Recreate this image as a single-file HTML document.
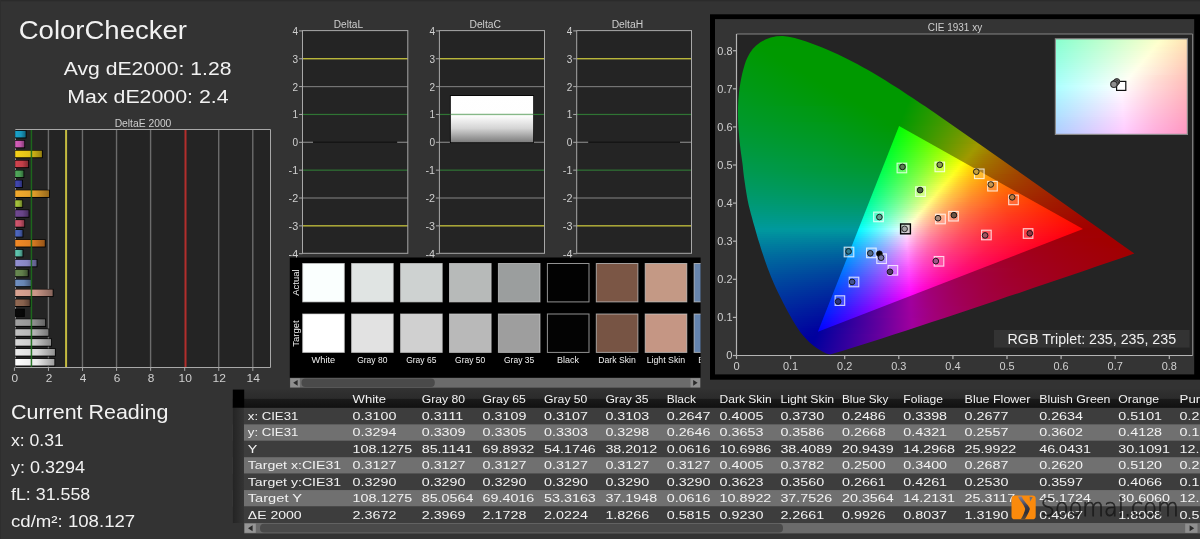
<!DOCTYPE html>
<html><head><meta charset="utf-8"><title>ColorChecker</title>
<style>html,body{margin:0;padding:0;background:#333;overflow:hidden}svg{display:block;will-change:transform}text{font-family:'Liberation Sans', 'DejaVu Sans', sans-serif;}</style>
</head><body>
<svg width="1200" height="539" viewBox="0 0 1200 539">
<rect x="0" y="0" width="1200" height="539" fill="#333333"/>
<rect x="0" y="0" width="1200" height="1.2" fill="#2b2b2b"/><rect x="0" y="0" width="1" height="539" fill="#2e2e2e"/>
<text x="18.7" y="39.3" font-size="26.5" fill="#f2f2f2" textLength="168.3" lengthAdjust="spacingAndGlyphs">ColorChecker</text>
<text x="63.8" y="75.3" font-size="19" fill="#f2f2f2" textLength="167.6" lengthAdjust="spacingAndGlyphs">Avg dE2000: 1.28</text>
<text x="67.3" y="102.8" font-size="19" fill="#f2f2f2" textLength="161.3" lengthAdjust="spacingAndGlyphs">Max dE2000: 2.4</text>
<rect x="15.5" y="129.5" width="255.0" height="238.0" fill="#242424"/>
<rect x="47.71" y="129.5" width="1.4" height="238.0" fill="#6c6c6c"/>
<rect x="81.77" y="129.5" width="1.4" height="238.0" fill="#6c6c6c"/>
<rect x="115.83" y="129.5" width="1.4" height="238.0" fill="#6c6c6c"/>
<rect x="149.89" y="129.5" width="1.4" height="238.0" fill="#6c6c6c"/>
<rect x="218.01" y="129.5" width="1.4" height="238.0" fill="#6c6c6c"/>
<rect x="252.07" y="129.5" width="1.4" height="238.0" fill="#6c6c6c"/>
<rect x="65.09" y="129.5" width="2" height="238.0" fill="#c4bb40"/>
<rect x="184.50" y="129.5" width="2" height="238.0" fill="#b22e2c"/>
<defs>
<linearGradient id="b0" x1="0" x2="1" y1="0" y2="0"><stop offset="0" stop-color="#1ba3cc"/><stop offset="0.55" stop-color="#1895bb"/><stop offset="1" stop-color="#10657e"/></linearGradient>
<linearGradient id="b1" x1="0" x2="1" y1="0" y2="0"><stop offset="0" stop-color="#d65fbc"/><stop offset="0.55" stop-color="#c457ac"/><stop offset="1" stop-color="#843a74"/></linearGradient>
<linearGradient id="b2" x1="0" x2="1" y1="0" y2="0"><stop offset="0" stop-color="#f5d21a"/><stop offset="0.55" stop-color="#e1c117"/><stop offset="1" stop-color="#978210"/></linearGradient>
<linearGradient id="b3" x1="0" x2="1" y1="0" y2="0"><stop offset="0" stop-color="#d3444f"/><stop offset="0.55" stop-color="#c23e48"/><stop offset="1" stop-color="#822a30"/></linearGradient>
<linearGradient id="b4" x1="0" x2="1" y1="0" y2="0"><stop offset="0" stop-color="#52ab5c"/><stop offset="0.55" stop-color="#4b9d54"/><stop offset="1" stop-color="#326a39"/></linearGradient>
<linearGradient id="b5" x1="0" x2="1" y1="0" y2="0"><stop offset="0" stop-color="#4349b4"/><stop offset="0.55" stop-color="#3d43a5"/><stop offset="1" stop-color="#292d6f"/></linearGradient>
<linearGradient id="b6" x1="0" x2="1" y1="0" y2="0"><stop offset="0" stop-color="#f3aa2e"/><stop offset="0.55" stop-color="#df9c2a"/><stop offset="1" stop-color="#96691c"/></linearGradient>
<linearGradient id="b7" x1="0" x2="1" y1="0" y2="0"><stop offset="0" stop-color="#a9c83e"/><stop offset="0.55" stop-color="#9bb839"/><stop offset="1" stop-color="#687c26"/></linearGradient>
<linearGradient id="b8" x1="0" x2="1" y1="0" y2="0"><stop offset="0" stop-color="#714a93"/><stop offset="0.55" stop-color="#674487"/><stop offset="1" stop-color="#462d5b"/></linearGradient>
<linearGradient id="b9" x1="0" x2="1" y1="0" y2="0"><stop offset="0" stop-color="#d5586f"/><stop offset="0.55" stop-color="#c35066"/><stop offset="1" stop-color="#843644"/></linearGradient>
<linearGradient id="b10" x1="0" x2="1" y1="0" y2="0"><stop offset="0" stop-color="#506ac4"/><stop offset="0.55" stop-color="#4961b4"/><stop offset="1" stop-color="#314179"/></linearGradient>
<linearGradient id="b11" x1="0" x2="1" y1="0" y2="0"><stop offset="0" stop-color="#f28a27"/><stop offset="0.55" stop-color="#de7e23"/><stop offset="1" stop-color="#965518"/></linearGradient>
<linearGradient id="b12" x1="0" x2="1" y1="0" y2="0"><stop offset="0" stop-color="#62cbb4"/><stop offset="0.55" stop-color="#5abaa5"/><stop offset="1" stop-color="#3c7d6f"/></linearGradient>
<linearGradient id="b13" x1="0" x2="1" y1="0" y2="0"><stop offset="0" stop-color="#9391d3"/><stop offset="0.55" stop-color="#8785c2"/><stop offset="1" stop-color="#5b5982"/></linearGradient>
<linearGradient id="b14" x1="0" x2="1" y1="0" y2="0"><stop offset="0" stop-color="#6a8a52"/><stop offset="0.55" stop-color="#617e4b"/><stop offset="1" stop-color="#415532"/></linearGradient>
<linearGradient id="b15" x1="0" x2="1" y1="0" y2="0"><stop offset="0" stop-color="#7191c3"/><stop offset="0.55" stop-color="#6785b3"/><stop offset="1" stop-color="#465978"/></linearGradient>
<linearGradient id="b16" x1="0" x2="1" y1="0" y2="0"><stop offset="0" stop-color="#dba493"/><stop offset="0.55" stop-color="#c99687"/><stop offset="1" stop-color="#87655b"/></linearGradient>
<linearGradient id="b17" x1="0" x2="1" y1="0" y2="0"><stop offset="0" stop-color="#936a54"/><stop offset="0.55" stop-color="#87614d"/><stop offset="1" stop-color="#5b4134"/></linearGradient>
<linearGradient id="b18" x1="0" x2="1" y1="0" y2="0"><stop offset="0" stop-color="#0a0a0a"/><stop offset="0.55" stop-color="#090909"/><stop offset="1" stop-color="#060606"/></linearGradient>
<linearGradient id="b19" x1="0" x2="1" y1="0" y2="0"><stop offset="0" stop-color="#a3a3a3"/><stop offset="0.55" stop-color="#959595"/><stop offset="1" stop-color="#656565"/></linearGradient>
<linearGradient id="b20" x1="0" x2="1" y1="0" y2="0"><stop offset="0" stop-color="#c3c3c3"/><stop offset="0.55" stop-color="#b3b3b3"/><stop offset="1" stop-color="#787878"/></linearGradient>
<linearGradient id="b21" x1="0" x2="1" y1="0" y2="0"><stop offset="0" stop-color="#dadada"/><stop offset="0.55" stop-color="#c8c8c8"/><stop offset="1" stop-color="#878787"/></linearGradient>
<linearGradient id="b22" x1="0" x2="1" y1="0" y2="0"><stop offset="0" stop-color="#ececec"/><stop offset="0.55" stop-color="#d9d9d9"/><stop offset="1" stop-color="#929292"/></linearGradient>
<linearGradient id="b23" x1="0" x2="1" y1="0" y2="0"><stop offset="0" stop-color="#ffffff"/><stop offset="0.55" stop-color="#eaeaea"/><stop offset="1" stop-color="#9e9e9e"/></linearGradient>
</defs>
<rect x="15.0" y="129.5" width="1" height="238.0" fill="#8a8a8a"/>
<rect x="15.0" y="130.26" width="11.5" height="8.1" fill="#000"/>
<rect x="15.2" y="130.86" width="10.5" height="6.6" fill="url(#b0)"/>
<rect x="15.0" y="140.17" width="10.1" height="8.1" fill="#000"/>
<rect x="15.2" y="140.77" width="9.1" height="6.6" fill="url(#b1)"/>
<rect x="15.0" y="150.09" width="27.7" height="8.1" fill="#000"/>
<rect x="15.2" y="150.69" width="26.7" height="6.6" fill="url(#b2)"/>
<rect x="15.0" y="160.01" width="14.0" height="8.1" fill="#000"/>
<rect x="15.2" y="160.61" width="13.0" height="6.6" fill="url(#b3)"/>
<rect x="15.0" y="169.92" width="9.3" height="8.1" fill="#000"/>
<rect x="15.2" y="170.52" width="8.3" height="6.6" fill="url(#b4)"/>
<rect x="15.0" y="179.84" width="7.9" height="8.1" fill="#000"/>
<rect x="15.2" y="180.44" width="6.9" height="6.6" fill="url(#b5)"/>
<rect x="15.0" y="189.76" width="34.8" height="8.1" fill="#000"/>
<rect x="15.2" y="190.36" width="33.8" height="6.6" fill="url(#b6)"/>
<rect x="15.0" y="199.67" width="8.1" height="8.1" fill="#000"/>
<rect x="15.2" y="200.27" width="7.1" height="6.6" fill="url(#b7)"/>
<rect x="15.0" y="209.59" width="14.4" height="8.1" fill="#000"/>
<rect x="15.2" y="210.19" width="13.4" height="6.6" fill="url(#b8)"/>
<rect x="15.0" y="219.51" width="10.1" height="8.1" fill="#000"/>
<rect x="15.2" y="220.11" width="9.1" height="6.6" fill="url(#b9)"/>
<rect x="15.0" y="229.42" width="8.4" height="8.1" fill="#000"/>
<rect x="15.2" y="230.02" width="7.4" height="6.6" fill="url(#b10)"/>
<rect x="15.0" y="239.34" width="30.6" height="8.1" fill="#000"/>
<rect x="15.2" y="239.94" width="29.6" height="6.6" fill="url(#b11)"/>
<rect x="15.0" y="249.26" width="8.4" height="8.1" fill="#000"/>
<rect x="15.2" y="249.86" width="7.4" height="6.6" fill="url(#b12)"/>
<rect x="15.0" y="259.18" width="22.4" height="8.1" fill="#000"/>
<rect x="15.2" y="259.77" width="21.4" height="6.6" fill="url(#b13)"/>
<rect x="15.0" y="269.09" width="13.6" height="8.1" fill="#000"/>
<rect x="15.2" y="269.69" width="12.6" height="6.6" fill="url(#b14)"/>
<rect x="15.0" y="279.01" width="16.8" height="8.1" fill="#000"/>
<rect x="15.2" y="279.61" width="15.8" height="6.6" fill="url(#b15)"/>
<rect x="15.0" y="288.93" width="38.5" height="8.1" fill="#000"/>
<rect x="15.2" y="289.52" width="37.5" height="6.6" fill="url(#b16)"/>
<rect x="15.0" y="298.84" width="15.6" height="8.1" fill="#000"/>
<rect x="15.2" y="299.44" width="14.6" height="6.6" fill="url(#b17)"/>
<rect x="15.0" y="308.76" width="9.8" height="8.1" fill="#000"/>
<rect x="15.2" y="309.36" width="8.8" height="6.6" fill="url(#b18)"/>
<rect x="15.0" y="318.68" width="31.0" height="8.1" fill="#000"/>
<rect x="15.2" y="319.27" width="30.0" height="6.6" fill="url(#b19)"/>
<rect x="15.0" y="328.59" width="34.3" height="8.1" fill="#000"/>
<rect x="15.2" y="329.19" width="33.3" height="6.6" fill="url(#b20)"/>
<rect x="15.0" y="338.51" width="36.9" height="8.1" fill="#000"/>
<rect x="15.2" y="339.11" width="35.9" height="6.6" fill="url(#b21)"/>
<rect x="15.0" y="348.43" width="40.7" height="8.1" fill="#000"/>
<rect x="15.2" y="349.02" width="39.7" height="6.6" fill="url(#b22)"/>
<rect x="15.0" y="358.34" width="40.2" height="8.1" fill="#000"/>
<rect x="15.2" y="358.94" width="39.2" height="6.6" fill="url(#b23)"/>
<rect x="30.68" y="129.5" width="1.5" height="238.0" fill="#1c6c1c" opacity="0.92"/>
<path d="M15.5 129.5 H270.5 V367.5 H15.5" fill="none" stroke="#a8a8a8" stroke-width="1"/>
<text x="143.0" y="126.7" font-size="10" fill="#cfcfcf" text-anchor="middle" textLength="56.7" lengthAdjust="spacingAndGlyphs">DeltaE 2000</text>
<rect x="13.90" y="367.5" width="1" height="3.4" fill="#a8a8a8"/>
<text x="14.9" y="381.8" font-size="10.8" fill="#d0d0d0" text-anchor="middle" textLength="6.6" lengthAdjust="spacingAndGlyphs">0</text>
<rect x="47.96" y="367.5" width="1" height="3.4" fill="#a8a8a8"/>
<text x="49.0" y="381.8" font-size="10.8" fill="#d0d0d0" text-anchor="middle" textLength="6.6" lengthAdjust="spacingAndGlyphs">2</text>
<rect x="82.02" y="367.5" width="1" height="3.4" fill="#a8a8a8"/>
<text x="83.0" y="381.8" font-size="10.8" fill="#d0d0d0" text-anchor="middle" textLength="6.6" lengthAdjust="spacingAndGlyphs">4</text>
<rect x="116.08" y="367.5" width="1" height="3.4" fill="#a8a8a8"/>
<text x="117.1" y="381.8" font-size="10.8" fill="#d0d0d0" text-anchor="middle" textLength="6.6" lengthAdjust="spacingAndGlyphs">6</text>
<rect x="150.14" y="367.5" width="1" height="3.4" fill="#a8a8a8"/>
<text x="151.1" y="381.8" font-size="10.8" fill="#d0d0d0" text-anchor="middle" textLength="6.6" lengthAdjust="spacingAndGlyphs">8</text>
<rect x="184.20" y="367.5" width="1" height="3.4" fill="#a8a8a8"/>
<text x="185.2" y="381.8" font-size="10.8" fill="#d0d0d0" text-anchor="middle" textLength="13.4" lengthAdjust="spacingAndGlyphs">10</text>
<rect x="218.26" y="367.5" width="1" height="3.4" fill="#a8a8a8"/>
<text x="219.3" y="381.8" font-size="10.8" fill="#d0d0d0" text-anchor="middle" textLength="13.4" lengthAdjust="spacingAndGlyphs">12</text>
<rect x="252.32" y="367.5" width="1" height="3.4" fill="#a8a8a8"/>
<text x="253.3" y="381.8" font-size="10.8" fill="#d0d0d0" text-anchor="middle" textLength="13.4" lengthAdjust="spacingAndGlyphs">14</text>
<text x="11.0" y="418.8" font-size="21" fill="#f2f2f2" textLength="157.4" lengthAdjust="spacingAndGlyphs">Current Reading</text>
<text x="11.0" y="446.3" font-size="16.3" fill="#f2f2f2" textLength="52.8" lengthAdjust="spacingAndGlyphs">x: 0.31</text>
<text x="11.0" y="473.0" font-size="16.3" fill="#f2f2f2" textLength="74.0" lengthAdjust="spacingAndGlyphs">y: 0.3294</text>
<text x="11.0" y="499.8" font-size="16.3" fill="#f2f2f2" textLength="79.3" lengthAdjust="spacingAndGlyphs">fL: 31.558</text>
<text x="11.0" y="526.7" font-size="16.3" fill="#f2f2f2" textLength="124.2" lengthAdjust="spacingAndGlyphs">cd/m²: 108.127</text>
<defs><linearGradient id="wb" x1="0" x2="0" y1="0" y2="1"><stop offset="0" stop-color="#fff"/><stop offset="0.42" stop-color="#fefefe"/><stop offset="0.7" stop-color="#d4d4d4"/><stop offset="1" stop-color="#7c7c7c"/></linearGradient></defs>
<rect x="302.5" y="30.6" width="105.3" height="222.7" fill="#242424"/>
<rect x="302.5" y="58.15" width="105.3" height="1.2" fill="#d2ce3e"/>
<rect x="302.5" y="86.00" width="105.3" height="1.2" fill="#747474"/>
<rect x="302.5" y="113.85" width="105.3" height="1.2" fill="#2f7434"/>
<rect x="302.5" y="141.70" width="105.3" height="1.2" fill="#808080"/>
<rect x="302.5" y="169.55" width="105.3" height="1.2" fill="#2f7434"/>
<rect x="302.5" y="197.40" width="105.3" height="1.2" fill="#747474"/>
<rect x="302.5" y="225.25" width="105.3" height="1.2" fill="#d2ce3e"/>
<rect x="313.0" y="141.2" width="84.2" height="1.8" fill="#151515"/>
<rect x="302.5" y="30.6" width="105.3" height="222.7" fill="none" stroke="#a8a8a8" stroke-width="1"/>
<rect x="299.0" y="30.40" width="3.5" height="1" fill="#a8a8a8"/>
<text x="298.2" y="34.8" font-size="10.6" fill="#d0d0d0" text-anchor="end" textLength="5.6" lengthAdjust="spacingAndGlyphs">4</text>
<rect x="299.0" y="58.25" width="3.5" height="1" fill="#a8a8a8"/>
<text x="298.2" y="62.6" font-size="10.6" fill="#d0d0d0" text-anchor="end" textLength="5.6" lengthAdjust="spacingAndGlyphs">3</text>
<rect x="299.0" y="86.10" width="3.5" height="1" fill="#a8a8a8"/>
<text x="298.2" y="90.5" font-size="10.6" fill="#d0d0d0" text-anchor="end" textLength="5.6" lengthAdjust="spacingAndGlyphs">2</text>
<rect x="299.0" y="113.95" width="3.5" height="1" fill="#a8a8a8"/>
<text x="298.2" y="118.4" font-size="10.6" fill="#d0d0d0" text-anchor="end" textLength="5.6" lengthAdjust="spacingAndGlyphs">1</text>
<rect x="299.0" y="141.80" width="3.5" height="1" fill="#a8a8a8"/>
<text x="298.2" y="146.2" font-size="10.6" fill="#d0d0d0" text-anchor="end" textLength="5.6" lengthAdjust="spacingAndGlyphs">0</text>
<rect x="299.0" y="169.65" width="3.5" height="1" fill="#a8a8a8"/>
<text x="298.2" y="174.1" font-size="10.6" fill="#d0d0d0" text-anchor="end" textLength="9.6" lengthAdjust="spacingAndGlyphs">-1</text>
<rect x="299.0" y="197.50" width="3.5" height="1" fill="#a8a8a8"/>
<text x="298.2" y="201.9" font-size="10.6" fill="#d0d0d0" text-anchor="end" textLength="9.6" lengthAdjust="spacingAndGlyphs">-2</text>
<rect x="299.0" y="225.35" width="3.5" height="1" fill="#a8a8a8"/>
<text x="298.2" y="229.8" font-size="10.6" fill="#d0d0d0" text-anchor="end" textLength="9.6" lengthAdjust="spacingAndGlyphs">-3</text>
<rect x="299.0" y="253.20" width="3.5" height="1" fill="#a8a8a8"/>
<text x="298.2" y="257.6" font-size="10.6" fill="#d0d0d0" text-anchor="end" textLength="9.6" lengthAdjust="spacingAndGlyphs">-4</text>
<text x="348.4" y="27.5" font-size="10" fill="#cfcfcf" text-anchor="middle" textLength="29.2" lengthAdjust="spacingAndGlyphs">DeltaL</text>
<rect x="439.4" y="30.6" width="105.1" height="222.7" fill="#242424"/>
<rect x="439.4" y="58.15" width="105.1" height="1.2" fill="#d2ce3e"/>
<rect x="439.4" y="86.00" width="105.1" height="1.2" fill="#747474"/>
<rect x="439.4" y="113.85" width="105.1" height="1.2" fill="#2f7434"/>
<rect x="439.4" y="141.70" width="105.1" height="1.2" fill="#808080"/>
<rect x="439.4" y="169.55" width="105.1" height="1.2" fill="#2f7434"/>
<rect x="439.4" y="197.40" width="105.1" height="1.2" fill="#747474"/>
<rect x="439.4" y="225.25" width="105.1" height="1.2" fill="#d2ce3e"/>
<rect x="449.9" y="95.2" width="84.0" height="47.9" fill="#000"/>
<rect x="450.8" y="96.0" width="82.4" height="46.3" fill="url(#wb)"/>
<rect x="450.8" y="113.75" width="82.4" height="1.4" fill="#86b888"/>
<rect x="439.4" y="30.6" width="105.1" height="222.7" fill="none" stroke="#a8a8a8" stroke-width="1"/>
<rect x="435.9" y="30.40" width="3.5" height="1" fill="#a8a8a8"/>
<text x="435.1" y="34.8" font-size="10.6" fill="#d0d0d0" text-anchor="end" textLength="5.6" lengthAdjust="spacingAndGlyphs">4</text>
<rect x="435.9" y="58.25" width="3.5" height="1" fill="#a8a8a8"/>
<text x="435.1" y="62.6" font-size="10.6" fill="#d0d0d0" text-anchor="end" textLength="5.6" lengthAdjust="spacingAndGlyphs">3</text>
<rect x="435.9" y="86.10" width="3.5" height="1" fill="#a8a8a8"/>
<text x="435.1" y="90.5" font-size="10.6" fill="#d0d0d0" text-anchor="end" textLength="5.6" lengthAdjust="spacingAndGlyphs">2</text>
<rect x="435.9" y="113.95" width="3.5" height="1" fill="#a8a8a8"/>
<text x="435.1" y="118.4" font-size="10.6" fill="#d0d0d0" text-anchor="end" textLength="5.6" lengthAdjust="spacingAndGlyphs">1</text>
<rect x="435.9" y="141.80" width="3.5" height="1" fill="#a8a8a8"/>
<text x="435.1" y="146.2" font-size="10.6" fill="#d0d0d0" text-anchor="end" textLength="5.6" lengthAdjust="spacingAndGlyphs">0</text>
<rect x="435.9" y="169.65" width="3.5" height="1" fill="#a8a8a8"/>
<text x="435.1" y="174.1" font-size="10.6" fill="#d0d0d0" text-anchor="end" textLength="9.6" lengthAdjust="spacingAndGlyphs">-1</text>
<rect x="435.9" y="197.50" width="3.5" height="1" fill="#a8a8a8"/>
<text x="435.1" y="201.9" font-size="10.6" fill="#d0d0d0" text-anchor="end" textLength="9.6" lengthAdjust="spacingAndGlyphs">-2</text>
<rect x="435.9" y="225.35" width="3.5" height="1" fill="#a8a8a8"/>
<text x="435.1" y="229.8" font-size="10.6" fill="#d0d0d0" text-anchor="end" textLength="9.6" lengthAdjust="spacingAndGlyphs">-3</text>
<rect x="435.9" y="253.20" width="3.5" height="1" fill="#a8a8a8"/>
<text x="435.1" y="257.6" font-size="10.6" fill="#d0d0d0" text-anchor="end" textLength="9.6" lengthAdjust="spacingAndGlyphs">-4</text>
<text x="485.2" y="27.5" font-size="10" fill="#cfcfcf" text-anchor="middle" textLength="31.5" lengthAdjust="spacingAndGlyphs">DeltaC</text>
<rect x="576.7" y="30.6" width="114.8" height="222.7" fill="#242424"/>
<rect x="576.7" y="58.15" width="114.8" height="1.2" fill="#d2ce3e"/>
<rect x="576.7" y="86.00" width="114.8" height="1.2" fill="#747474"/>
<rect x="576.7" y="113.85" width="114.8" height="1.2" fill="#2f7434"/>
<rect x="576.7" y="141.70" width="114.8" height="1.2" fill="#808080"/>
<rect x="576.7" y="169.55" width="114.8" height="1.2" fill="#2f7434"/>
<rect x="576.7" y="197.40" width="114.8" height="1.2" fill="#747474"/>
<rect x="576.7" y="225.25" width="114.8" height="1.2" fill="#d2ce3e"/>
<rect x="588.2" y="141.2" width="91.8" height="1.8" fill="#151515"/>
<rect x="576.7" y="30.6" width="114.8" height="222.7" fill="none" stroke="#a8a8a8" stroke-width="1"/>
<rect x="573.2" y="30.40" width="3.5" height="1" fill="#a8a8a8"/>
<text x="572.4" y="34.8" font-size="10.6" fill="#d0d0d0" text-anchor="end" textLength="5.6" lengthAdjust="spacingAndGlyphs">4</text>
<rect x="573.2" y="58.25" width="3.5" height="1" fill="#a8a8a8"/>
<text x="572.4" y="62.6" font-size="10.6" fill="#d0d0d0" text-anchor="end" textLength="5.6" lengthAdjust="spacingAndGlyphs">3</text>
<rect x="573.2" y="86.10" width="3.5" height="1" fill="#a8a8a8"/>
<text x="572.4" y="90.5" font-size="10.6" fill="#d0d0d0" text-anchor="end" textLength="5.6" lengthAdjust="spacingAndGlyphs">2</text>
<rect x="573.2" y="113.95" width="3.5" height="1" fill="#a8a8a8"/>
<text x="572.4" y="118.4" font-size="10.6" fill="#d0d0d0" text-anchor="end" textLength="5.6" lengthAdjust="spacingAndGlyphs">1</text>
<rect x="573.2" y="141.80" width="3.5" height="1" fill="#a8a8a8"/>
<text x="572.4" y="146.2" font-size="10.6" fill="#d0d0d0" text-anchor="end" textLength="5.6" lengthAdjust="spacingAndGlyphs">0</text>
<rect x="573.2" y="169.65" width="3.5" height="1" fill="#a8a8a8"/>
<text x="572.4" y="174.1" font-size="10.6" fill="#d0d0d0" text-anchor="end" textLength="9.6" lengthAdjust="spacingAndGlyphs">-1</text>
<rect x="573.2" y="197.50" width="3.5" height="1" fill="#a8a8a8"/>
<text x="572.4" y="201.9" font-size="10.6" fill="#d0d0d0" text-anchor="end" textLength="9.6" lengthAdjust="spacingAndGlyphs">-2</text>
<rect x="573.2" y="225.35" width="3.5" height="1" fill="#a8a8a8"/>
<text x="572.4" y="229.8" font-size="10.6" fill="#d0d0d0" text-anchor="end" textLength="9.6" lengthAdjust="spacingAndGlyphs">-3</text>
<rect x="573.2" y="253.20" width="3.5" height="1" fill="#a8a8a8"/>
<text x="572.4" y="257.6" font-size="10.6" fill="#d0d0d0" text-anchor="end" textLength="9.6" lengthAdjust="spacingAndGlyphs">-4</text>
<text x="627.4" y="27.5" font-size="10" fill="#cfcfcf" text-anchor="middle" textLength="31.5" lengthAdjust="spacingAndGlyphs">DeltaH</text>
<rect x="289.8" y="257.5" width="410.8" height="130.3" fill="#000"/>
<clipPath id="swc"><rect x="289.8" y="257.5" width="410.8" height="120.3"/></clipPath><g clip-path="url(#swc)">
<rect x="302.7" y="263.5" width="41.6" height="38.4" fill="#fafffe" stroke="#d0d0d0" stroke-opacity="0.7" stroke-width="1"/>
<rect x="302.7" y="314.0" width="41.6" height="38.4" fill="#ffffff" stroke="#d0d0d0" stroke-opacity="0.7" stroke-width="1"/>
<text x="323.4" y="363.2" font-size="9.3" fill="#f0f0f0" text-anchor="middle" textLength="23.6" lengthAdjust="spacingAndGlyphs">White</text>
<rect x="351.6" y="263.5" width="41.6" height="38.4" fill="#e0e4e3" stroke="#d0d0d0" stroke-opacity="0.7" stroke-width="1"/>
<rect x="351.6" y="314.0" width="41.6" height="38.4" fill="#e2e2e2" stroke="#d0d0d0" stroke-opacity="0.7" stroke-width="1"/>
<text x="372.3" y="363.2" font-size="9.3" fill="#f0f0f0" text-anchor="middle" textLength="30.2" lengthAdjust="spacingAndGlyphs">Gray 80</text>
<rect x="400.6" y="263.5" width="41.6" height="38.4" fill="#ced2d1" stroke="#d0d0d0" stroke-opacity="0.7" stroke-width="1"/>
<rect x="400.6" y="314.0" width="41.6" height="38.4" fill="#d0d0d0" stroke="#d0d0d0" stroke-opacity="0.7" stroke-width="1"/>
<text x="421.3" y="363.2" font-size="9.3" fill="#f0f0f0" text-anchor="middle" textLength="30.2" lengthAdjust="spacingAndGlyphs">Gray 65</text>
<rect x="449.5" y="263.5" width="41.6" height="38.4" fill="#b7bab9" stroke="#d0d0d0" stroke-opacity="0.7" stroke-width="1"/>
<rect x="449.5" y="314.0" width="41.6" height="38.4" fill="#b9b9b9" stroke="#d0d0d0" stroke-opacity="0.7" stroke-width="1"/>
<text x="470.2" y="363.2" font-size="9.3" fill="#f0f0f0" text-anchor="middle" textLength="30.2" lengthAdjust="spacingAndGlyphs">Gray 50</text>
<rect x="498.4" y="263.5" width="41.6" height="38.4" fill="#9b9e9e" stroke="#d0d0d0" stroke-opacity="0.7" stroke-width="1"/>
<rect x="498.4" y="314.0" width="41.6" height="38.4" fill="#9e9e9e" stroke="#d0d0d0" stroke-opacity="0.7" stroke-width="1"/>
<text x="519.1" y="363.2" font-size="9.3" fill="#f0f0f0" text-anchor="middle" textLength="30.2" lengthAdjust="spacingAndGlyphs">Gray 35</text>
<rect x="547.4" y="263.5" width="41.6" height="38.4" fill="#020202" stroke="#d0d0d0" stroke-opacity="0.7" stroke-width="1"/>
<rect x="547.4" y="314.0" width="41.6" height="38.4" fill="#030303" stroke="#d0d0d0" stroke-opacity="0.7" stroke-width="1"/>
<text x="568.1" y="363.2" font-size="9.3" fill="#f0f0f0" text-anchor="middle" textLength="22.0" lengthAdjust="spacingAndGlyphs">Black</text>
<rect x="596.3" y="263.5" width="41.6" height="38.4" fill="#7b5645" stroke="#d0d0d0" stroke-opacity="0.7" stroke-width="1"/>
<rect x="596.3" y="314.0" width="41.6" height="38.4" fill="#775444" stroke="#d0d0d0" stroke-opacity="0.7" stroke-width="1"/>
<text x="617.0" y="363.2" font-size="9.3" fill="#f0f0f0" text-anchor="middle" textLength="37.5" lengthAdjust="spacingAndGlyphs">Dark Skin</text>
<rect x="645.2" y="263.5" width="41.6" height="38.4" fill="#c49985" stroke="#d0d0d0" stroke-opacity="0.7" stroke-width="1"/>
<rect x="645.2" y="314.0" width="41.6" height="38.4" fill="#c59684" stroke="#d0d0d0" stroke-opacity="0.7" stroke-width="1"/>
<text x="665.9" y="363.2" font-size="9.3" fill="#f0f0f0" text-anchor="middle" textLength="38.5" lengthAdjust="spacingAndGlyphs">Light Skin</text>
<rect x="694.1" y="263.5" width="41.6" height="38.4" fill="#6785ad" stroke="#d0d0d0" stroke-opacity="0.7" stroke-width="1"/>
<rect x="694.1" y="314.0" width="41.6" height="38.4" fill="#6484af" stroke="#d0d0d0" stroke-opacity="0.7" stroke-width="1"/>
<text x="714.8" y="363.2" font-size="9.3" fill="#f0f0f0" text-anchor="middle" textLength="33.0" lengthAdjust="spacingAndGlyphs">Blue Sky</text>
</g>
<text transform="translate(299.3,282.6) rotate(-90)" font-size="9.5" fill="#f0f0f0" text-anchor="middle">Actual</text>
<text transform="translate(299.3,333.6) rotate(-90)" font-size="9.5" fill="#f0f0f0" text-anchor="middle">Target</text>
<rect x="289.8" y="377.8" width="410.8" height="10" fill="#6b6b6b"/>
<rect x="301.5" y="378.6" width="133.3" height="8.4" rx="4" fill="#4a4a4a"/>
<rect x="290.3" y="378.3" width="9.6" height="9" fill="#8f8f8f"/><path d="M297.6 379.9 L293.2 382.8 L297.6 385.7Z" fill="#2a2a2a"/>
<rect x="690.5" y="378.3" width="9.6" height="9" fill="#8f8f8f"/><path d="M693.2 379.9 L697.6 382.8 L693.2 385.7Z" fill="#2a2a2a"/>
<rect x="710" y="14.3" width="490" height="365.4" fill="#000"/>
<rect x="715" y="19.1" width="479.2" height="355.3" fill="#343434"/>
<rect x="736.5" y="34.0" width="456.0999999999999" height="321.5" fill="#242424"/>
<defs><linearGradient id="L0" gradientUnits="userSpaceOnUse" x1="768" x2="796" y1="0" y2="0"><stop offset="0" stop-color="#009900"/><stop offset="1" stop-color="#009900"/></linearGradient><linearGradient id="L1" gradientUnits="userSpaceOnUse" x1="763" x2="803" y1="0" y2="0"><stop offset="0" stop-color="#009900"/><stop offset="1" stop-color="#009900"/></linearGradient><linearGradient id="L2" gradientUnits="userSpaceOnUse" x1="759" x2="809" y1="0" y2="0"><stop offset="0" stop-color="#009900"/><stop offset="1" stop-color="#009900"/></linearGradient><linearGradient id="L3" gradientUnits="userSpaceOnUse" x1="757" x2="815" y1="0" y2="0"><stop offset="0" stop-color="#009900"/><stop offset="1" stop-color="#009900"/></linearGradient><linearGradient id="L4" gradientUnits="userSpaceOnUse" x1="754" x2="820" y1="0" y2="0"><stop offset="0" stop-color="#009900"/><stop offset="1" stop-color="#009900"/></linearGradient><linearGradient id="L5" gradientUnits="userSpaceOnUse" x1="752" x2="825" y1="0" y2="0"><stop offset="0" stop-color="#009902"/><stop offset="1" stop-color="#009900"/></linearGradient><linearGradient id="L6" gradientUnits="userSpaceOnUse" x1="751" x2="830" y1="0" y2="0"><stop offset="0" stop-color="#009903"/><stop offset="1" stop-color="#009900"/></linearGradient><linearGradient id="L7" gradientUnits="userSpaceOnUse" x1="749" x2="834" y1="0" y2="0"><stop offset="0" stop-color="#009904"/><stop offset="0.188" stop-color="#009900"/><stop offset="1" stop-color="#009900"/></linearGradient><linearGradient id="L8" gradientUnits="userSpaceOnUse" x1="748" x2="839" y1="0" y2="0"><stop offset="0" stop-color="#009906"/><stop offset="0.231" stop-color="#009900"/><stop offset="1" stop-color="#009900"/></linearGradient><linearGradient id="L9" gradientUnits="userSpaceOnUse" x1="747" x2="843" y1="0" y2="0"><stop offset="0" stop-color="#009907"/><stop offset="0.26" stop-color="#009900"/><stop offset="1" stop-color="#009900"/></linearGradient><linearGradient id="L10" gradientUnits="userSpaceOnUse" x1="746" x2="847" y1="0" y2="0"><stop offset="0" stop-color="#009908"/><stop offset="0.297" stop-color="#009900"/><stop offset="1" stop-color="#009900"/></linearGradient><linearGradient id="L11" gradientUnits="userSpaceOnUse" x1="745" x2="851" y1="0" y2="0"><stop offset="0" stop-color="#009909"/><stop offset="0.321" stop-color="#009900"/><stop offset="1" stop-color="#009900"/></linearGradient><linearGradient id="L12" gradientUnits="userSpaceOnUse" x1="744" x2="855" y1="0" y2="0"><stop offset="0" stop-color="#00990a"/><stop offset="0.351" stop-color="#009900"/><stop offset="1" stop-color="#009900"/></linearGradient><linearGradient id="L13" gradientUnits="userSpaceOnUse" x1="743" x2="859" y1="0" y2="0"><stop offset="0" stop-color="#00990b"/><stop offset="0.379" stop-color="#009900"/><stop offset="1" stop-color="#009900"/></linearGradient><linearGradient id="L14" gradientUnits="userSpaceOnUse" x1="743" x2="862" y1="0" y2="0"><stop offset="0" stop-color="#00990c"/><stop offset="0.395" stop-color="#009900"/><stop offset="1" stop-color="#009900"/></linearGradient><linearGradient id="L15" gradientUnits="userSpaceOnUse" x1="742" x2="866" y1="0" y2="0"><stop offset="0" stop-color="#00990e"/><stop offset="0.419" stop-color="#009900"/><stop offset="1" stop-color="#009900"/></linearGradient><linearGradient id="L16" gradientUnits="userSpaceOnUse" x1="742" x2="869" y1="0" y2="0"><stop offset="0" stop-color="#00990f"/><stop offset="0.433" stop-color="#009900"/><stop offset="1" stop-color="#009900"/></linearGradient><linearGradient id="L17" gradientUnits="userSpaceOnUse" x1="741" x2="873" y1="0" y2="0"><stop offset="0" stop-color="#009910"/><stop offset="0.455" stop-color="#009900"/><stop offset="1" stop-color="#009900"/></linearGradient><linearGradient id="L18" gradientUnits="userSpaceOnUse" x1="741" x2="876" y1="0" y2="0"><stop offset="0" stop-color="#009911"/><stop offset="0.467" stop-color="#009900"/><stop offset="1" stop-color="#009900"/></linearGradient><linearGradient id="L19" gradientUnits="userSpaceOnUse" x1="740" x2="880" y1="0" y2="0"><stop offset="0" stop-color="#009912"/><stop offset="0.486" stop-color="#009900"/><stop offset="1" stop-color="#009900"/></linearGradient><linearGradient id="L20" gradientUnits="userSpaceOnUse" x1="740" x2="883" y1="0" y2="0"><stop offset="0" stop-color="#009913"/><stop offset="0.503" stop-color="#009900"/><stop offset="1" stop-color="#009900"/></linearGradient><linearGradient id="L21" gradientUnits="userSpaceOnUse" x1="739" x2="886" y1="0" y2="0"><stop offset="0" stop-color="#009914"/><stop offset="0.517" stop-color="#009900"/><stop offset="1" stop-color="#009900"/></linearGradient><linearGradient id="L22" gradientUnits="userSpaceOnUse" x1="739" x2="889" y1="0" y2="0"><stop offset="0" stop-color="#009915"/><stop offset="0.533" stop-color="#009900"/><stop offset="1" stop-color="#009900"/></linearGradient><linearGradient id="L23" gradientUnits="userSpaceOnUse" x1="739" x2="893" y1="0" y2="0"><stop offset="0" stop-color="#009916"/><stop offset="0.539" stop-color="#009900"/><stop offset="1" stop-color="#009900"/></linearGradient><linearGradient id="L24" gradientUnits="userSpaceOnUse" x1="738" x2="896" y1="0" y2="0"><stop offset="0" stop-color="#009917"/><stop offset="0.557" stop-color="#009900"/><stop offset="1" stop-color="#009900"/></linearGradient><linearGradient id="L25" gradientUnits="userSpaceOnUse" x1="738" x2="899" y1="0" y2="0"><stop offset="0" stop-color="#009918"/><stop offset="0.565" stop-color="#009900"/><stop offset="1" stop-color="#009900"/></linearGradient><linearGradient id="L26" gradientUnits="userSpaceOnUse" x1="738" x2="902" y1="0" y2="0"><stop offset="0" stop-color="#009919"/><stop offset="0.579" stop-color="#009900"/><stop offset="1" stop-color="#009900"/></linearGradient><linearGradient id="L27" gradientUnits="userSpaceOnUse" x1="738" x2="905" y1="0" y2="0"><stop offset="0" stop-color="#00991a"/><stop offset="0.593" stop-color="#009900"/><stop offset="1" stop-color="#009900"/></linearGradient><linearGradient id="L28" gradientUnits="userSpaceOnUse" x1="737" x2="908" y1="0" y2="0"><stop offset="0" stop-color="#00991c"/><stop offset="0.602" stop-color="#009900"/><stop offset="1" stop-color="#009900"/></linearGradient><linearGradient id="L29" gradientUnits="userSpaceOnUse" x1="737" x2="911" y1="0" y2="0"><stop offset="0" stop-color="#00991d"/><stop offset="0.615" stop-color="#009900"/><stop offset="1" stop-color="#009900"/></linearGradient><linearGradient id="L30" gradientUnits="userSpaceOnUse" x1="737" x2="914" y1="0" y2="0"><stop offset="0" stop-color="#00991e"/><stop offset="0.621" stop-color="#009900"/><stop offset="0.977" stop-color="#009900"/><stop offset="1" stop-color="#069900"/></linearGradient><linearGradient id="L31" gradientUnits="userSpaceOnUse" x1="737" x2="917" y1="0" y2="0"><stop offset="0" stop-color="#00991f"/><stop offset="0.633" stop-color="#009900"/><stop offset="0.956" stop-color="#009900"/><stop offset="1" stop-color="#0b9900"/></linearGradient><linearGradient id="L32" gradientUnits="userSpaceOnUse" x1="737" x2="920" y1="0" y2="0"><stop offset="0" stop-color="#009920"/><stop offset="0.639" stop-color="#009900"/><stop offset="0.94" stop-color="#009900"/><stop offset="1" stop-color="#119900"/></linearGradient><linearGradient id="L33" gradientUnits="userSpaceOnUse" x1="737" x2="923" y1="0" y2="0"><stop offset="0" stop-color="#009921"/><stop offset="0.651" stop-color="#009900"/><stop offset="0.919" stop-color="#009900"/><stop offset="1" stop-color="#169900"/></linearGradient><linearGradient id="L34" gradientUnits="userSpaceOnUse" x1="737" x2="926" y1="0" y2="0"><stop offset="0" stop-color="#009922"/><stop offset="0.661" stop-color="#009900"/><stop offset="0.899" stop-color="#009900"/><stop offset="1" stop-color="#1c9900"/></linearGradient><linearGradient id="L35" gradientUnits="userSpaceOnUse" x1="737" x2="929" y1="0" y2="0"><stop offset="0" stop-color="#009923"/><stop offset="0.391" stop-color="#009912"/><stop offset="0.667" stop-color="#009900"/><stop offset="0.88" stop-color="#009900"/><stop offset="1" stop-color="#219900"/></linearGradient><linearGradient id="L36" gradientUnits="userSpaceOnUse" x1="737" x2="932" y1="0" y2="0"><stop offset="0" stop-color="#009924"/><stop offset="0.39" stop-color="#009913"/><stop offset="0.677" stop-color="#009900"/><stop offset="0.862" stop-color="#009900"/><stop offset="1" stop-color="#279900"/></linearGradient><linearGradient id="L37" gradientUnits="userSpaceOnUse" x1="736" x2="935" y1="0" y2="0"><stop offset="0" stop-color="#009926"/><stop offset="0.402" stop-color="#009913"/><stop offset="0.683" stop-color="#009900"/><stop offset="0.849" stop-color="#009900"/><stop offset="1" stop-color="#2d9900"/></linearGradient><linearGradient id="L38" gradientUnits="userSpaceOnUse" x1="736" x2="938" y1="0" y2="0"><stop offset="0" stop-color="#009927"/><stop offset="0.401" stop-color="#009914"/><stop offset="0.693" stop-color="#009900"/><stop offset="0.832" stop-color="#009900"/><stop offset="1" stop-color="#339900"/></linearGradient><linearGradient id="L39" gradientUnits="userSpaceOnUse" x1="737" x2="941" y1="0" y2="0"><stop offset="0" stop-color="#009928"/><stop offset="0.407" stop-color="#009914"/><stop offset="0.696" stop-color="#009900"/><stop offset="0.814" stop-color="#009900"/><stop offset="1" stop-color="#399900"/></linearGradient><linearGradient id="L40" gradientUnits="userSpaceOnUse" x1="737" x2="944" y1="0" y2="0"><stop offset="0" stop-color="#009929"/><stop offset="0.411" stop-color="#009915"/><stop offset="0.705" stop-color="#009900"/><stop offset="0.797" stop-color="#009900"/><stop offset="1" stop-color="#3f9900"/></linearGradient><linearGradient id="L41" gradientUnits="userSpaceOnUse" x1="737" x2="947" y1="0" y2="0"><stop offset="0" stop-color="#00992a"/><stop offset="0.414" stop-color="#009916"/><stop offset="0.71" stop-color="#009900"/><stop offset="0.786" stop-color="#009900"/><stop offset="1" stop-color="#459900"/></linearGradient><linearGradient id="L42" gradientUnits="userSpaceOnUse" x1="737" x2="949" y1="0" y2="0"><stop offset="0" stop-color="#00992c"/><stop offset="0.774" stop-color="#009900"/><stop offset="1" stop-color="#4b9900"/></linearGradient><linearGradient id="L43" gradientUnits="userSpaceOnUse" x1="737" x2="952" y1="0" y2="0"><stop offset="0" stop-color="#00992d"/><stop offset="0.391" stop-color="#009919"/><stop offset="0.758" stop-color="#009900"/><stop offset="1" stop-color="#519900"/></linearGradient><linearGradient id="L44" gradientUnits="userSpaceOnUse" x1="737" x2="955" y1="0" y2="0"><stop offset="0" stop-color="#00992e"/><stop offset="0.422" stop-color="#009919"/><stop offset="0.743" stop-color="#009900"/><stop offset="1" stop-color="#589900"/></linearGradient><linearGradient id="L45" gradientUnits="userSpaceOnUse" x1="737" x2="958" y1="0" y2="0"><stop offset="0" stop-color="#009930"/><stop offset="0.421" stop-color="#00991a"/><stop offset="0.729" stop-color="#009902"/><stop offset="1" stop-color="#609900"/></linearGradient><linearGradient id="L46" gradientUnits="userSpaceOnUse" x1="737" x2="961" y1="0" y2="0"><stop offset="0" stop-color="#009931"/><stop offset="0.411" stop-color="#00991b"/><stop offset="0.719" stop-color="#009903"/><stop offset="1" stop-color="#679900"/></linearGradient><linearGradient id="L47" gradientUnits="userSpaceOnUse" x1="737" x2="964" y1="0" y2="0"><stop offset="0" stop-color="#009932"/><stop offset="0.401" stop-color="#00991d"/><stop offset="0.705" stop-color="#009905"/><stop offset="0.753" stop-color="#139900"/><stop offset="1" stop-color="#6f9900"/></linearGradient><linearGradient id="L48" gradientUnits="userSpaceOnUse" x1="737" x2="967" y1="0" y2="0"><stop offset="0" stop-color="#009934"/><stop offset="0.391" stop-color="#00991f"/><stop offset="0.691" stop-color="#009908"/><stop offset="0.761" stop-color="#1b9900"/><stop offset="1" stop-color="#779900"/></linearGradient><linearGradient id="L49" gradientUnits="userSpaceOnUse" x1="737" x2="970" y1="0" y2="0"><stop offset="0" stop-color="#009935"/><stop offset="0.382" stop-color="#009921"/><stop offset="0.678" stop-color="#00990a"/><stop offset="0.764" stop-color="#219900"/><stop offset="1" stop-color="#7f9900"/></linearGradient><linearGradient id="L50" gradientUnits="userSpaceOnUse" x1="738" x2="972" y1="0" y2="0"><stop offset="0" stop-color="#009936"/><stop offset="0.376" stop-color="#009922"/><stop offset="0.671" stop-color="#00990b"/><stop offset="0.774" stop-color="#299900"/><stop offset="1" stop-color="#869900"/></linearGradient><linearGradient id="L51" gradientUnits="userSpaceOnUse" x1="738" x2="975" y1="0" y2="0"><stop offset="0" stop-color="#009938"/><stop offset="0.367" stop-color="#009924"/><stop offset="0.658" stop-color="#00990d"/><stop offset="0.776" stop-color="#309900"/><stop offset="1" stop-color="#8f9900"/></linearGradient><linearGradient id="L52" gradientUnits="userSpaceOnUse" x1="738" x2="978" y1="0" y2="0"><stop offset="0" stop-color="#009939"/><stop offset="0.358" stop-color="#009926"/><stop offset="0.646" stop-color="#009910"/><stop offset="0.783" stop-color="#389900"/><stop offset="1" stop-color="#999900"/></linearGradient><linearGradient id="L53" gradientUnits="userSpaceOnUse" x1="738" x2="981" y1="0" y2="0"><stop offset="0" stop-color="#00993a"/><stop offset="0.35" stop-color="#009928"/><stop offset="0.634" stop-color="#009912"/><stop offset="0.79" stop-color="#419900"/><stop offset="1" stop-color="#a19700"/></linearGradient><linearGradient id="L54" gradientUnits="userSpaceOnUse" x1="738" x2="984" y1="0" y2="0"><stop offset="0" stop-color="#00993c"/><stop offset="0.341" stop-color="#00992a"/><stop offset="0.622" stop-color="#009914"/><stop offset="0.793" stop-color="#499900"/><stop offset="0.976" stop-color="#a09900"/><stop offset="1" stop-color="#a18e00"/></linearGradient><linearGradient id="L55" gradientUnits="userSpaceOnUse" x1="739" x2="987" y1="0" y2="0"><stop offset="0" stop-color="#00993d"/><stop offset="0.339" stop-color="#00992b"/><stop offset="0.613" stop-color="#009916"/><stop offset="0.798" stop-color="#529900"/><stop offset="0.956" stop-color="#9f9900"/><stop offset="1" stop-color="#a18600"/></linearGradient><linearGradient id="L56" gradientUnits="userSpaceOnUse" x1="739" x2="990" y1="0" y2="0"><stop offset="0" stop-color="#00993f"/><stop offset="0.331" stop-color="#00992d"/><stop offset="0.602" stop-color="#009918"/><stop offset="0.801" stop-color="#5a9900"/><stop offset="0.94" stop-color="#a19900"/><stop offset="1" stop-color="#a17e00"/></linearGradient><linearGradient id="L57" gradientUnits="userSpaceOnUse" x1="739" x2="992" y1="0" y2="0"><stop offset="0" stop-color="#009940"/><stop offset="0.324" stop-color="#00992f"/><stop offset="0.593" stop-color="#00991a"/><stop offset="0.81" stop-color="#649900"/><stop offset="0.925" stop-color="#a09900"/><stop offset="1" stop-color="#a17800"/></linearGradient><linearGradient id="L58" gradientUnits="userSpaceOnUse" x1="739" x2="995" y1="0" y2="0"><stop offset="0" stop-color="#009942"/><stop offset="0.32" stop-color="#009931"/><stop offset="0.582" stop-color="#00991c"/><stop offset="0.812" stop-color="#6d9900"/><stop offset="0.906" stop-color="#9f9900"/><stop offset="1" stop-color="#a17200"/></linearGradient><linearGradient id="L59" gradientUnits="userSpaceOnUse" x1="740" x2="998" y1="0" y2="0"><stop offset="0" stop-color="#009943"/><stop offset="0.314" stop-color="#009932"/><stop offset="0.57" stop-color="#00991e"/><stop offset="0.818" stop-color="#789900"/><stop offset="0.891" stop-color="#a19900"/><stop offset="0.942" stop-color="#a18000"/><stop offset="1" stop-color="#a16b00"/></linearGradient><linearGradient id="L60" gradientUnits="userSpaceOnUse" x1="740" x2="1001" y1="0" y2="0"><stop offset="0" stop-color="#009945"/><stop offset="0.31" stop-color="#009934"/><stop offset="0.563" stop-color="#009920"/><stop offset="0.82" stop-color="#829900"/><stop offset="0.874" stop-color="#a09900"/><stop offset="0.931" stop-color="#a17d00"/><stop offset="1" stop-color="#a16500"/></linearGradient><linearGradient id="L61" gradientUnits="userSpaceOnUse" x1="740" x2="1004" y1="0" y2="0"><stop offset="0" stop-color="#009947"/><stop offset="0.303" stop-color="#009936"/><stop offset="0.553" stop-color="#009923"/><stop offset="0.739" stop-color="#5d990e"/><stop offset="0.826" stop-color="#8e9900"/><stop offset="0.856" stop-color="#a09900"/><stop offset="0.924" stop-color="#a17900"/><stop offset="1" stop-color="#a15f00"/></linearGradient><linearGradient id="L62" gradientUnits="userSpaceOnUse" x1="740" x2="1007" y1="0" y2="0"><stop offset="0" stop-color="#009948"/><stop offset="0.296" stop-color="#009938"/><stop offset="0.543" stop-color="#009925"/><stop offset="0.719" stop-color="#5a9912"/><stop offset="0.843" stop-color="#a19800"/><stop offset="0.914" stop-color="#a17600"/><stop offset="1" stop-color="#a15a00"/></linearGradient><linearGradient id="L63" gradientUnits="userSpaceOnUse" x1="741" x2="1009" y1="0" y2="0"><stop offset="0" stop-color="#00994a"/><stop offset="0.291" stop-color="#00993a"/><stop offset="0.534" stop-color="#009928"/><stop offset="0.709" stop-color="#5b9914"/><stop offset="0.828" stop-color="#a19902"/><stop offset="0.903" stop-color="#a17500"/><stop offset="1" stop-color="#a15600"/></linearGradient><linearGradient id="L64" gradientUnits="userSpaceOnUse" x1="741" x2="1012" y1="0" y2="0"><stop offset="0" stop-color="#00994c"/><stop offset="0.288" stop-color="#00993c"/><stop offset="0.524" stop-color="#00992a"/><stop offset="0.694" stop-color="#599918"/><stop offset="0.812" stop-color="#a09906"/><stop offset="0.841" stop-color="#a18900"/><stop offset="0.897" stop-color="#a17000"/><stop offset="1" stop-color="#a15100"/></linearGradient><linearGradient id="L65" gradientUnits="userSpaceOnUse" x1="741" x2="1015" y1="0" y2="0"><stop offset="0" stop-color="#00994e"/><stop offset="0.518" stop-color="#00992c"/><stop offset="0.686" stop-color="#5c991a"/><stop offset="0.799" stop-color="#a19809"/><stop offset="0.843" stop-color="#a18000"/><stop offset="0.887" stop-color="#a16e00"/><stop offset="1" stop-color="#a14c00"/></linearGradient><linearGradient id="L66" gradientUnits="userSpaceOnUse" x1="741" x2="1018" y1="0" y2="0"><stop offset="0" stop-color="#00994f"/><stop offset="0.509" stop-color="#00992f"/><stop offset="0.675" stop-color="#5d991d"/><stop offset="0.783" stop-color="#a1990d"/><stop offset="0.848" stop-color="#a17600"/><stop offset="0.877" stop-color="#a16b00"/><stop offset="1" stop-color="#a14800"/></linearGradient><linearGradient id="L67" gradientUnits="userSpaceOnUse" x1="742" x2="1021" y1="0" y2="0"><stop offset="0" stop-color="#009951"/><stop offset="0.498" stop-color="#009931"/><stop offset="0.659" stop-color="#5c9920"/><stop offset="0.767" stop-color="#a09911"/><stop offset="0.814" stop-color="#a17f07"/><stop offset="0.867" stop-color="#a16800"/><stop offset="1" stop-color="#a14400"/></linearGradient><linearGradient id="L68" gradientUnits="userSpaceOnUse" x1="742" x2="1024" y1="0" y2="0"><stop offset="0" stop-color="#009953"/><stop offset="0.489" stop-color="#009934"/><stop offset="0.645" stop-color="#5a9923"/><stop offset="0.752" stop-color="#a09914"/><stop offset="0.805" stop-color="#a17b09"/><stop offset="0.858" stop-color="#a16500"/><stop offset="1" stop-color="#a14000"/></linearGradient><linearGradient id="L69" gradientUnits="userSpaceOnUse" x1="742" x2="1026" y1="0" y2="0"><stop offset="0" stop-color="#009955"/><stop offset="0.482" stop-color="#009937"/><stop offset="0.63" stop-color="#569927"/><stop offset="0.743" stop-color="#a19817"/><stop offset="0.792" stop-color="#a17c0c"/><stop offset="0.849" stop-color="#a16402"/><stop offset="0.919" stop-color="#a14f00"/><stop offset="1" stop-color="#a13d00"/></linearGradient><linearGradient id="L70" gradientUnits="userSpaceOnUse" x1="742" x2="1029" y1="0" y2="0"><stop offset="0" stop-color="#009957"/><stop offset="0.477" stop-color="#009939"/><stop offset="0.631" stop-color="#5e9929"/><stop offset="0.728" stop-color="#a1991b"/><stop offset="0.78" stop-color="#a17a0f"/><stop offset="0.84" stop-color="#a16104"/><stop offset="0.868" stop-color="#a15800"/><stop offset="1" stop-color="#a13900"/></linearGradient><linearGradient id="L71" gradientUnits="userSpaceOnUse" x1="743" x2="1032" y1="0" y2="0"><stop offset="0" stop-color="#009959"/><stop offset="0.467" stop-color="#00993c"/><stop offset="0.616" stop-color="#5c992c"/><stop offset="0.713" stop-color="#a0991f"/><stop offset="0.768" stop-color="#a17911"/><stop offset="0.83" stop-color="#a15f06"/><stop offset="0.869" stop-color="#a15300"/><stop offset="1" stop-color="#a13600"/></linearGradient><linearGradient id="L72" gradientUnits="userSpaceOnUse" x1="743" x2="1035" y1="0" y2="0"><stop offset="0" stop-color="#00995b"/><stop offset="0.459" stop-color="#00993f"/><stop offset="0.599" stop-color="#599930"/><stop offset="0.702" stop-color="#a19822"/><stop offset="0.757" stop-color="#a17714"/><stop offset="0.822" stop-color="#a15c08"/><stop offset="0.873" stop-color="#a14d00"/><stop offset="1" stop-color="#a13200"/></linearGradient><linearGradient id="L73" gradientUnits="userSpaceOnUse" x1="743" x2="1038" y1="0" y2="0"><stop offset="0" stop-color="#00995d"/><stop offset="0.451" stop-color="#009942"/><stop offset="0.59" stop-color="#599934"/><stop offset="0.685" stop-color="#9f9927"/><stop offset="0.746" stop-color="#a17517"/><stop offset="0.814" stop-color="#a15a09"/><stop offset="0.875" stop-color="#a14800"/><stop offset="1" stop-color="#a12f00"/></linearGradient><linearGradient id="L74" gradientUnits="userSpaceOnUse" x1="743" x2="1041" y1="0" y2="0"><stop offset="0" stop-color="#00995f"/><stop offset="0.446" stop-color="#009944"/><stop offset="0.587" stop-color="#5f9936"/><stop offset="0.674" stop-color="#a0992b"/><stop offset="0.732" stop-color="#a1751a"/><stop offset="0.802" stop-color="#a1580c"/><stop offset="0.879" stop-color="#a14300"/><stop offset="1" stop-color="#a12c00"/></linearGradient><linearGradient id="L75" gradientUnits="userSpaceOnUse" x1="744" x2="1043" y1="0" y2="0"><stop offset="0" stop-color="#009961"/><stop offset="0.438" stop-color="#009947"/><stop offset="0.575" stop-color="#5d993a"/><stop offset="0.662" stop-color="#a0992f"/><stop offset="0.722" stop-color="#a1741c"/><stop offset="0.796" stop-color="#a1560d"/><stop offset="0.883" stop-color="#a13e00"/><stop offset="1" stop-color="#a12a00"/></linearGradient><linearGradient id="L76" gradientUnits="userSpaceOnUse" x1="744" x2="1046" y1="0" y2="0"><stop offset="0" stop-color="#009963"/><stop offset="0.43" stop-color="#00994a"/><stop offset="0.563" stop-color="#5c993e"/><stop offset="0.649" stop-color="#9f9933"/><stop offset="0.715" stop-color="#a1711e"/><stop offset="0.788" stop-color="#a1530f"/><stop offset="0.887" stop-color="#a13a00"/><stop offset="1" stop-color="#a12700"/></linearGradient><linearGradient id="L77" gradientUnits="userSpaceOnUse" x1="744" x2="1049" y1="0" y2="0"><stop offset="0" stop-color="#009966"/><stop offset="0.423" stop-color="#00994e"/><stop offset="0.551" stop-color="#5a9942"/><stop offset="0.639" stop-color="#a19937"/><stop offset="0.698" stop-color="#a17222"/><stop offset="0.777" stop-color="#a15211"/><stop offset="0.889" stop-color="#a13600"/><stop offset="1" stop-color="#a12400"/></linearGradient><linearGradient id="L78" gradientUnits="userSpaceOnUse" x1="745" x2="1052" y1="0" y2="0"><stop offset="0" stop-color="#009968"/><stop offset="0.414" stop-color="#009951"/><stop offset="0.537" stop-color="#599946"/><stop offset="0.625" stop-color="#a0993b"/><stop offset="0.691" stop-color="#a16f24"/><stop offset="0.769" stop-color="#a14f12"/><stop offset="0.893" stop-color="#a13200"/><stop offset="1" stop-color="#a12100"/></linearGradient><linearGradient id="L79" gradientUnits="userSpaceOnUse" x1="745" x2="1055" y1="0" y2="0"><stop offset="0" stop-color="#00996a"/><stop offset="0.41" stop-color="#009954"/><stop offset="0.535" stop-color="#5e9949"/><stop offset="0.613" stop-color="#9f9940"/><stop offset="0.681" stop-color="#a16d26"/><stop offset="0.761" stop-color="#a14d14"/><stop offset="0.894" stop-color="#a12e00"/><stop offset="1" stop-color="#a11f00"/></linearGradient><linearGradient id="L80" gradientUnits="userSpaceOnUse" x1="745" x2="1058" y1="0" y2="0"><stop offset="0" stop-color="#00996d"/><stop offset="0.403" stop-color="#009957"/><stop offset="0.524" stop-color="#5d994d"/><stop offset="0.601" stop-color="#9e9944"/><stop offset="0.671" stop-color="#a16c29"/><stop offset="0.751" stop-color="#a14c16"/><stop offset="0.898" stop-color="#a12a00"/><stop offset="1" stop-color="#a11c00"/></linearGradient><linearGradient id="L81" gradientUnits="userSpaceOnUse" x1="746" x2="1060" y1="0" y2="0"><stop offset="0" stop-color="#00996f"/><stop offset="0.395" stop-color="#00995b"/><stop offset="0.513" stop-color="#5b9951"/><stop offset="0.592" stop-color="#a19948"/><stop offset="0.656" stop-color="#a16d2d"/><stop offset="0.742" stop-color="#a14a18"/><stop offset="0.815" stop-color="#a1370b"/><stop offset="0.901" stop-color="#a12700"/><stop offset="1" stop-color="#a11a00"/></linearGradient><linearGradient id="L82" gradientUnits="userSpaceOnUse" x1="746" x2="1063" y1="0" y2="0"><stop offset="0" stop-color="#009972"/><stop offset="0.388" stop-color="#00995f"/><stop offset="0.502" stop-color="#599955"/><stop offset="0.58" stop-color="#a0994d"/><stop offset="0.615" stop-color="#a17e3c"/><stop offset="0.65" stop-color="#a16a2f"/><stop offset="0.735" stop-color="#a14819"/><stop offset="0.811" stop-color="#a1340c"/><stop offset="0.905" stop-color="#a12400"/><stop offset="1" stop-color="#a11800"/></linearGradient><linearGradient id="L83" gradientUnits="userSpaceOnUse" x1="746" x2="1066" y1="0" y2="0"><stop offset="0" stop-color="#009974"/><stop offset="0.384" stop-color="#019962"/><stop offset="0.497" stop-color="#5d9959"/><stop offset="0.569" stop-color="#9f9952"/><stop offset="0.637" stop-color="#a16a33"/><stop offset="0.725" stop-color="#a1461b"/><stop offset="0.806" stop-color="#a1320d"/><stop offset="0.906" stop-color="#a12100"/><stop offset="1" stop-color="#a11500"/></linearGradient><linearGradient id="L84" gradientUnits="userSpaceOnUse" x1="747" x2="1069" y1="0" y2="0"><stop offset="0" stop-color="#009977"/><stop offset="0.376" stop-color="#009966"/><stop offset="0.488" stop-color="#5e995d"/><stop offset="0.559" stop-color="#a19956"/><stop offset="0.59" stop-color="#a17f45"/><stop offset="0.627" stop-color="#a16835"/><stop offset="0.717" stop-color="#a1441c"/><stop offset="0.804" stop-color="#a12f0d"/><stop offset="0.91" stop-color="#a11e00"/><stop offset="1" stop-color="#a11300"/></linearGradient><linearGradient id="L85" gradientUnits="userSpaceOnUse" x1="747" x2="1072" y1="0" y2="0"><stop offset="0" stop-color="#00997a"/><stop offset="0.369" stop-color="#00996a"/><stop offset="0.477" stop-color="#5c9962"/><stop offset="0.548" stop-color="#a0995c"/><stop offset="0.582" stop-color="#a17d48"/><stop offset="0.615" stop-color="#a16839"/><stop offset="0.708" stop-color="#a1431e"/><stop offset="0.8" stop-color="#a12c0e"/><stop offset="0.914" stop-color="#a11b00"/><stop offset="1" stop-color="#a11100"/></linearGradient><linearGradient id="L86" gradientUnits="userSpaceOnUse" x1="748" x2="1074" y1="0" y2="0"><stop offset="0" stop-color="#00997c"/><stop offset="0.362" stop-color="#00996e"/><stop offset="0.466" stop-color="#5a9967"/><stop offset="0.537" stop-color="#9f9961"/><stop offset="0.574" stop-color="#a17b4b"/><stop offset="0.607" stop-color="#a1663b"/><stop offset="0.699" stop-color="#a14120"/><stop offset="0.794" stop-color="#a12b0f"/><stop offset="0.917" stop-color="#a11800"/><stop offset="1" stop-color="#a10f00"/></linearGradient><linearGradient id="L87" gradientUnits="userSpaceOnUse" x1="748" x2="1077" y1="0" y2="0"><stop offset="0" stop-color="#00997f"/><stop offset="0.356" stop-color="#009972"/><stop offset="0.456" stop-color="#58996c"/><stop offset="0.529" stop-color="#a19865"/><stop offset="0.559" stop-color="#a17d51"/><stop offset="0.596" stop-color="#a1663f"/><stop offset="0.69" stop-color="#a14022"/><stop offset="0.79" stop-color="#a12810"/><stop offset="0.921" stop-color="#a11500"/><stop offset="1" stop-color="#a10d00"/></linearGradient><linearGradient id="L88" gradientUnits="userSpaceOnUse" x1="749" x2="1080" y1="0" y2="0"><stop offset="0" stop-color="#009982"/><stop offset="0.35" stop-color="#019976"/><stop offset="0.453" stop-color="#5f9970"/><stop offset="0.517" stop-color="#a1996b"/><stop offset="0.55" stop-color="#a17b54"/><stop offset="0.586" stop-color="#a16442"/><stop offset="0.631" stop-color="#a14f31"/><stop offset="0.683" stop-color="#a13d23"/><stop offset="0.785" stop-color="#a12611"/><stop offset="0.921" stop-color="#a11300"/><stop offset="1" stop-color="#a10b00"/></linearGradient><linearGradient id="L89" gradientUnits="userSpaceOnUse" x1="749" x2="1083" y1="0" y2="0"><stop offset="0" stop-color="#009985"/><stop offset="0.344" stop-color="#00997a"/><stop offset="0.437" stop-color="#579975"/><stop offset="0.509" stop-color="#a1976f"/><stop offset="0.542" stop-color="#a17957"/><stop offset="0.578" stop-color="#a16245"/><stop offset="0.623" stop-color="#a14d33"/><stop offset="0.674" stop-color="#a13c25"/><stop offset="0.757" stop-color="#a12815"/><stop offset="0.859" stop-color="#a11807"/><stop offset="0.925" stop-color="#a11000"/><stop offset="1" stop-color="#a10900"/></linearGradient><linearGradient id="L90" gradientUnits="userSpaceOnUse" x1="750" x2="1086" y1="0" y2="0"><stop offset="0" stop-color="#009988"/><stop offset="0.336" stop-color="#00997f"/><stop offset="0.429" stop-color="#58997a"/><stop offset="0.497" stop-color="#a19875"/><stop offset="0.53" stop-color="#a17a5c"/><stop offset="0.565" stop-color="#a16249"/><stop offset="0.61" stop-color="#a14d37"/><stop offset="0.664" stop-color="#a13a27"/><stop offset="0.744" stop-color="#a12717"/><stop offset="0.845" stop-color="#a11709"/><stop offset="0.929" stop-color="#a10e00"/><stop offset="1" stop-color="#a10700"/></linearGradient><linearGradient id="L91" gradientUnits="userSpaceOnUse" x1="751" x2="1088" y1="0" y2="0"><stop offset="0" stop-color="#00998b"/><stop offset="0.329" stop-color="#009983"/><stop offset="0.421" stop-color="#599980"/><stop offset="0.487" stop-color="#a1997c"/><stop offset="0.516" stop-color="#a17c63"/><stop offset="0.555" stop-color="#a1624d"/><stop offset="0.599" stop-color="#a14c3a"/><stop offset="0.656" stop-color="#a13929"/><stop offset="0.736" stop-color="#a12619"/><stop offset="0.834" stop-color="#a1170b"/><stop offset="0.932" stop-color="#a10c00"/><stop offset="1" stop-color="#a10500"/></linearGradient><linearGradient id="L92" gradientUnits="userSpaceOnUse" x1="751" x2="1091" y1="0" y2="0"><stop offset="0" stop-color="#00998f"/><stop offset="0.324" stop-color="#009988"/><stop offset="0.406" stop-color="#519985"/><stop offset="0.479" stop-color="#a19680"/><stop offset="0.512" stop-color="#a17865"/><stop offset="0.55" stop-color="#a15e4e"/><stop offset="0.594" stop-color="#a1493b"/><stop offset="0.65" stop-color="#a1372a"/><stop offset="0.729" stop-color="#a1241a"/><stop offset="0.826" stop-color="#a1150c"/><stop offset="0.935" stop-color="#a10900"/><stop offset="1" stop-color="#a10300"/></linearGradient><linearGradient id="L93" gradientUnits="userSpaceOnUse" x1="752" x2="1094" y1="0" y2="0"><stop offset="0" stop-color="#009992"/><stop offset="0.319" stop-color="#01998d"/><stop offset="0.404" stop-color="#58998b"/><stop offset="0.468" stop-color="#a19787"/><stop offset="0.5" stop-color="#a1786a"/><stop offset="0.538" stop-color="#a15e52"/><stop offset="0.585" stop-color="#a1483d"/><stop offset="0.64" stop-color="#a1352c"/><stop offset="0.719" stop-color="#a1231b"/><stop offset="0.816" stop-color="#a1140d"/><stop offset="0.936" stop-color="#a10700"/><stop offset="1" stop-color="#a10100"/></linearGradient><linearGradient id="L94" gradientUnits="userSpaceOnUse" x1="752" x2="1097" y1="0" y2="0"><stop offset="0" stop-color="#009996"/><stop offset="0.313" stop-color="#009992"/><stop offset="0.4" stop-color="#5c9991"/><stop offset="0.458" stop-color="#a1988e"/><stop offset="0.49" stop-color="#a17870"/><stop offset="0.528" stop-color="#a15e56"/><stop offset="0.574" stop-color="#a14741"/><stop offset="0.632" stop-color="#a1342e"/><stop offset="0.71" stop-color="#a1221d"/><stop offset="0.809" stop-color="#a1130e"/><stop offset="0.939" stop-color="#a10500"/><stop offset="1" stop-color="#a10000"/></linearGradient><linearGradient id="L95" gradientUnits="userSpaceOnUse" x1="753" x2="1100" y1="0" y2="0"><stop offset="0" stop-color="#009999"/><stop offset="0.305" stop-color="#009997"/><stop offset="0.389" stop-color="#5a9997"/><stop offset="0.447" stop-color="#a19996"/><stop offset="0.478" stop-color="#a17875"/><stop offset="0.519" stop-color="#a15c59"/><stop offset="0.568" stop-color="#a14442"/><stop offset="0.625" stop-color="#a1312f"/><stop offset="0.703" stop-color="#a1201e"/><stop offset="0.801" stop-color="#a1110f"/><stop offset="0.939" stop-color="#a10300"/><stop offset="1" stop-color="#a10000"/></linearGradient><linearGradient id="L96" gradientUnits="userSpaceOnUse" x1="753" x2="1103" y1="0" y2="0"><stop offset="0" stop-color="#00999d"/><stop offset="0.3" stop-color="#00999d"/><stop offset="0.374" stop-color="#51999d"/><stop offset="0.44" stop-color="#a1969a"/><stop offset="0.471" stop-color="#a17679"/><stop offset="0.511" stop-color="#a15a5c"/><stop offset="0.56" stop-color="#a14344"/><stop offset="0.62" stop-color="#a12f30"/><stop offset="0.697" stop-color="#a11e1f"/><stop offset="0.794" stop-color="#a11010"/><stop offset="0.943" stop-color="#a10000"/><stop offset="1" stop-color="#a10000"/></linearGradient><linearGradient id="L97" gradientUnits="userSpaceOnUse" x1="754" x2="1105" y1="0" y2="0"><stop offset="0" stop-color="#00979e"/><stop offset="0.293" stop-color="#00959e"/><stop offset="0.373" stop-color="#56949e"/><stop offset="0.433" stop-color="#a0939e"/><stop offset="0.464" stop-color="#a1737c"/><stop offset="0.504" stop-color="#a1585f"/><stop offset="0.553" stop-color="#a14147"/><stop offset="0.613" stop-color="#a12e32"/><stop offset="0.698" stop-color="#a11b1f"/><stop offset="0.803" stop-color="#a10c0f"/><stop offset="0.923" stop-color="#a10003"/><stop offset="1" stop-color="#a10000"/></linearGradient><linearGradient id="L98" gradientUnits="userSpaceOnUse" x1="754" x2="1108" y1="0" y2="0"><stop offset="0" stop-color="#00939e"/><stop offset="0.291" stop-color="#00909e"/><stop offset="0.432" stop-color="#a18a9b"/><stop offset="0.466" stop-color="#a16a78"/><stop offset="0.506" stop-color="#a1515c"/><stop offset="0.554" stop-color="#a13c45"/><stop offset="0.613" stop-color="#a12a32"/><stop offset="0.706" stop-color="#a1171d"/><stop offset="0.825" stop-color="#a1080d"/><stop offset="0.901" stop-color="#a10005"/><stop offset="1" stop-color="#a10000"/></linearGradient><linearGradient id="L99" gradientUnits="userSpaceOnUse" x1="755" x2="1111" y1="0" y2="0"><stop offset="0" stop-color="#008f9e"/><stop offset="0.284" stop-color="#008b9e"/><stop offset="0.365" stop-color="#58899e"/><stop offset="0.427" stop-color="#a1849c"/><stop offset="0.461" stop-color="#a16679"/><stop offset="0.5" stop-color="#a14d5d"/><stop offset="0.551" stop-color="#a13845"/><stop offset="0.61" stop-color="#a12732"/><stop offset="0.722" stop-color="#a1121b"/><stop offset="0.876" stop-color="#a10007"/><stop offset="1" stop-color="#a10000"/></linearGradient><linearGradient id="L100" gradientUnits="userSpaceOnUse" x1="756" x2="1114" y1="0" y2="0"><stop offset="0" stop-color="#008c9e"/><stop offset="0.277" stop-color="#00869e"/><stop offset="0.358" stop-color="#56839e"/><stop offset="0.422" stop-color="#a17f9c"/><stop offset="0.455" stop-color="#a1617a"/><stop offset="0.497" stop-color="#a1495d"/><stop offset="0.547" stop-color="#a13545"/><stop offset="0.606" stop-color="#a12432"/><stop offset="0.712" stop-color="#a1111c"/><stop offset="0.855" stop-color="#a1000a"/><stop offset="1" stop-color="#a10000"/></linearGradient><linearGradient id="L101" gradientUnits="userSpaceOnUse" x1="756" x2="1117" y1="0" y2="0"><stop offset="0" stop-color="#00889e"/><stop offset="0.271" stop-color="#00819e"/><stop offset="0.355" stop-color="#577e9e"/><stop offset="0.418" stop-color="#a1799d"/><stop offset="0.452" stop-color="#a15d7b"/><stop offset="0.493" stop-color="#a1455e"/><stop offset="0.543" stop-color="#a13246"/><stop offset="0.604" stop-color="#a12232"/><stop offset="0.704" stop-color="#a1101d"/><stop offset="0.834" stop-color="#a1000c"/><stop offset="0.956" stop-color="#a10000"/><stop offset="1" stop-color="#a10000"/></linearGradient><linearGradient id="L102" gradientUnits="userSpaceOnUse" x1="757" x2="1119" y1="0" y2="0"><stop offset="0" stop-color="#00859e"/><stop offset="0.268" stop-color="#017d9e"/><stop offset="0.356" stop-color="#5d789e"/><stop offset="0.414" stop-color="#a1749d"/><stop offset="0.448" stop-color="#a1597b"/><stop offset="0.489" stop-color="#a1425f"/><stop offset="0.539" stop-color="#a12f47"/><stop offset="0.599" stop-color="#a11f33"/><stop offset="0.693" stop-color="#a10f1f"/><stop offset="0.815" stop-color="#a1000e"/><stop offset="0.959" stop-color="#a10000"/><stop offset="1" stop-color="#a10000"/></linearGradient><linearGradient id="L103" gradientUnits="userSpaceOnUse" x1="757" x2="1122" y1="0" y2="0"><stop offset="0" stop-color="#00829e"/><stop offset="0.263" stop-color="#00789e"/><stop offset="0.353" stop-color="#5e739e"/><stop offset="0.411" stop-color="#a16f9e"/><stop offset="0.444" stop-color="#a1557c"/><stop offset="0.485" stop-color="#a13f60"/><stop offset="0.534" stop-color="#a12d48"/><stop offset="0.597" stop-color="#a11d34"/><stop offset="0.685" stop-color="#a10e21"/><stop offset="0.795" stop-color="#a10011"/><stop offset="0.962" stop-color="#a10000"/><stop offset="1" stop-color="#a10000"/></linearGradient><linearGradient id="L104" gradientUnits="userSpaceOnUse" x1="758" x2="1125" y1="0" y2="0"><stop offset="0" stop-color="#007e9e"/><stop offset="0.256" stop-color="#00749e"/><stop offset="0.346" stop-color="#5c6e9e"/><stop offset="0.406" stop-color="#a16a9e"/><stop offset="0.441" stop-color="#a14f7b"/><stop offset="0.482" stop-color="#a13b5f"/><stop offset="0.534" stop-color="#a12947"/><stop offset="0.594" stop-color="#a11a34"/><stop offset="0.676" stop-color="#a10c22"/><stop offset="0.774" stop-color="#a10013"/><stop offset="0.962" stop-color="#a10000"/><stop offset="1" stop-color="#a10000"/></linearGradient><linearGradient id="L105" gradientUnits="userSpaceOnUse" x1="759" x2="1128" y1="0" y2="0"><stop offset="0" stop-color="#007b9e"/><stop offset="0.249" stop-color="#00709e"/><stop offset="0.333" stop-color="#546a9e"/><stop offset="0.404" stop-color="#a1629b"/><stop offset="0.439" stop-color="#a14a79"/><stop offset="0.48" stop-color="#a1375e"/><stop offset="0.531" stop-color="#a12647"/><stop offset="0.593" stop-color="#a11733"/><stop offset="0.753" stop-color="#a10016"/><stop offset="0.965" stop-color="#a10000"/><stop offset="1" stop-color="#a10000"/></linearGradient><linearGradient id="L106" gradientUnits="userSpaceOnUse" x1="759" x2="1131" y1="0" y2="0"><stop offset="0" stop-color="#00789e"/><stop offset="0.245" stop-color="#006c9e"/><stop offset="0.328" stop-color="#52669e"/><stop offset="0.401" stop-color="#a15d9c"/><stop offset="0.435" stop-color="#a1467a"/><stop offset="0.478" stop-color="#a1335e"/><stop offset="0.53" stop-color="#a12247"/><stop offset="0.591" stop-color="#a11534"/><stop offset="0.734" stop-color="#a10018"/><stop offset="0.887" stop-color="#a10007"/><stop offset="1" stop-color="#a10000"/></linearGradient><linearGradient id="L107" gradientUnits="userSpaceOnUse" x1="760" x2="1133" y1="0" y2="0"><stop offset="0" stop-color="#00759e"/><stop offset="0.241" stop-color="#01689e"/><stop offset="0.33" stop-color="#58619e"/><stop offset="0.397" stop-color="#a1599c"/><stop offset="0.432" stop-color="#a1437b"/><stop offset="0.475" stop-color="#a1305f"/><stop offset="0.525" stop-color="#a12048"/><stop offset="0.59" stop-color="#a11234"/><stop offset="0.716" stop-color="#a1001b"/><stop offset="0.863" stop-color="#a1000a"/><stop offset="1" stop-color="#a10000"/></linearGradient><linearGradient id="L108" gradientUnits="userSpaceOnUse" x1="761" x2="1136" y1="0" y2="0"><stop offset="0" stop-color="#00719e"/><stop offset="0.235" stop-color="#00649e"/><stop offset="0.328" stop-color="#5c5c9e"/><stop offset="0.392" stop-color="#a1549d"/><stop offset="0.427" stop-color="#a13f7c"/><stop offset="0.469" stop-color="#a12d60"/><stop offset="0.523" stop-color="#a11d48"/><stop offset="0.587" stop-color="#a11034"/><stop offset="0.693" stop-color="#a1001e"/><stop offset="0.843" stop-color="#a1000c"/><stop offset="1" stop-color="#a10000"/></linearGradient><linearGradient id="L109" gradientUnits="userSpaceOnUse" x1="761" x2="1135" y1="0" y2="0"><stop offset="0" stop-color="#006e9e"/><stop offset="0.233" stop-color="#00609e"/><stop offset="0.326" stop-color="#5a589e"/><stop offset="0.393" stop-color="#a1509d"/><stop offset="0.428" stop-color="#a13b7c"/><stop offset="0.471" stop-color="#a12a61"/><stop offset="0.521" stop-color="#a11b4a"/><stop offset="0.586" stop-color="#a10e36"/><stop offset="0.682" stop-color="#a10021"/><stop offset="0.824" stop-color="#a1000f"/><stop offset="1" stop-color="#a10000"/></linearGradient><linearGradient id="L110" gradientUnits="userSpaceOnUse" x1="762" x2="1129" y1="0" y2="0"><stop offset="0" stop-color="#006b9e"/><stop offset="0.232" stop-color="#005d9e"/><stop offset="0.33" stop-color="#5a549e"/><stop offset="0.398" stop-color="#a14b9e"/><stop offset="0.433" stop-color="#a1387d"/><stop offset="0.477" stop-color="#a12761"/><stop offset="0.529" stop-color="#a1194b"/><stop offset="0.591" stop-color="#a10d37"/><stop offset="0.678" stop-color="#a10025"/><stop offset="0.812" stop-color="#a10012"/><stop offset="1" stop-color="#a10001"/></linearGradient><linearGradient id="L111" gradientUnits="userSpaceOnUse" x1="763" x2="1123" y1="0" y2="0"><stop offset="0" stop-color="#00689e"/><stop offset="0.233" stop-color="#01599e"/><stop offset="0.336" stop-color="#5d4f9e"/><stop offset="0.403" stop-color="#a1479e"/><stop offset="0.439" stop-color="#a1347e"/><stop offset="0.483" stop-color="#a12462"/><stop offset="0.536" stop-color="#a1174b"/><stop offset="0.597" stop-color="#a10b39"/><stop offset="0.675" stop-color="#a10028"/><stop offset="0.814" stop-color="#a10014"/><stop offset="1" stop-color="#a10003"/></linearGradient><linearGradient id="L112" gradientUnits="userSpaceOnUse" x1="763" x2="1117" y1="0" y2="0"><stop offset="0" stop-color="#00659e"/><stop offset="0.234" stop-color="#00569e"/><stop offset="0.342" stop-color="#5e4b9e"/><stop offset="0.41" stop-color="#a0439e"/><stop offset="0.446" stop-color="#a1317e"/><stop offset="0.489" stop-color="#a12264"/><stop offset="0.542" stop-color="#a1154d"/><stop offset="0.605" stop-color="#a10a3a"/><stop offset="0.672" stop-color="#a1002b"/><stop offset="0.766" stop-color="#a1001c"/><stop offset="1" stop-color="#a10005"/></linearGradient><linearGradient id="L113" gradientUnits="userSpaceOnUse" x1="764" x2="1111" y1="0" y2="0"><stop offset="0" stop-color="#00629e"/><stop offset="0.233" stop-color="#00539e"/><stop offset="0.337" stop-color="#57489e"/><stop offset="0.418" stop-color="#a13d9c"/><stop offset="0.455" stop-color="#a12d7d"/><stop offset="0.499" stop-color="#a11f64"/><stop offset="0.55" stop-color="#a1134e"/><stop offset="0.611" stop-color="#a1083c"/><stop offset="0.669" stop-color="#a1002f"/><stop offset="0.772" stop-color="#a1001e"/><stop offset="1" stop-color="#a10007"/></linearGradient><linearGradient id="L114" gradientUnits="userSpaceOnUse" x1="765" x2="1105" y1="0" y2="0"><stop offset="0" stop-color="#005f9e"/><stop offset="0.232" stop-color="#004f9e"/><stop offset="0.341" stop-color="#58459e"/><stop offset="0.424" stop-color="#a1399c"/><stop offset="0.459" stop-color="#a12a80"/><stop offset="0.503" stop-color="#a11d66"/><stop offset="0.556" stop-color="#a11150"/><stop offset="0.618" stop-color="#a1073d"/><stop offset="0.665" stop-color="#a10033"/><stop offset="0.776" stop-color="#a10020"/><stop offset="1" stop-color="#a10009"/></linearGradient><linearGradient id="L115" gradientUnits="userSpaceOnUse" x1="765" x2="1099" y1="0" y2="0"><stop offset="0" stop-color="#005d9e"/><stop offset="0.234" stop-color="#004c9e"/><stop offset="0.344" stop-color="#56419e"/><stop offset="0.431" stop-color="#a1359d"/><stop offset="0.467" stop-color="#a12780"/><stop offset="0.512" stop-color="#a11a67"/><stop offset="0.563" stop-color="#a10f52"/><stop offset="0.626" stop-color="#a1053f"/><stop offset="0.659" stop-color="#a10037"/><stop offset="0.781" stop-color="#a10022"/><stop offset="1" stop-color="#a1000b"/></linearGradient><linearGradient id="L116" gradientUnits="userSpaceOnUse" x1="766" x2="1094" y1="0" y2="0"><stop offset="0" stop-color="#005a9e"/><stop offset="0.235" stop-color="#01499e"/><stop offset="0.354" stop-color="#5b3d9e"/><stop offset="0.436" stop-color="#a1329d"/><stop offset="0.473" stop-color="#a12481"/><stop offset="0.518" stop-color="#a11768"/><stop offset="0.57" stop-color="#a10d53"/><stop offset="0.631" stop-color="#a10341"/><stop offset="0.787" stop-color="#a10023"/><stop offset="1" stop-color="#a1000d"/></linearGradient><linearGradient id="L117" gradientUnits="userSpaceOnUse" x1="767" x2="1088" y1="0" y2="0"><stop offset="0" stop-color="#00579e"/><stop offset="0.234" stop-color="#00469e"/><stop offset="0.358" stop-color="#5c399e"/><stop offset="0.442" stop-color="#a12e9d"/><stop offset="0.48" stop-color="#a12182"/><stop offset="0.523" stop-color="#a1166a"/><stop offset="0.636" stop-color="#a10243"/><stop offset="0.788" stop-color="#a10026"/><stop offset="1" stop-color="#a1000f"/></linearGradient><linearGradient id="L118" gradientUnits="userSpaceOnUse" x1="768" x2="1082" y1="0" y2="0"><stop offset="0" stop-color="#00549e"/><stop offset="0.232" stop-color="#00439e"/><stop offset="0.363" stop-color="#5d369e"/><stop offset="0.449" stop-color="#a12a9e"/><stop offset="0.487" stop-color="#a11e82"/><stop offset="0.532" stop-color="#a1136a"/><stop offset="0.643" stop-color="#a10045"/><stop offset="0.793" stop-color="#a10028"/><stop offset="1" stop-color="#a10011"/></linearGradient><linearGradient id="L119" gradientUnits="userSpaceOnUse" x1="768" x2="1076" y1="0" y2="0"><stop offset="0" stop-color="#00519e"/><stop offset="0.234" stop-color="#00409e"/><stop offset="0.37" stop-color="#5d329e"/><stop offset="0.458" stop-color="#a1269e"/><stop offset="0.497" stop-color="#a11b83"/><stop offset="0.539" stop-color="#a1116d"/><stop offset="0.649" stop-color="#a10047"/><stop offset="0.799" stop-color="#a1002a"/><stop offset="1" stop-color="#a10014"/></linearGradient><linearGradient id="L120" gradientUnits="userSpaceOnUse" x1="769" x2="1070" y1="0" y2="0"><stop offset="0" stop-color="#004f9e"/><stop offset="0.233" stop-color="#003e9e"/><stop offset="0.372" stop-color="#5b2f9e"/><stop offset="0.465" stop-color="#a0239e"/><stop offset="0.505" stop-color="#a11783"/><stop offset="0.548" stop-color="#a10e6d"/><stop offset="0.631" stop-color="#a10050"/><stop offset="0.658" stop-color="#a10049"/><stop offset="0.804" stop-color="#a1002c"/><stop offset="1" stop-color="#a10016"/></linearGradient><linearGradient id="L121" gradientUnits="userSpaceOnUse" x1="770" x2="1064" y1="0" y2="0"><stop offset="0" stop-color="#004c9e"/><stop offset="0.235" stop-color="#013b9e"/><stop offset="0.374" stop-color="#5a2c9e"/><stop offset="0.476" stop-color="#a11e9c"/><stop offset="0.514" stop-color="#a11484"/><stop offset="0.558" stop-color="#a10b6e"/><stop offset="0.626" stop-color="#a10055"/><stop offset="0.667" stop-color="#a1004a"/><stop offset="0.81" stop-color="#a1002f"/><stop offset="1" stop-color="#a10019"/></linearGradient><linearGradient id="L122" gradientUnits="userSpaceOnUse" x1="771" x2="1058" y1="0" y2="0"><stop offset="0" stop-color="#00499e"/><stop offset="0.233" stop-color="#00389e"/><stop offset="0.38" stop-color="#5a299e"/><stop offset="0.484" stop-color="#a11b9d"/><stop offset="0.564" stop-color="#a10970"/><stop offset="0.62" stop-color="#a1005b"/><stop offset="0.672" stop-color="#a1004d"/><stop offset="0.815" stop-color="#a10031"/><stop offset="1" stop-color="#a1001b"/></linearGradient><linearGradient id="L123" gradientUnits="userSpaceOnUse" x1="772" x2="1052" y1="0" y2="0"><stop offset="0" stop-color="#00469e"/><stop offset="0.232" stop-color="#00359e"/><stop offset="0.386" stop-color="#5b269e"/><stop offset="0.493" stop-color="#a1179d"/><stop offset="0.575" stop-color="#a10671"/><stop offset="0.614" stop-color="#a10062"/><stop offset="0.682" stop-color="#a1004e"/><stop offset="0.821" stop-color="#a10033"/><stop offset="1" stop-color="#a1001e"/></linearGradient><linearGradient id="L124" gradientUnits="userSpaceOnUse" x1="773" x2="1047" y1="0" y2="0"><stop offset="0" stop-color="#00449e"/><stop offset="0.23" stop-color="#00339e"/><stop offset="0.387" stop-color="#59239e"/><stop offset="0.5" stop-color="#a1149d"/><stop offset="0.58" stop-color="#a10473"/><stop offset="0.606" stop-color="#a10069"/><stop offset="0.686" stop-color="#a10051"/><stop offset="0.825" stop-color="#a10035"/><stop offset="1" stop-color="#a10020"/></linearGradient><linearGradient id="L125" gradientUnits="userSpaceOnUse" x1="774" x2="1041" y1="0" y2="0"><stop offset="0" stop-color="#00419e"/><stop offset="0.232" stop-color="#01309e"/><stop offset="0.401" stop-color="#5e1f9e"/><stop offset="0.509" stop-color="#a1109e"/><stop offset="0.592" stop-color="#a10174"/><stop offset="0.697" stop-color="#a10052"/><stop offset="0.831" stop-color="#a10038"/><stop offset="1" stop-color="#a10023"/></linearGradient><linearGradient id="L126" gradientUnits="userSpaceOnUse" x1="774" x2="1035" y1="0" y2="0"><stop offset="0" stop-color="#003f9e"/><stop offset="0.234" stop-color="#002e9e"/><stop offset="0.41" stop-color="#5e1c9e"/><stop offset="0.521" stop-color="#a10d9e"/><stop offset="0.602" stop-color="#a10076"/><stop offset="0.705" stop-color="#a10055"/><stop offset="0.835" stop-color="#a1003b"/><stop offset="1" stop-color="#a10026"/></linearGradient><linearGradient id="L127" gradientUnits="userSpaceOnUse" x1="775" x2="1029" y1="0" y2="0"><stop offset="0" stop-color="#003c9e"/><stop offset="0.232" stop-color="#002b9e"/><stop offset="0.417" stop-color="#5f199e"/><stop offset="0.531" stop-color="#a0099e"/><stop offset="0.583" stop-color="#a10083"/><stop offset="0.614" stop-color="#a10076"/><stop offset="0.713" stop-color="#a10058"/><stop offset="0.839" stop-color="#a1003e"/><stop offset="1" stop-color="#a10029"/></linearGradient><linearGradient id="L128" gradientUnits="userSpaceOnUse" x1="776" x2="1023" y1="0" y2="0"><stop offset="0" stop-color="#00399e"/><stop offset="0.231" stop-color="#00299e"/><stop offset="0.421" stop-color="#5d169e"/><stop offset="0.543" stop-color="#a0069e"/><stop offset="0.575" stop-color="#a1008d"/><stop offset="0.623" stop-color="#a10078"/><stop offset="0.725" stop-color="#a10059"/><stop offset="0.846" stop-color="#a10041"/><stop offset="1" stop-color="#a1002c"/></linearGradient><linearGradient id="L129" gradientUnits="userSpaceOnUse" x1="777" x2="1017" y1="0" y2="0"><stop offset="0" stop-color="#00379e"/><stop offset="0.229" stop-color="#00279e"/><stop offset="0.417" stop-color="#58159e"/><stop offset="0.558" stop-color="#a1029d"/><stop offset="0.637" stop-color="#a10079"/><stop offset="0.733" stop-color="#a1005c"/><stop offset="0.854" stop-color="#a10044"/><stop offset="1" stop-color="#a10030"/></linearGradient><linearGradient id="L130" gradientUnits="userSpaceOnUse" x1="778" x2="1011" y1="0" y2="0"><stop offset="0" stop-color="#00349e"/><stop offset="0.232" stop-color="#01249e"/><stop offset="0.429" stop-color="#5a119e"/><stop offset="0.571" stop-color="#a1009d"/><stop offset="0.648" stop-color="#a1007b"/><stop offset="0.742" stop-color="#a1005f"/><stop offset="0.858" stop-color="#a10047"/><stop offset="1" stop-color="#a10033"/></linearGradient><linearGradient id="L131" gradientUnits="userSpaceOnUse" x1="779" x2="1005" y1="0" y2="0"><stop offset="0" stop-color="#00329e"/><stop offset="0.23" stop-color="#00229e"/><stop offset="0.442" stop-color="#5d0e9e"/><stop offset="0.549" stop-color="#8f009e"/><stop offset="0.584" stop-color="#a1009d"/><stop offset="0.659" stop-color="#a1007d"/><stop offset="0.752" stop-color="#a10062"/><stop offset="0.863" stop-color="#a1004b"/><stop offset="1" stop-color="#a10037"/></linearGradient><linearGradient id="L132" gradientUnits="userSpaceOnUse" x1="780" x2="999" y1="0" y2="0"><stop offset="0" stop-color="#002f9e"/><stop offset="0.228" stop-color="#00209e"/><stop offset="0.539" stop-color="#84009e"/><stop offset="0.598" stop-color="#a1009e"/><stop offset="0.671" stop-color="#a1007f"/><stop offset="0.763" stop-color="#a10064"/><stop offset="0.872" stop-color="#a1004e"/><stop offset="1" stop-color="#a1003b"/></linearGradient><linearGradient id="L133" gradientUnits="userSpaceOnUse" x1="781" x2="993" y1="0" y2="0"><stop offset="0" stop-color="#002d9e"/><stop offset="0.226" stop-color="#001e9e"/><stop offset="0.524" stop-color="#78009e"/><stop offset="0.613" stop-color="#a1009e"/><stop offset="0.689" stop-color="#a10080"/><stop offset="0.774" stop-color="#a10067"/><stop offset="0.877" stop-color="#a10052"/><stop offset="1" stop-color="#a1003f"/></linearGradient><linearGradient id="L134" gradientUnits="userSpaceOnUse" x1="782" x2="988" y1="0" y2="0"><stop offset="0" stop-color="#002a9e"/><stop offset="0.228" stop-color="#011b9e"/><stop offset="0.51" stop-color="#6e009e"/><stop offset="0.626" stop-color="#a1009e"/><stop offset="0.699" stop-color="#a10082"/><stop offset="0.782" stop-color="#a1006a"/><stop offset="0.883" stop-color="#a10055"/><stop offset="1" stop-color="#a10043"/></linearGradient><linearGradient id="L135" gradientUnits="userSpaceOnUse" x1="783" x2="982" y1="0" y2="0"><stop offset="0" stop-color="#00289e"/><stop offset="0.226" stop-color="#01199e"/><stop offset="0.497" stop-color="#64009e"/><stop offset="0.643" stop-color="#a0009e"/><stop offset="0.714" stop-color="#a10084"/><stop offset="0.794" stop-color="#a1006d"/><stop offset="1" stop-color="#a10047"/></linearGradient><linearGradient id="L136" gradientUnits="userSpaceOnUse" x1="784" x2="976" y1="0" y2="0"><stop offset="0" stop-color="#00259e"/><stop offset="0.224" stop-color="#00179e"/><stop offset="0.484" stop-color="#5b009e"/><stop offset="0.661" stop-color="#a0009e"/><stop offset="0.807" stop-color="#a10070"/><stop offset="1" stop-color="#a1004c"/></linearGradient><linearGradient id="L137" gradientUnits="userSpaceOnUse" x1="785" x2="970" y1="0" y2="0"><stop offset="0" stop-color="#00239e"/><stop offset="0.222" stop-color="#00159e"/><stop offset="0.47" stop-color="#52009e"/><stop offset="0.681" stop-color="#a0009e"/><stop offset="0.822" stop-color="#a10073"/><stop offset="1" stop-color="#a10052"/></linearGradient><linearGradient id="L138" gradientUnits="userSpaceOnUse" x1="787" x2="964" y1="0" y2="0"><stop offset="0" stop-color="#00209e"/><stop offset="0.215" stop-color="#00139e"/><stop offset="0.452" stop-color="#4a009e"/><stop offset="0.701" stop-color="#9f009e"/><stop offset="0.836" stop-color="#a10077"/><stop offset="1" stop-color="#a10057"/></linearGradient><linearGradient id="L139" gradientUnits="userSpaceOnUse" x1="788" x2="958" y1="0" y2="0"><stop offset="0" stop-color="#001e9e"/><stop offset="0.218" stop-color="#01119e"/><stop offset="0.435" stop-color="#41009e"/><stop offset="0.724" stop-color="#9f009e"/><stop offset="0.853" stop-color="#a1007a"/><stop offset="1" stop-color="#a1005d"/></linearGradient><linearGradient id="L140" gradientUnits="userSpaceOnUse" x1="789" x2="952" y1="0" y2="0"><stop offset="0" stop-color="#001b9e"/><stop offset="0.215" stop-color="#000f9e"/><stop offset="0.411" stop-color="#38009e"/><stop offset="0.748" stop-color="#9f009e"/><stop offset="0.871" stop-color="#a1007d"/><stop offset="1" stop-color="#a10064"/></linearGradient><linearGradient id="L141" gradientUnits="userSpaceOnUse" x1="790" x2="946" y1="0" y2="0"><stop offset="0" stop-color="#00199e"/><stop offset="0.212" stop-color="#000d9e"/><stop offset="0.391" stop-color="#30009e"/><stop offset="0.603" stop-color="#6a009e"/><stop offset="0.782" stop-color="#a1009e"/><stop offset="0.885" stop-color="#a10082"/><stop offset="1" stop-color="#a1006b"/></linearGradient><linearGradient id="L142" gradientUnits="userSpaceOnUse" x1="791" x2="940" y1="0" y2="0"><stop offset="0" stop-color="#00169e"/><stop offset="0.208" stop-color="#000b9e"/><stop offset="0.369" stop-color="#29009e"/><stop offset="0.611" stop-color="#67009e"/><stop offset="0.812" stop-color="#a0009e"/><stop offset="1" stop-color="#a10072"/></linearGradient><linearGradient id="L143" gradientUnits="userSpaceOnUse" x1="792" x2="934" y1="0" y2="0"><stop offset="0" stop-color="#00149e"/><stop offset="0.204" stop-color="#00099e"/><stop offset="0.345" stop-color="#21009e"/><stop offset="0.62" stop-color="#63009e"/><stop offset="0.845" stop-color="#a0009e"/><stop offset="1" stop-color="#a1007a"/></linearGradient><linearGradient id="L144" gradientUnits="userSpaceOnUse" x1="793" x2="928" y1="0" y2="0"><stop offset="0" stop-color="#00129e"/><stop offset="0.207" stop-color="#01079e"/><stop offset="0.319" stop-color="#1a009e"/><stop offset="0.63" stop-color="#60009e"/><stop offset="0.881" stop-color="#a0009e"/><stop offset="1" stop-color="#a10083"/></linearGradient><linearGradient id="L145" gradientUnits="userSpaceOnUse" x1="795" x2="922" y1="0" y2="0"><stop offset="0" stop-color="#000f9e"/><stop offset="0.197" stop-color="#00059e"/><stop offset="0.283" stop-color="#13009e"/><stop offset="0.646" stop-color="#5f009e"/><stop offset="0.921" stop-color="#a0009e"/><stop offset="1" stop-color="#a1008d"/></linearGradient><linearGradient id="L146" gradientUnits="userSpaceOnUse" x1="796" x2="916" y1="0" y2="0"><stop offset="0" stop-color="#000c9e"/><stop offset="0.192" stop-color="#00039e"/><stop offset="0.667" stop-color="#5d009e"/><stop offset="0.967" stop-color="#9f009e"/><stop offset="1" stop-color="#a10098"/></linearGradient><linearGradient id="L147" gradientUnits="userSpaceOnUse" x1="797" x2="910" y1="0" y2="0"><stop offset="0" stop-color="#000a9e"/><stop offset="0.186" stop-color="#00019e"/><stop offset="0.681" stop-color="#5a009e"/><stop offset="1" stop-color="#9b009e"/></linearGradient><linearGradient id="L148" gradientUnits="userSpaceOnUse" x1="799" x2="903" y1="0" y2="0"><stop offset="0" stop-color="#00079e"/><stop offset="0.183" stop-color="#01009e"/><stop offset="0.692" stop-color="#56009e"/><stop offset="1" stop-color="#8e009e"/></linearGradient><linearGradient id="L149" gradientUnits="userSpaceOnUse" x1="800" x2="897" y1="0" y2="0"><stop offset="0" stop-color="#00059e"/><stop offset="0.175" stop-color="#01009e"/><stop offset="1" stop-color="#83009e"/></linearGradient><linearGradient id="L150" gradientUnits="userSpaceOnUse" x1="802" x2="891" y1="0" y2="0"><stop offset="0" stop-color="#00019e"/><stop offset="0.157" stop-color="#00009e"/><stop offset="1" stop-color="#78009e"/></linearGradient><linearGradient id="L151" gradientUnits="userSpaceOnUse" x1="804" x2="885" y1="0" y2="0"><stop offset="0" stop-color="#00009e"/><stop offset="0.136" stop-color="#00009e"/><stop offset="1" stop-color="#6e009e"/></linearGradient><linearGradient id="L152" gradientUnits="userSpaceOnUse" x1="806" x2="879" y1="0" y2="0"><stop offset="0" stop-color="#00009e"/><stop offset="0.123" stop-color="#01009e"/><stop offset="1" stop-color="#65009e"/></linearGradient><linearGradient id="L153" gradientUnits="userSpaceOnUse" x1="808" x2="872" y1="0" y2="0"><stop offset="0" stop-color="#00009e"/><stop offset="0.094" stop-color="#01009e"/><stop offset="1" stop-color="#5a009e"/></linearGradient><linearGradient id="L154" gradientUnits="userSpaceOnUse" x1="810" x2="866" y1="0" y2="0"><stop offset="0" stop-color="#00009e"/><stop offset="0.054" stop-color="#01009e"/><stop offset="1" stop-color="#51009e"/></linearGradient><linearGradient id="L155" gradientUnits="userSpaceOnUse" x1="812" x2="860" y1="0" y2="0"><stop offset="0" stop-color="#00009e"/><stop offset="1" stop-color="#48009e"/></linearGradient><linearGradient id="L156" gradientUnits="userSpaceOnUse" x1="815" x2="853" y1="0" y2="0"><stop offset="0" stop-color="#07009e"/><stop offset="1" stop-color="#3e009e"/></linearGradient><linearGradient id="L157" gradientUnits="userSpaceOnUse" x1="818" x2="847" y1="0" y2="0"><stop offset="0" stop-color="#0c009e"/><stop offset="1" stop-color="#36009e"/></linearGradient><linearGradient id="L158" gradientUnits="userSpaceOnUse" x1="822" x2="840" y1="0" y2="0"><stop offset="0" stop-color="#13009e"/><stop offset="1" stop-color="#2d009e"/></linearGradient><linearGradient id="L159" gradientUnits="userSpaceOnUse" x1="827" x2="833" y1="0" y2="0"><stop offset="0" stop-color="#1b009e"/><stop offset="1" stop-color="#23009e"/></linearGradient><linearGradient id="T0" gradientUnits="userSpaceOnUse" x1="897" x2="904" y1="0" y2="0"><stop offset="0" stop-color="#00ff03"/><stop offset="0.286" stop-color="#01ff02"/><stop offset="1" stop-color="#0fff00"/></linearGradient><linearGradient id="T1" gradientUnits="userSpaceOnUse" x1="896" x2="908" y1="0" y2="0"><stop offset="0" stop-color="#00ff07"/><stop offset="0.167" stop-color="#00ff05"/><stop offset="1" stop-color="#1bff00"/></linearGradient><linearGradient id="T2" gradientUnits="userSpaceOnUse" x1="895" x2="911" y1="0" y2="0"><stop offset="0" stop-color="#00ff0a"/><stop offset="0.125" stop-color="#00ff09"/><stop offset="1" stop-color="#25ff00"/></linearGradient><linearGradient id="T3" gradientUnits="userSpaceOnUse" x1="894" x2="915" y1="0" y2="0"><stop offset="0" stop-color="#00ff0e"/><stop offset="0.143" stop-color="#02ff0b"/><stop offset="1" stop-color="#32ff00"/></linearGradient><linearGradient id="T4" gradientUnits="userSpaceOnUse" x1="894" x2="918" y1="0" y2="0"><stop offset="0" stop-color="#00ff10"/><stop offset="0.083" stop-color="#02ff0f"/><stop offset="1" stop-color="#3cff00"/></linearGradient><linearGradient id="T5" gradientUnits="userSpaceOnUse" x1="893" x2="922" y1="0" y2="0"><stop offset="0" stop-color="#00ff14"/><stop offset="0.069" stop-color="#01ff12"/><stop offset="1" stop-color="#49ff00"/></linearGradient><linearGradient id="T6" gradientUnits="userSpaceOnUse" x1="892" x2="925" y1="0" y2="0"><stop offset="0" stop-color="#00ff17"/><stop offset="0.061" stop-color="#00ff16"/><stop offset="1" stop-color="#54ff00"/></linearGradient><linearGradient id="T7" gradientUnits="userSpaceOnUse" x1="891" x2="929" y1="0" y2="0"><stop offset="0" stop-color="#00ff1a"/><stop offset="0.053" stop-color="#00ff19"/><stop offset="1" stop-color="#62ff00"/></linearGradient><linearGradient id="T8" gradientUnits="userSpaceOnUse" x1="891" x2="933" y1="0" y2="0"><stop offset="0" stop-color="#00ff1d"/><stop offset="0.048" stop-color="#02ff1c"/><stop offset="1" stop-color="#70ff00"/></linearGradient><linearGradient id="T9" gradientUnits="userSpaceOnUse" x1="890" x2="936" y1="0" y2="0"><stop offset="0" stop-color="#00ff21"/><stop offset="0.043" stop-color="#01ff1f"/><stop offset="1" stop-color="#7cff00"/></linearGradient><linearGradient id="T10" gradientUnits="userSpaceOnUse" x1="889" x2="940" y1="0" y2="0"><stop offset="0" stop-color="#00ff24"/><stop offset="0.039" stop-color="#01ff23"/><stop offset="1" stop-color="#8bff00"/></linearGradient><linearGradient id="T11" gradientUnits="userSpaceOnUse" x1="888" x2="943" y1="0" y2="0"><stop offset="0" stop-color="#00ff28"/><stop offset="0.036" stop-color="#00ff26"/><stop offset="1" stop-color="#98ff00"/></linearGradient><linearGradient id="T12" gradientUnits="userSpaceOnUse" x1="887" x2="947" y1="0" y2="0"><stop offset="0" stop-color="#00ff2b"/><stop offset="0.05" stop-color="#03ff29"/><stop offset="1" stop-color="#a8ff00"/></linearGradient><linearGradient id="T13" gradientUnits="userSpaceOnUse" x1="887" x2="950" y1="0" y2="0"><stop offset="0" stop-color="#00ff2e"/><stop offset="0.032" stop-color="#02ff2d"/><stop offset="0.556" stop-color="#62ff17"/><stop offset="1" stop-color="#b6ff00"/></linearGradient><linearGradient id="T14" gradientUnits="userSpaceOnUse" x1="886" x2="954" y1="0" y2="0"><stop offset="0" stop-color="#00ff32"/><stop offset="0.029" stop-color="#01ff31"/><stop offset="0.544" stop-color="#68ff19"/><stop offset="1" stop-color="#c8ff00"/></linearGradient><linearGradient id="T15" gradientUnits="userSpaceOnUse" x1="885" x2="958" y1="0" y2="0"><stop offset="0" stop-color="#00ff35"/><stop offset="0.027" stop-color="#00ff34"/><stop offset="0.548" stop-color="#71ff1b"/><stop offset="1" stop-color="#dbff00"/></linearGradient><linearGradient id="T16" gradientUnits="userSpaceOnUse" x1="884" x2="961" y1="0" y2="0"><stop offset="0" stop-color="#00ff39"/><stop offset="0.026" stop-color="#00ff38"/><stop offset="0.532" stop-color="#75ff1e"/><stop offset="1" stop-color="#ebff00"/></linearGradient><linearGradient id="T17" gradientUnits="userSpaceOnUse" x1="883" x2="965" y1="0" y2="0"><stop offset="0" stop-color="#00ff3d"/><stop offset="0.037" stop-color="#03ff3b"/><stop offset="0.524" stop-color="#7cff21"/><stop offset="1" stop-color="#fffe00"/></linearGradient><linearGradient id="T18" gradientUnits="userSpaceOnUse" x1="883" x2="968" y1="0" y2="0"><stop offset="0" stop-color="#00ff40"/><stop offset="0.024" stop-color="#02ff3f"/><stop offset="0.529" stop-color="#86ff23"/><stop offset="0.941" stop-color="#ffff03"/><stop offset="1" stop-color="#ffed00"/></linearGradient><linearGradient id="T19" gradientUnits="userSpaceOnUse" x1="882" x2="972" y1="0" y2="0"><stop offset="0" stop-color="#00ff44"/><stop offset="0.022" stop-color="#01ff43"/><stop offset="0.489" stop-color="#84ff28"/><stop offset="0.878" stop-color="#feff09"/><stop offset="1" stop-color="#ffdb00"/></linearGradient><linearGradient id="T20" gradientUnits="userSpaceOnUse" x1="881" x2="976" y1="0" y2="0"><stop offset="0" stop-color="#00ff48"/><stop offset="0.021" stop-color="#00ff47"/><stop offset="0.453" stop-color="#82ff2d"/><stop offset="0.821" stop-color="#fdff10"/><stop offset="0.958" stop-color="#ffd500"/><stop offset="1" stop-color="#ffca00"/></linearGradient><linearGradient id="T21" gradientUnits="userSpaceOnUse" x1="880" x2="979" y1="0" y2="0"><stop offset="0" stop-color="#00ff4c"/><stop offset="0.02" stop-color="#00ff4b"/><stop offset="0.414" stop-color="#7cff33"/><stop offset="0.788" stop-color="#fffe15"/><stop offset="0.889" stop-color="#ffdc09"/><stop offset="1" stop-color="#ffbe00"/></linearGradient><linearGradient id="T22" gradientUnits="userSpaceOnUse" x1="879" x2="983" y1="0" y2="0"><stop offset="0" stop-color="#00ff51"/><stop offset="0.029" stop-color="#03ff4f"/><stop offset="0.394" stop-color="#7dff38"/><stop offset="0.74" stop-color="#ffff1b"/><stop offset="0.865" stop-color="#ffd30b"/><stop offset="1" stop-color="#ffb000"/></linearGradient><linearGradient id="T23" gradientUnits="userSpaceOnUse" x1="879" x2="986" y1="0" y2="0"><stop offset="0" stop-color="#00ff54"/><stop offset="0.019" stop-color="#02ff53"/><stop offset="0.393" stop-color="#85ff3b"/><stop offset="0.701" stop-color="#fdff21"/><stop offset="0.841" stop-color="#ffce0e"/><stop offset="1" stop-color="#ffa500"/></linearGradient><linearGradient id="T24" gradientUnits="userSpaceOnUse" x1="878" x2="990" y1="0" y2="0"><stop offset="0" stop-color="#00ff59"/><stop offset="0.018" stop-color="#01ff58"/><stop offset="0.357" stop-color="#7fff41"/><stop offset="0.67" stop-color="#fffe26"/><stop offset="0.821" stop-color="#ffc610"/><stop offset="1" stop-color="#ff9900"/></linearGradient><linearGradient id="T25" gradientUnits="userSpaceOnUse" x1="877" x2="993" y1="0" y2="0"><stop offset="0" stop-color="#00ff5d"/><stop offset="0.017" stop-color="#00ff5c"/><stop offset="0.345" stop-color="#80ff46"/><stop offset="0.638" stop-color="#ffff2c"/><stop offset="0.716" stop-color="#ffde1f"/><stop offset="0.802" stop-color="#ffc014"/><stop offset="1" stop-color="#ff8f00"/></linearGradient><linearGradient id="T26" gradientUnits="userSpaceOnUse" x1="876" x2="997" y1="0" y2="0"><stop offset="0" stop-color="#00ff61"/><stop offset="0.017" stop-color="#00ff60"/><stop offset="0.322" stop-color="#7dff4c"/><stop offset="0.603" stop-color="#feff33"/><stop offset="0.686" stop-color="#ffdb24"/><stop offset="0.777" stop-color="#ffbb16"/><stop offset="0.884" stop-color="#ff9e0a"/><stop offset="1" stop-color="#ff8500"/></linearGradient><linearGradient id="T27" gradientUnits="userSpaceOnUse" x1="876" x2="1001" y1="0" y2="0"><stop offset="0" stop-color="#00ff66"/><stop offset="0.016" stop-color="#03ff65"/><stop offset="0.304" stop-color="#7eff51"/><stop offset="0.576" stop-color="#fffd38"/><stop offset="0.664" stop-color="#ffd527"/><stop offset="0.76" stop-color="#ffb418"/><stop offset="0.872" stop-color="#ff960b"/><stop offset="1" stop-color="#ff7b00"/></linearGradient><linearGradient id="T28" gradientUnits="userSpaceOnUse" x1="875" x2="1004" y1="0" y2="0"><stop offset="0" stop-color="#00ff6a"/><stop offset="0.016" stop-color="#02ff69"/><stop offset="0.295" stop-color="#7fff56"/><stop offset="0.55" stop-color="#fffe3e"/><stop offset="0.643" stop-color="#ffd22b"/><stop offset="0.744" stop-color="#ffaf1b"/><stop offset="0.86" stop-color="#ff900d"/><stop offset="1" stop-color="#ff7400"/></linearGradient><linearGradient id="T29" gradientUnits="userSpaceOnUse" x1="874" x2="1008" y1="0" y2="0"><stop offset="0" stop-color="#00ff6f"/><stop offset="0.015" stop-color="#01ff6e"/><stop offset="0.284" stop-color="#80ff5b"/><stop offset="0.522" stop-color="#ffff45"/><stop offset="0.619" stop-color="#ffd02f"/><stop offset="0.724" stop-color="#ffaa1e"/><stop offset="0.851" stop-color="#ff880d"/><stop offset="1" stop-color="#ff6b00"/></linearGradient><linearGradient id="T30" gradientUnits="userSpaceOnUse" x1="873" x2="1011" y1="0" y2="0"><stop offset="0" stop-color="#00ff74"/><stop offset="0.014" stop-color="#00ff73"/><stop offset="0.268" stop-color="#7eff61"/><stop offset="0.5" stop-color="#fdff4c"/><stop offset="0.601" stop-color="#ffcd34"/><stop offset="0.71" stop-color="#ffa520"/><stop offset="0.841" stop-color="#ff830f"/><stop offset="1" stop-color="#ff6400"/></linearGradient><linearGradient id="T31" gradientUnits="userSpaceOnUse" x1="872" x2="1015" y1="0" y2="0"><stop offset="0" stop-color="#00ff79"/><stop offset="0.021" stop-color="#03ff78"/><stop offset="0.238" stop-color="#74ff68"/><stop offset="0.483" stop-color="#fffd51"/><stop offset="0.58" stop-color="#ffca38"/><stop offset="0.692" stop-color="#ffa123"/><stop offset="0.832" stop-color="#ff7c10"/><stop offset="1" stop-color="#ff5d00"/></linearGradient><linearGradient id="T32" gradientUnits="userSpaceOnUse" x1="872" x2="1018" y1="0" y2="0"><stop offset="0" stop-color="#00ff7e"/><stop offset="0.014" stop-color="#02ff7d"/><stop offset="0.253" stop-color="#84ff6c"/><stop offset="0.459" stop-color="#ffff58"/><stop offset="0.555" stop-color="#ffca3e"/><stop offset="0.678" stop-color="#ff9c25"/><stop offset="0.822" stop-color="#ff7711"/><stop offset="1" stop-color="#ff5700"/></linearGradient><linearGradient id="T33" gradientUnits="userSpaceOnUse" x1="871" x2="1022" y1="0" y2="0"><stop offset="0" stop-color="#00ff83"/><stop offset="0.013" stop-color="#01ff82"/><stop offset="0.238" stop-color="#81ff72"/><stop offset="0.437" stop-color="#feff5f"/><stop offset="0.543" stop-color="#ffc440"/><stop offset="0.662" stop-color="#ff9728"/><stop offset="0.815" stop-color="#ff7012"/><stop offset="1" stop-color="#ff5000"/></linearGradient><linearGradient id="T34" gradientUnits="userSpaceOnUse" x1="870" x2="1026" y1="0" y2="0"><stop offset="0" stop-color="#00ff88"/><stop offset="0.013" stop-color="#00ff87"/><stop offset="0.212" stop-color="#76ff79"/><stop offset="0.423" stop-color="#fffd65"/><stop offset="0.474" stop-color="#ffdc53"/><stop offset="0.526" stop-color="#ffc144"/><stop offset="0.654" stop-color="#ff9129"/><stop offset="0.808" stop-color="#ff6a13"/><stop offset="1" stop-color="#ff4900"/></linearGradient><linearGradient id="T35" gradientUnits="userSpaceOnUse" x1="869" x2="1029" y1="0" y2="0"><stop offset="0" stop-color="#00ff8e"/><stop offset="0.013" stop-color="#00ff8d"/><stop offset="0.206" stop-color="#77ff7f"/><stop offset="0.406" stop-color="#fffe6d"/><stop offset="0.456" stop-color="#ffdd5a"/><stop offset="0.506" stop-color="#ffc24a"/><stop offset="0.637" stop-color="#ff8e2d"/><stop offset="0.8" stop-color="#ff6514"/><stop offset="1" stop-color="#ff4400"/></linearGradient><linearGradient id="T36" gradientUnits="userSpaceOnUse" x1="868" x2="1033" y1="0" y2="0"><stop offset="0" stop-color="#00ff93"/><stop offset="0.018" stop-color="#03ff92"/><stop offset="0.2" stop-color="#78ff86"/><stop offset="0.297" stop-color="#bbff7d"/><stop offset="0.388" stop-color="#ffff75"/><stop offset="0.436" stop-color="#ffdd61"/><stop offset="0.491" stop-color="#ffbf4f"/><stop offset="0.552" stop-color="#ffa43e"/><stop offset="0.624" stop-color="#ff8a2f"/><stop offset="0.788" stop-color="#ff6116"/><stop offset="1" stop-color="#ff3e00"/></linearGradient><linearGradient id="T37" gradientUnits="userSpaceOnUse" x1="868" x2="1036" y1="0" y2="0"><stop offset="0" stop-color="#00ff99"/><stop offset="0.012" stop-color="#02ff98"/><stop offset="0.19" stop-color="#79ff8c"/><stop offset="0.369" stop-color="#fdff7c"/><stop offset="0.375" stop-color="#fffc7a"/><stop offset="0.423" stop-color="#ffda65"/><stop offset="0.482" stop-color="#ffb951"/><stop offset="0.613" stop-color="#ff8631"/><stop offset="0.786" stop-color="#ff5b16"/><stop offset="1" stop-color="#ff3900"/></linearGradient><linearGradient id="T38" gradientUnits="userSpaceOnUse" x1="867" x2="1040" y1="0" y2="0"><stop offset="0" stop-color="#00ff9f"/><stop offset="0.012" stop-color="#01ff9e"/><stop offset="0.185" stop-color="#7aff92"/><stop offset="0.358" stop-color="#fffd82"/><stop offset="0.405" stop-color="#ffdb6d"/><stop offset="0.462" stop-color="#ffb957"/><stop offset="0.526" stop-color="#ff9c45"/><stop offset="0.601" stop-color="#ff8133"/><stop offset="0.775" stop-color="#ff5717"/><stop offset="1" stop-color="#ff3400"/></linearGradient><linearGradient id="T39" gradientUnits="userSpaceOnUse" x1="866" x2="1043" y1="0" y2="0"><stop offset="0" stop-color="#00ffa5"/><stop offset="0.011" stop-color="#00ffa4"/><stop offset="0.175" stop-color="#77ff9a"/><stop offset="0.345" stop-color="#fffe8b"/><stop offset="0.395" stop-color="#ffd771"/><stop offset="0.452" stop-color="#ffb65b"/><stop offset="0.514" stop-color="#ff9948"/><stop offset="0.588" stop-color="#ff7f37"/><stop offset="0.768" stop-color="#ff5219"/><stop offset="1" stop-color="#ff2f00"/></linearGradient><linearGradient id="T40" gradientUnits="userSpaceOnUse" x1="865" x2="1047" y1="0" y2="0"><stop offset="0" stop-color="#00ffab"/><stop offset="0.011" stop-color="#00ffab"/><stop offset="0.17" stop-color="#78ffa0"/><stop offset="0.253" stop-color="#baff9a"/><stop offset="0.33" stop-color="#feff94"/><stop offset="0.385" stop-color="#ffd476"/><stop offset="0.44" stop-color="#ffb360"/><stop offset="0.505" stop-color="#ff944b"/><stop offset="0.577" stop-color="#ff7a39"/><stop offset="0.758" stop-color="#ff4e1a"/><stop offset="1" stop-color="#ff2b00"/></linearGradient><linearGradient id="T41" gradientUnits="userSpaceOnUse" x1="865" x2="1051" y1="0" y2="0"><stop offset="0" stop-color="#00ffb1"/><stop offset="0.011" stop-color="#03ffb1"/><stop offset="0.161" stop-color="#79ffa8"/><stop offset="0.317" stop-color="#fffc9a"/><stop offset="0.366" stop-color="#ffd47e"/><stop offset="0.425" stop-color="#ffb064"/><stop offset="0.489" stop-color="#ff914e"/><stop offset="0.565" stop-color="#ff763b"/><stop offset="0.651" stop-color="#ff5f2a"/><stop offset="0.753" stop-color="#ff491a"/><stop offset="1" stop-color="#ff2600"/></linearGradient><linearGradient id="T42" gradientUnits="userSpaceOnUse" x1="864" x2="1054" y1="0" y2="0"><stop offset="0" stop-color="#00ffb8"/><stop offset="0.011" stop-color="#02ffb7"/><stop offset="0.158" stop-color="#7affaf"/><stop offset="0.305" stop-color="#fffea3"/><stop offset="0.353" stop-color="#ffd586"/><stop offset="0.411" stop-color="#ffb06a"/><stop offset="0.479" stop-color="#ff8f52"/><stop offset="0.553" stop-color="#ff743e"/><stop offset="0.642" stop-color="#ff5b2c"/><stop offset="0.742" stop-color="#ff461c"/><stop offset="1" stop-color="#ff2200"/></linearGradient><linearGradient id="T43" gradientUnits="userSpaceOnUse" x1="863" x2="1058" y1="0" y2="0"><stop offset="0" stop-color="#00ffbf"/><stop offset="0.01" stop-color="#01ffbe"/><stop offset="0.154" stop-color="#7cffb6"/><stop offset="0.292" stop-color="#ffffad"/><stop offset="0.344" stop-color="#ffd18b"/><stop offset="0.4" stop-color="#ffac6f"/><stop offset="0.467" stop-color="#ff8c56"/><stop offset="0.544" stop-color="#ff7040"/><stop offset="0.636" stop-color="#ff562d"/><stop offset="0.738" stop-color="#ff411c"/><stop offset="1" stop-color="#ff1d00"/></linearGradient><linearGradient id="T44" gradientUnits="userSpaceOnUse" x1="862" x2="1061" y1="0" y2="0"><stop offset="0" stop-color="#00ffc6"/><stop offset="0.01" stop-color="#00ffc5"/><stop offset="0.131" stop-color="#6bffbf"/><stop offset="0.211" stop-color="#b5ffbb"/><stop offset="0.281" stop-color="#fdffb6"/><stop offset="0.286" stop-color="#fffbb3"/><stop offset="0.337" stop-color="#ffce90"/><stop offset="0.392" stop-color="#ffa973"/><stop offset="0.457" stop-color="#ff895a"/><stop offset="0.538" stop-color="#ff6b42"/><stop offset="0.628" stop-color="#ff532f"/><stop offset="0.734" stop-color="#ff3d1d"/><stop offset="1" stop-color="#ff1a00"/></linearGradient><linearGradient id="T45" gradientUnits="userSpaceOnUse" x1="861" x2="1065" y1="0" y2="0"><stop offset="0" stop-color="#00ffcd"/><stop offset="0.01" stop-color="#00ffcc"/><stop offset="0.127" stop-color="#6cffc7"/><stop offset="0.275" stop-color="#fffdbd"/><stop offset="0.324" stop-color="#ffce98"/><stop offset="0.377" stop-color="#ffa97a"/><stop offset="0.446" stop-color="#ff865d"/><stop offset="0.525" stop-color="#ff6946"/><stop offset="0.618" stop-color="#ff4f31"/><stop offset="0.725" stop-color="#ff3a1f"/><stop offset="1" stop-color="#ff1500"/></linearGradient><linearGradient id="T46" gradientUnits="userSpaceOnUse" x1="861" x2="1069" y1="0" y2="0"><stop offset="0" stop-color="#00ffd4"/><stop offset="0.01" stop-color="#03ffd4"/><stop offset="0.139" stop-color="#7fffcf"/><stop offset="0.26" stop-color="#fffec8"/><stop offset="0.308" stop-color="#ffcfa0"/><stop offset="0.365" stop-color="#ffa67e"/><stop offset="0.433" stop-color="#ff8361"/><stop offset="0.51" stop-color="#ff6649"/><stop offset="0.601" stop-color="#ff4d33"/><stop offset="0.712" stop-color="#ff3720"/><stop offset="1" stop-color="#ff1100"/></linearGradient><linearGradient id="T47" gradientUnits="userSpaceOnUse" x1="860" x2="1072" y1="0" y2="0"><stop offset="0" stop-color="#00ffdc"/><stop offset="0.009" stop-color="#02ffdc"/><stop offset="0.132" stop-color="#7cffd7"/><stop offset="0.25" stop-color="#feffd2"/><stop offset="0.297" stop-color="#ffcfa9"/><stop offset="0.354" stop-color="#ffa585"/><stop offset="0.42" stop-color="#ff8267"/><stop offset="0.5" stop-color="#ff644c"/><stop offset="0.594" stop-color="#ff4a35"/><stop offset="0.708" stop-color="#ff3321"/><stop offset="1" stop-color="#ff0e00"/></linearGradient><linearGradient id="T48" gradientUnits="userSpaceOnUse" x1="859" x2="1076" y1="0" y2="0"><stop offset="0" stop-color="#00ffe4"/><stop offset="0.009" stop-color="#01ffe3"/><stop offset="0.115" stop-color="#6fffe1"/><stop offset="0.18" stop-color="#b5ffdf"/><stop offset="0.24" stop-color="#fcffdd"/><stop offset="0.244" stop-color="#fffcda"/><stop offset="0.29" stop-color="#ffccaf"/><stop offset="0.346" stop-color="#ffa289"/><stop offset="0.415" stop-color="#ff7e69"/><stop offset="0.493" stop-color="#ff604e"/><stop offset="0.59" stop-color="#ff4536"/><stop offset="0.7" stop-color="#ff3022"/><stop offset="1" stop-color="#ff0a00"/></linearGradient><linearGradient id="T49" gradientUnits="userSpaceOnUse" x1="858" x2="1079" y1="0" y2="0"><stop offset="0" stop-color="#00ffec"/><stop offset="0.009" stop-color="#00ffec"/><stop offset="0.113" stop-color="#70ffea"/><stop offset="0.235" stop-color="#fffde5"/><stop offset="0.281" stop-color="#ffccb8"/><stop offset="0.339" stop-color="#ff9f8e"/><stop offset="0.407" stop-color="#ff7b6c"/><stop offset="0.484" stop-color="#ff5d51"/><stop offset="0.579" stop-color="#ff4339"/><stop offset="0.692" stop-color="#ff2d24"/><stop offset="1" stop-color="#ff0700"/></linearGradient><linearGradient id="T50" gradientUnits="userSpaceOnUse" x1="857" x2="1083" y1="0" y2="0"><stop offset="0" stop-color="#00fff4"/><stop offset="0.013" stop-color="#04fff4"/><stop offset="0.111" stop-color="#71fff3"/><stop offset="0.173" stop-color="#bafff3"/><stop offset="0.226" stop-color="#fffff2"/><stop offset="0.27" stop-color="#ffccc1"/><stop offset="0.327" stop-color="#ff9e95"/><stop offset="0.394" stop-color="#ff7a72"/><stop offset="0.473" stop-color="#ff5b54"/><stop offset="0.571" stop-color="#ff403a"/><stop offset="0.686" stop-color="#ff2925"/><stop offset="1" stop-color="#ff0300"/></linearGradient><linearGradient id="T51" gradientUnits="userSpaceOnUse" x1="857" x2="1085" y1="0" y2="0"><stop offset="0" stop-color="#00fffd"/><stop offset="0.009" stop-color="#03fffd"/><stop offset="0.101" stop-color="#6dfffd"/><stop offset="0.162" stop-color="#b7fffd"/><stop offset="0.215" stop-color="#fdfffd"/><stop offset="0.219" stop-color="#fffbf9"/><stop offset="0.263" stop-color="#ffc8c7"/><stop offset="0.32" stop-color="#ff9b9a"/><stop offset="0.386" stop-color="#ff7776"/><stop offset="0.469" stop-color="#ff5756"/><stop offset="0.566" stop-color="#ff3d3c"/><stop offset="0.684" stop-color="#ff2626"/><stop offset="1" stop-color="#ff0000"/></linearGradient><linearGradient id="T52" gradientUnits="userSpaceOnUse" x1="856" x2="1082" y1="0" y2="0"><stop offset="0" stop-color="#00f8ff"/><stop offset="0.009" stop-color="#02f8ff"/><stop offset="0.115" stop-color="#7af7ff"/><stop offset="0.221" stop-color="#fef6ff"/><stop offset="0.27" stop-color="#ffc0c8"/><stop offset="0.323" stop-color="#ff989e"/><stop offset="0.389" stop-color="#ff747a"/><stop offset="0.473" stop-color="#ff5459"/><stop offset="0.571" stop-color="#ff3a3f"/><stop offset="0.69" stop-color="#ff2428"/><stop offset="1" stop-color="#ff0002"/></linearGradient><linearGradient id="T53" gradientUnits="userSpaceOnUse" x1="855" x2="1077" y1="0" y2="0"><stop offset="0" stop-color="#00f0ff"/><stop offset="0.009" stop-color="#00efff"/><stop offset="0.104" stop-color="#67eeff"/><stop offset="0.171" stop-color="#b4ecff"/><stop offset="0.23" stop-color="#feebff"/><stop offset="0.234" stop-color="#ffe6fa"/><stop offset="0.279" stop-color="#ffb9ca"/><stop offset="0.338" stop-color="#ff8f9d"/><stop offset="0.405" stop-color="#ff6d79"/><stop offset="0.486" stop-color="#ff505b"/><stop offset="0.581" stop-color="#ff3841"/><stop offset="0.694" stop-color="#ff232c"/><stop offset="1" stop-color="#ff0006"/></linearGradient><linearGradient id="T54" gradientUnits="userSpaceOnUse" x1="854" x2="1072" y1="0" y2="0"><stop offset="0" stop-color="#00e7ff"/><stop offset="0.009" stop-color="#00e7ff"/><stop offset="0.106" stop-color="#64e5ff"/><stop offset="0.174" stop-color="#b0e3ff"/><stop offset="0.239" stop-color="#fde0ff"/><stop offset="0.243" stop-color="#ffddfb"/><stop offset="0.289" stop-color="#ffb1cb"/><stop offset="0.349" stop-color="#ff899f"/><stop offset="0.417" stop-color="#ff687b"/><stop offset="0.495" stop-color="#ff4d5e"/><stop offset="0.592" stop-color="#ff3644"/><stop offset="0.702" stop-color="#ff222f"/><stop offset="1" stop-color="#ff000a"/></linearGradient><linearGradient id="T55" gradientUnits="userSpaceOnUse" x1="853" x2="1066" y1="0" y2="0"><stop offset="0" stop-color="#00dfff"/><stop offset="0.014" stop-color="#04dfff"/><stop offset="0.113" stop-color="#66dcff"/><stop offset="0.254" stop-color="#ffd3fc"/><stop offset="0.3" stop-color="#ffa9cc"/><stop offset="0.357" stop-color="#ff85a3"/><stop offset="0.423" stop-color="#ff6781"/><stop offset="0.502" stop-color="#ff4c63"/><stop offset="0.596" stop-color="#ff3549"/><stop offset="0.709" stop-color="#ff2132"/><stop offset="1" stop-color="#ff000e"/></linearGradient><linearGradient id="T56" gradientUnits="userSpaceOnUse" x1="853" x2="1061" y1="0" y2="0"><stop offset="0" stop-color="#00d8ff"/><stop offset="0.01" stop-color="#03d7ff"/><stop offset="0.13" stop-color="#76d2ff"/><stop offset="0.26" stop-color="#ffcafd"/><stop offset="0.308" stop-color="#ffa2ce"/><stop offset="0.365" stop-color="#ff7fa5"/><stop offset="0.433" stop-color="#ff6282"/><stop offset="0.51" stop-color="#ff4966"/><stop offset="0.601" stop-color="#ff344d"/><stop offset="0.712" stop-color="#ff2136"/><stop offset="1" stop-color="#ff0011"/></linearGradient><linearGradient id="T57" gradientUnits="userSpaceOnUse" x1="852" x2="1056" y1="0" y2="0"><stop offset="0" stop-color="#00d0ff"/><stop offset="0.01" stop-color="#01d0ff"/><stop offset="0.137" stop-color="#78caff"/><stop offset="0.27" stop-color="#ffc1fe"/><stop offset="0.319" stop-color="#ff9bcf"/><stop offset="0.373" stop-color="#ff7ca9"/><stop offset="0.441" stop-color="#ff5f86"/><stop offset="0.52" stop-color="#ff4769"/><stop offset="0.613" stop-color="#ff314f"/><stop offset="0.721" stop-color="#ff1f3a"/><stop offset="1" stop-color="#ff0015"/></linearGradient><linearGradient id="T58" gradientUnits="userSpaceOnUse" x1="851" x2="1051" y1="0" y2="0"><stop offset="0" stop-color="#00c9ff"/><stop offset="0.01" stop-color="#00c8ff"/><stop offset="0.14" stop-color="#75c2ff"/><stop offset="0.28" stop-color="#ffb8fe"/><stop offset="0.33" stop-color="#ff94d0"/><stop offset="0.385" stop-color="#ff76ab"/><stop offset="0.45" stop-color="#ff5c8a"/><stop offset="0.53" stop-color="#ff446c"/><stop offset="0.62" stop-color="#ff3053"/><stop offset="0.73" stop-color="#ff1e3d"/><stop offset="1" stop-color="#ff0019"/></linearGradient><linearGradient id="T59" gradientUnits="userSpaceOnUse" x1="850" x2="1046" y1="0" y2="0"><stop offset="0" stop-color="#00c2ff"/><stop offset="0.01" stop-color="#00c1ff"/><stop offset="0.148" stop-color="#76baff"/><stop offset="0.224" stop-color="#bcb5ff"/><stop offset="0.291" stop-color="#ffb0ff"/><stop offset="0.342" stop-color="#ff8dd1"/><stop offset="0.398" stop-color="#ff70ac"/><stop offset="0.464" stop-color="#ff578b"/><stop offset="0.541" stop-color="#ff416f"/><stop offset="0.633" stop-color="#ff2e56"/><stop offset="0.735" stop-color="#ff1d41"/><stop offset="1" stop-color="#ff001d"/></linearGradient><linearGradient id="T60" gradientUnits="userSpaceOnUse" x1="850" x2="1041" y1="0" y2="0"><stop offset="0" stop-color="#00bbff"/><stop offset="0.01" stop-color="#03baff"/><stop offset="0.162" stop-color="#81b1ff"/><stop offset="0.298" stop-color="#fea7ff"/><stop offset="0.351" stop-color="#ff86d2"/><stop offset="0.408" stop-color="#ff6bae"/><stop offset="0.476" stop-color="#ff528d"/><stop offset="0.55" stop-color="#ff3f72"/><stop offset="0.639" stop-color="#ff2c5a"/><stop offset="0.743" stop-color="#ff1b44"/><stop offset="1" stop-color="#ff0021"/></linearGradient><linearGradient id="T61" gradientUnits="userSpaceOnUse" x1="849" x2="1036" y1="0" y2="0"><stop offset="0" stop-color="#00b4ff"/><stop offset="0.011" stop-color="#02b4ff"/><stop offset="0.155" stop-color="#75abff"/><stop offset="0.235" stop-color="#b9a5ff"/><stop offset="0.31" stop-color="#fe9fff"/><stop offset="0.316" stop-color="#ff9cfb"/><stop offset="0.364" stop-color="#ff7fd4"/><stop offset="0.422" stop-color="#ff65af"/><stop offset="0.487" stop-color="#ff4f91"/><stop offset="0.561" stop-color="#ff3c76"/><stop offset="0.647" stop-color="#ff2a5e"/><stop offset="0.749" stop-color="#ff1b49"/><stop offset="1" stop-color="#ff0025"/></linearGradient><linearGradient id="T62" gradientUnits="userSpaceOnUse" x1="848" x2="1030" y1="0" y2="0"><stop offset="0" stop-color="#00aeff"/><stop offset="0.011" stop-color="#01adff"/><stop offset="0.159" stop-color="#72a4ff"/><stop offset="0.33" stop-color="#ff94fc"/><stop offset="0.379" stop-color="#ff79d5"/><stop offset="0.434" stop-color="#ff62b3"/><stop offset="0.5" stop-color="#ff4c94"/><stop offset="0.577" stop-color="#ff3979"/><stop offset="0.758" stop-color="#ff1a4d"/><stop offset="1" stop-color="#ff002a"/></linearGradient><linearGradient id="T63" gradientUnits="userSpaceOnUse" x1="847" x2="1025" y1="0" y2="0"><stop offset="0" stop-color="#00a8ff"/><stop offset="0.011" stop-color="#00a7ff"/><stop offset="0.169" stop-color="#749cff"/><stop offset="0.343" stop-color="#ff8cfd"/><stop offset="0.393" stop-color="#ff72d6"/><stop offset="0.449" stop-color="#ff5cb4"/><stop offset="0.511" stop-color="#ff4998"/><stop offset="0.584" stop-color="#ff377e"/><stop offset="0.764" stop-color="#ff1952"/><stop offset="1" stop-color="#ff002e"/></linearGradient><linearGradient id="T64" gradientUnits="userSpaceOnUse" x1="846" x2="1020" y1="0" y2="0"><stop offset="0" stop-color="#00a1ff"/><stop offset="0.011" stop-color="#00a1ff"/><stop offset="0.172" stop-color="#7196ff"/><stop offset="0.356" stop-color="#ff85fd"/><stop offset="0.402" stop-color="#ff6fdb"/><stop offset="0.46" stop-color="#ff59b9"/><stop offset="0.523" stop-color="#ff469c"/><stop offset="0.598" stop-color="#ff3481"/><stop offset="0.776" stop-color="#ff1755"/><stop offset="1" stop-color="#ff0033"/></linearGradient><linearGradient id="T65" gradientUnits="userSpaceOnUse" x1="846" x2="1015" y1="0" y2="0"><stop offset="0" stop-color="#009bff"/><stop offset="0.012" stop-color="#039bff"/><stop offset="0.195" stop-color="#7f8eff"/><stop offset="0.367" stop-color="#ff7efe"/><stop offset="0.414" stop-color="#ff68dc"/><stop offset="0.473" stop-color="#ff53ba"/><stop offset="0.538" stop-color="#ff419d"/><stop offset="0.609" stop-color="#ff3184"/><stop offset="0.781" stop-color="#ff165a"/><stop offset="1" stop-color="#ff0038"/></linearGradient><linearGradient id="T66" gradientUnits="userSpaceOnUse" x1="845" x2="1010" y1="0" y2="0"><stop offset="0" stop-color="#0096ff"/><stop offset="0.012" stop-color="#0295ff"/><stop offset="0.206" stop-color="#8087ff"/><stop offset="0.382" stop-color="#ff77ff"/><stop offset="0.43" stop-color="#ff62dd"/><stop offset="0.485" stop-color="#ff50be"/><stop offset="0.545" stop-color="#ff3fa3"/><stop offset="0.618" stop-color="#ff3089"/><stop offset="0.788" stop-color="#ff155f"/><stop offset="1" stop-color="#ff003d"/></linearGradient><linearGradient id="T67" gradientUnits="userSpaceOnUse" x1="844" x2="1005" y1="0" y2="0"><stop offset="0" stop-color="#0090ff"/><stop offset="0.012" stop-color="#018fff"/><stop offset="0.211" stop-color="#7d81ff"/><stop offset="0.398" stop-color="#ff6fff"/><stop offset="0.447" stop-color="#ff5cde"/><stop offset="0.503" stop-color="#ff4abf"/><stop offset="0.634" stop-color="#ff2d8d"/><stop offset="0.795" stop-color="#ff1464"/><stop offset="1" stop-color="#ff0042"/></linearGradient><linearGradient id="T68" gradientUnits="userSpaceOnUse" x1="843" x2="999" y1="0" y2="0"><stop offset="0" stop-color="#008bff"/><stop offset="0.013" stop-color="#008aff"/><stop offset="0.218" stop-color="#7a7bff"/><stop offset="0.417" stop-color="#fe68ff"/><stop offset="0.519" stop-color="#ff47c3"/><stop offset="0.647" stop-color="#ff2b92"/><stop offset="0.808" stop-color="#ff1369"/><stop offset="1" stop-color="#ff0049"/></linearGradient><linearGradient id="T69" gradientUnits="userSpaceOnUse" x1="842" x2="994" y1="0" y2="0"><stop offset="0" stop-color="#0085ff"/><stop offset="0.02" stop-color="#0384ff"/><stop offset="0.224" stop-color="#7875ff"/><stop offset="0.434" stop-color="#fd61ff"/><stop offset="0.539" stop-color="#ff42c5"/><stop offset="0.664" stop-color="#ff2895"/><stop offset="0.816" stop-color="#ff126f"/><stop offset="1" stop-color="#ff004f"/></linearGradient><linearGradient id="T70" gradientUnits="userSpaceOnUse" x1="842" x2="989" y1="0" y2="0"><stop offset="0" stop-color="#0080ff"/><stop offset="0.014" stop-color="#027fff"/><stop offset="0.238" stop-color="#7d6eff"/><stop offset="0.456" stop-color="#ff59fd"/><stop offset="0.551" stop-color="#ff3ec9"/><stop offset="0.673" stop-color="#ff269b"/><stop offset="0.823" stop-color="#ff1174"/><stop offset="1" stop-color="#ff0055"/></linearGradient><linearGradient id="T71" gradientUnits="userSpaceOnUse" x1="841" x2="984" y1="0" y2="0"><stop offset="0" stop-color="#007bff"/><stop offset="0.014" stop-color="#017aff"/><stop offset="0.245" stop-color="#7a69ff"/><stop offset="0.476" stop-color="#ff53fd"/><stop offset="0.573" stop-color="#ff39ca"/><stop offset="0.692" stop-color="#ff239e"/><stop offset="0.832" stop-color="#ff107a"/><stop offset="1" stop-color="#ff005b"/></linearGradient><linearGradient id="T72" gradientUnits="userSpaceOnUse" x1="840" x2="979" y1="0" y2="0"><stop offset="0" stop-color="#0076ff"/><stop offset="0.014" stop-color="#0075ff"/><stop offset="0.259" stop-color="#7c63ff"/><stop offset="0.496" stop-color="#ff4cfe"/><stop offset="0.59" stop-color="#ff35ce"/><stop offset="0.705" stop-color="#ff20a4"/><stop offset="0.842" stop-color="#ff0e80"/><stop offset="1" stop-color="#ff0062"/></linearGradient><linearGradient id="T73" gradientUnits="userSpaceOnUse" x1="839" x2="974" y1="0" y2="0"><stop offset="0" stop-color="#0071ff"/><stop offset="0.015" stop-color="#0070ff"/><stop offset="0.267" stop-color="#795eff"/><stop offset="0.519" stop-color="#ff46ff"/><stop offset="0.607" stop-color="#ff31d2"/><stop offset="0.719" stop-color="#ff1ea9"/><stop offset="0.844" stop-color="#ff0e88"/><stop offset="1" stop-color="#ff0069"/></linearGradient><linearGradient id="T74" gradientUnits="userSpaceOnUse" x1="838" x2="969" y1="0" y2="0"><stop offset="0" stop-color="#006cff"/><stop offset="0.023" stop-color="#036bff"/><stop offset="0.282" stop-color="#7a58ff"/><stop offset="0.542" stop-color="#ff40ff"/><stop offset="0.634" stop-color="#ff2cd3"/><stop offset="0.74" stop-color="#ff1bad"/><stop offset="0.863" stop-color="#ff0b8c"/><stop offset="1" stop-color="#ff0071"/></linearGradient><linearGradient id="T75" gradientUnits="userSpaceOnUse" x1="838" x2="963" y1="0" y2="0"><stop offset="0" stop-color="#0067ff"/><stop offset="0.016" stop-color="#0266ff"/><stop offset="0.312" stop-color="#8251ff"/><stop offset="0.568" stop-color="#fe3aff"/><stop offset="0.664" stop-color="#ff27d4"/><stop offset="0.76" stop-color="#ff19b3"/><stop offset="0.872" stop-color="#ff0b95"/><stop offset="1" stop-color="#ff007b"/></linearGradient><linearGradient id="T76" gradientUnits="userSpaceOnUse" x1="837" x2="958" y1="0" y2="0"><stop offset="0" stop-color="#0063ff"/><stop offset="0.017" stop-color="#0162ff"/><stop offset="0.322" stop-color="#804dff"/><stop offset="0.595" stop-color="#fe34ff"/><stop offset="0.686" stop-color="#ff23d8"/><stop offset="0.777" stop-color="#ff16b9"/><stop offset="0.884" stop-color="#ff099c"/><stop offset="1" stop-color="#ff0083"/></linearGradient><linearGradient id="T77" gradientUnits="userSpaceOnUse" x1="836" x2="953" y1="0" y2="0"><stop offset="0" stop-color="#005eff"/><stop offset="0.017" stop-color="#005dff"/><stop offset="0.333" stop-color="#7e48ff"/><stop offset="0.624" stop-color="#fd2eff"/><stop offset="0.795" stop-color="#ff14bf"/><stop offset="0.966" stop-color="#ff0094"/><stop offset="1" stop-color="#ff008d"/></linearGradient><linearGradient id="T78" gradientUnits="userSpaceOnUse" x1="835" x2="948" y1="0" y2="0"><stop offset="0" stop-color="#005aff"/><stop offset="0.018" stop-color="#0059ff"/><stop offset="0.345" stop-color="#7b43ff"/><stop offset="0.655" stop-color="#fd28ff"/><stop offset="0.814" stop-color="#ff11c5"/><stop offset="0.965" stop-color="#ff009e"/><stop offset="1" stop-color="#ff0097"/></linearGradient><linearGradient id="T79" gradientUnits="userSpaceOnUse" x1="835" x2="943" y1="0" y2="0"><stop offset="0" stop-color="#0055ff"/><stop offset="0.019" stop-color="#0254ff"/><stop offset="0.38" stop-color="#833dff"/><stop offset="0.694" stop-color="#ff21fe"/><stop offset="0.833" stop-color="#ff0ecc"/><stop offset="0.963" stop-color="#ff00a9"/><stop offset="1" stop-color="#ff00a1"/></linearGradient><linearGradient id="T80" gradientUnits="userSpaceOnUse" x1="834" x2="938" y1="0" y2="0"><stop offset="0" stop-color="#0051ff"/><stop offset="0.019" stop-color="#0250ff"/><stop offset="0.404" stop-color="#8437ff"/><stop offset="0.731" stop-color="#ff1bfe"/><stop offset="0.856" stop-color="#ff0bd2"/><stop offset="0.952" stop-color="#ff01b8"/><stop offset="1" stop-color="#ff00ad"/></linearGradient><linearGradient id="T81" gradientUnits="userSpaceOnUse" x1="833" x2="932" y1="0" y2="0"><stop offset="0" stop-color="#004dff"/><stop offset="0.02" stop-color="#014cff"/><stop offset="0.424" stop-color="#8233ff"/><stop offset="0.778" stop-color="#ff16ff"/><stop offset="0.879" stop-color="#ff09dc"/><stop offset="1" stop-color="#ff00bb"/></linearGradient><linearGradient id="T82" gradientUnits="userSpaceOnUse" x1="832" x2="927" y1="0" y2="0"><stop offset="0" stop-color="#0049ff"/><stop offset="0.021" stop-color="#0048ff"/><stop offset="0.442" stop-color="#7f2fff"/><stop offset="0.821" stop-color="#ff10ff"/><stop offset="0.958" stop-color="#ff00d4"/><stop offset="1" stop-color="#ff00c9"/></linearGradient><linearGradient id="T83" gradientUnits="userSpaceOnUse" x1="831" x2="922" y1="0" y2="0"><stop offset="0" stop-color="#0046ff"/><stop offset="0.033" stop-color="#0344ff"/><stop offset="0.462" stop-color="#7d2bff"/><stop offset="0.868" stop-color="#fe0aff"/><stop offset="0.956" stop-color="#ff00e4"/><stop offset="1" stop-color="#ff00d8"/></linearGradient><linearGradient id="T84" gradientUnits="userSpaceOnUse" x1="831" x2="917" y1="0" y2="0"><stop offset="0" stop-color="#0041ff"/><stop offset="0.023" stop-color="#0240ff"/><stop offset="0.523" stop-color="#8824ff"/><stop offset="0.919" stop-color="#fe04ff"/><stop offset="1" stop-color="#ff00e8"/></linearGradient><linearGradient id="T85" gradientUnits="userSpaceOnUse" x1="830" x2="912" y1="0" y2="0"><stop offset="0" stop-color="#003eff"/><stop offset="0.024" stop-color="#013cff"/><stop offset="0.488" stop-color="#7623ff"/><stop offset="0.744" stop-color="#ba12ff"/><stop offset="0.976" stop-color="#fd00ff"/><stop offset="1" stop-color="#ff00f9"/></linearGradient><linearGradient id="T86" gradientUnits="userSpaceOnUse" x1="829" x2="907" y1="0" y2="0"><stop offset="0" stop-color="#003aff"/><stop offset="0.026" stop-color="#0039ff"/><stop offset="0.551" stop-color="#7d1dff"/><stop offset="0.949" stop-color="#e300ff"/><stop offset="1" stop-color="#f200ff"/></linearGradient><linearGradient id="T87" gradientUnits="userSpaceOnUse" x1="828" x2="901" y1="0" y2="0"><stop offset="0" stop-color="#0036ff"/><stop offset="0.027" stop-color="#0035ff"/><stop offset="0.534" stop-color="#6f1cff"/><stop offset="1" stop-color="#dc00ff"/></linearGradient><linearGradient id="T88" gradientUnits="userSpaceOnUse" x1="827" x2="896" y1="0" y2="0"><stop offset="0" stop-color="#0033ff"/><stop offset="0.043" stop-color="#0331ff"/><stop offset="0.652" stop-color="#7f14ff"/><stop offset="1" stop-color="#cb00ff"/></linearGradient><linearGradient id="T89" gradientUnits="userSpaceOnUse" x1="827" x2="891" y1="0" y2="0"><stop offset="0" stop-color="#002fff"/><stop offset="0.031" stop-color="#022eff"/><stop offset="0.562" stop-color="#6516ff"/><stop offset="1" stop-color="#bb00ff"/></linearGradient><linearGradient id="T90" gradientUnits="userSpaceOnUse" x1="826" x2="886" y1="0" y2="0"><stop offset="0" stop-color="#002bff"/><stop offset="0.033" stop-color="#012aff"/><stop offset="1" stop-color="#ab00ff"/></linearGradient><linearGradient id="T91" gradientUnits="userSpaceOnUse" x1="825" x2="881" y1="0" y2="0"><stop offset="0" stop-color="#0028ff"/><stop offset="0.036" stop-color="#0027ff"/><stop offset="1" stop-color="#9d00ff"/></linearGradient><linearGradient id="T92" gradientUnits="userSpaceOnUse" x1="824" x2="876" y1="0" y2="0"><stop offset="0" stop-color="#0025ff"/><stop offset="0.038" stop-color="#0023ff"/><stop offset="1" stop-color="#8e00ff"/></linearGradient><linearGradient id="T93" gradientUnits="userSpaceOnUse" x1="823" x2="871" y1="0" y2="0"><stop offset="0" stop-color="#0021ff"/><stop offset="0.062" stop-color="#0220ff"/><stop offset="1" stop-color="#8000ff"/></linearGradient><linearGradient id="T94" gradientUnits="userSpaceOnUse" x1="823" x2="865" y1="0" y2="0"><stop offset="0" stop-color="#001eff"/><stop offset="0.048" stop-color="#021cff"/><stop offset="1" stop-color="#7000ff"/></linearGradient><linearGradient id="T95" gradientUnits="userSpaceOnUse" x1="822" x2="860" y1="0" y2="0"><stop offset="0" stop-color="#001aff"/><stop offset="0.053" stop-color="#0119ff"/><stop offset="1" stop-color="#6400ff"/></linearGradient><linearGradient id="T96" gradientUnits="userSpaceOnUse" x1="821" x2="855" y1="0" y2="0"><stop offset="0" stop-color="#0017ff"/><stop offset="0.059" stop-color="#0016ff"/><stop offset="1" stop-color="#5700ff"/></linearGradient><linearGradient id="T97" gradientUnits="userSpaceOnUse" x1="820" x2="850" y1="0" y2="0"><stop offset="0" stop-color="#0014ff"/><stop offset="0.067" stop-color="#0013ff"/><stop offset="1" stop-color="#4b00ff"/></linearGradient><linearGradient id="T98" gradientUnits="userSpaceOnUse" x1="820" x2="845" y1="0" y2="0"><stop offset="0" stop-color="#0010ff"/><stop offset="0.08" stop-color="#020fff"/><stop offset="1" stop-color="#3f00ff"/></linearGradient><linearGradient id="T99" gradientUnits="userSpaceOnUse" x1="819" x2="840" y1="0" y2="0"><stop offset="0" stop-color="#000dff"/><stop offset="0.095" stop-color="#010cff"/><stop offset="1" stop-color="#3400ff"/></linearGradient><linearGradient id="T100" gradientUnits="userSpaceOnUse" x1="818" x2="834" y1="0" y2="0"><stop offset="0" stop-color="#000aff"/><stop offset="0.125" stop-color="#0109ff"/><stop offset="1" stop-color="#2600ff"/></linearGradient><linearGradient id="T101" gradientUnits="userSpaceOnUse" x1="817" x2="829" y1="0" y2="0"><stop offset="0" stop-color="#0007ff"/><stop offset="0.167" stop-color="#0005ff"/><stop offset="1" stop-color="#1b00ff"/></linearGradient><linearGradient id="T102" gradientUnits="userSpaceOnUse" x1="816" x2="824" y1="0" y2="0"><stop offset="0" stop-color="#0004ff"/><stop offset="0.25" stop-color="#0002ff"/><stop offset="1" stop-color="#1000ff"/></linearGradient>
<clipPath id="cl"><path d="M816.6 347.9 L812.6 345.1 L809.1 342.0 L805.8 338.6 L802.6 335.1 L799.8 331.4 L797.2 327.6 L794.8 323.8 L792.5 319.9 L790.3 316.0 L788.0 312.1 L785.9 308.1 L783.8 304.1 L781.8 300.1 L779.8 296.1 L777.8 292.1 L775.9 288.1 L774.1 284.0 L772.4 280.0 L770.7 275.9 L769.1 271.8 L767.5 267.7 L766.0 263.6 L764.6 259.5 L763.2 255.3 L761.8 251.2 L760.5 247.0 L759.3 242.9 L757.9 238.7 L756.7 234.5 L755.5 230.3 L754.3 226.1 L753.1 222.0 L752.0 217.8 L750.8 213.6 L749.8 209.4 L748.7 205.2 L747.8 201.0 L747.0 196.8 L746.3 192.6 L745.6 188.3 L745.0 184.1 L744.4 179.9 L743.8 175.7 L743.3 171.4 L742.9 167.2 L742.4 163.0 L741.8 158.7 L741.2 154.5 L740.6 150.2 L740.1 146.0 L739.6 141.7 L739.2 137.5 L738.9 133.2 L738.5 128.9 L738.3 124.7 L738.1 120.4 L738.0 116.1 L738.0 111.9 L738.0 107.6 L738.2 103.4 L738.4 99.2 L738.8 94.9 L739.2 90.7 L739.8 86.4 L740.5 82.2 L741.3 78.0 L742.2 73.7 L743.3 69.5 L744.5 65.2 L745.9 61.0 L747.7 56.9 L749.9 52.9 L752.7 49.1 L756.2 45.5 L760.4 42.3 L765.4 39.5 L770.8 37.4 L776.6 36.2 L782.6 36.1 L788.7 36.8 L794.7 38.1 L800.6 39.7 L806.2 41.5 L811.6 43.4 L817.0 45.4 L822.2 47.5 L827.5 49.7 L832.6 51.9 L837.7 54.3 L842.8 56.7 L847.8 59.2 L852.7 61.7 L857.6 64.3 L862.4 66.9 L867.1 69.6 L871.9 72.3 L876.5 75.0 L881.1 77.8 L885.6 80.6 L890.1 83.4 L894.6 86.2 L899.1 89.1 L903.5 92.0 L907.9 94.9 L912.3 97.8 L916.7 100.7 L921.1 103.7 L925.5 106.6 L929.8 109.6 L934.2 112.5 L938.5 115.5 L942.8 118.4 L947.1 121.4 L951.4 124.4 L955.7 127.4 L960.0 130.4 L964.3 133.4 L968.6 136.4 L972.9 139.4 L977.2 142.4 L981.5 145.4 L985.8 148.4 L990.0 151.4 L994.3 154.4 L998.6 157.4 L1002.9 160.4 L1007.1 163.4 L1011.4 166.4 L1015.7 169.4 L1019.9 172.4 L1024.2 175.4 L1028.5 178.4 L1032.7 181.5 L1037.0 184.5 L1041.2 187.5 L1045.4 190.5 L1049.7 193.5 L1053.9 196.5 L1058.1 199.5 L1062.3 202.5 L1066.6 205.5 L1070.8 208.5 L1075.0 211.5 L1079.3 214.5 L1083.5 217.5 L1087.7 220.6 L1092.0 223.5 L1096.2 226.5 L1100.5 229.5 L1104.7 232.6 L1108.9 235.6 L1113.1 238.6 L1117.2 241.6 L1121.5 244.6 L1125.7 247.6 L1130.0 250.6 L1134.3 253.6 L1121.6 257.9 L1109.0 262.2 L1096.3 266.5 L1083.7 270.9 L1071.1 275.2 L1058.4 279.5 L1045.8 283.8 L1033.1 288.1 L1020.5 292.4 L1007.8 296.6 L995.2 300.9 L982.5 305.2 L969.9 309.5 L957.2 313.7 L944.5 317.9 L931.9 322.1 L919.2 326.3 L906.5 330.5 L893.8 334.6 L881.1 338.7 L868.4 342.8 L855.6 346.8 L842.9 350.8 L830.0 354.4 L826.3 353.4 L822.3 351.5Z"/></clipPath>
<clipPath id="ct"><path d="M1083.0 229.0 L899.1 126.1 L817.9 331.8Z"/></clipPath></defs>
<g clip-path="url(#cl)" shape-rendering="crispEdges"><rect x="768" y="36" width="28" height="2.3" fill="url(#L0)"/><rect x="763" y="38" width="40" height="2.3" fill="url(#L1)"/><rect x="759" y="40" width="50" height="2.3" fill="url(#L2)"/><rect x="757" y="42" width="58" height="2.3" fill="url(#L3)"/><rect x="754" y="44" width="66" height="2.3" fill="url(#L4)"/><rect x="752" y="46" width="73" height="2.3" fill="url(#L5)"/><rect x="751" y="48" width="79" height="2.3" fill="url(#L6)"/><rect x="749" y="50" width="85" height="2.3" fill="url(#L7)"/><rect x="748" y="52" width="91" height="2.3" fill="url(#L8)"/><rect x="747" y="54" width="96" height="2.3" fill="url(#L9)"/><rect x="746" y="56" width="101" height="2.3" fill="url(#L10)"/><rect x="745" y="58" width="106" height="2.3" fill="url(#L11)"/><rect x="744" y="60" width="111" height="2.3" fill="url(#L12)"/><rect x="743" y="62" width="116" height="2.3" fill="url(#L13)"/><rect x="743" y="64" width="119" height="2.3" fill="url(#L14)"/><rect x="742" y="66" width="124" height="2.3" fill="url(#L15)"/><rect x="742" y="68" width="127" height="2.3" fill="url(#L16)"/><rect x="741" y="70" width="132" height="2.3" fill="url(#L17)"/><rect x="741" y="72" width="135" height="2.3" fill="url(#L18)"/><rect x="740" y="74" width="140" height="2.3" fill="url(#L19)"/><rect x="740" y="76" width="143" height="2.3" fill="url(#L20)"/><rect x="739" y="78" width="147" height="2.3" fill="url(#L21)"/><rect x="739" y="80" width="150" height="2.3" fill="url(#L22)"/><rect x="739" y="82" width="154" height="2.3" fill="url(#L23)"/><rect x="738" y="84" width="158" height="2.3" fill="url(#L24)"/><rect x="738" y="86" width="161" height="2.3" fill="url(#L25)"/><rect x="738" y="88" width="164" height="2.3" fill="url(#L26)"/><rect x="738" y="90" width="167" height="2.3" fill="url(#L27)"/><rect x="737" y="92" width="171" height="2.3" fill="url(#L28)"/><rect x="737" y="94" width="174" height="2.3" fill="url(#L29)"/><rect x="737" y="96" width="177" height="2.3" fill="url(#L30)"/><rect x="737" y="98" width="180" height="2.3" fill="url(#L31)"/><rect x="737" y="100" width="183" height="2.3" fill="url(#L32)"/><rect x="737" y="102" width="186" height="2.3" fill="url(#L33)"/><rect x="737" y="104" width="189" height="2.3" fill="url(#L34)"/><rect x="737" y="106" width="192" height="2.3" fill="url(#L35)"/><rect x="737" y="108" width="195" height="2.3" fill="url(#L36)"/><rect x="736" y="110" width="199" height="2.3" fill="url(#L37)"/><rect x="736" y="112" width="202" height="2.3" fill="url(#L38)"/><rect x="737" y="114" width="204" height="2.3" fill="url(#L39)"/><rect x="737" y="116" width="207" height="2.3" fill="url(#L40)"/><rect x="737" y="118" width="210" height="2.3" fill="url(#L41)"/><rect x="737" y="120" width="212" height="2.3" fill="url(#L42)"/><rect x="737" y="122" width="215" height="2.3" fill="url(#L43)"/><rect x="737" y="124" width="218" height="2.3" fill="url(#L44)"/><rect x="737" y="126" width="221" height="2.3" fill="url(#L45)"/><rect x="737" y="128" width="224" height="2.3" fill="url(#L46)"/><rect x="737" y="130" width="227" height="2.3" fill="url(#L47)"/><rect x="737" y="132" width="230" height="2.3" fill="url(#L48)"/><rect x="737" y="134" width="233" height="2.3" fill="url(#L49)"/><rect x="738" y="136" width="234" height="2.3" fill="url(#L50)"/><rect x="738" y="138" width="237" height="2.3" fill="url(#L51)"/><rect x="738" y="140" width="240" height="2.3" fill="url(#L52)"/><rect x="738" y="142" width="243" height="2.3" fill="url(#L53)"/><rect x="738" y="144" width="246" height="2.3" fill="url(#L54)"/><rect x="739" y="146" width="248" height="2.3" fill="url(#L55)"/><rect x="739" y="148" width="251" height="2.3" fill="url(#L56)"/><rect x="739" y="150" width="253" height="2.3" fill="url(#L57)"/><rect x="739" y="152" width="256" height="2.3" fill="url(#L58)"/><rect x="740" y="154" width="258" height="2.3" fill="url(#L59)"/><rect x="740" y="156" width="261" height="2.3" fill="url(#L60)"/><rect x="740" y="158" width="264" height="2.3" fill="url(#L61)"/><rect x="740" y="160" width="267" height="2.3" fill="url(#L62)"/><rect x="741" y="162" width="268" height="2.3" fill="url(#L63)"/><rect x="741" y="164" width="271" height="2.3" fill="url(#L64)"/><rect x="741" y="166" width="274" height="2.3" fill="url(#L65)"/><rect x="741" y="168" width="277" height="2.3" fill="url(#L66)"/><rect x="742" y="170" width="279" height="2.3" fill="url(#L67)"/><rect x="742" y="172" width="282" height="2.3" fill="url(#L68)"/><rect x="742" y="174" width="284" height="2.3" fill="url(#L69)"/><rect x="742" y="176" width="287" height="2.3" fill="url(#L70)"/><rect x="743" y="178" width="289" height="2.3" fill="url(#L71)"/><rect x="743" y="180" width="292" height="2.3" fill="url(#L72)"/><rect x="743" y="182" width="295" height="2.3" fill="url(#L73)"/><rect x="743" y="184" width="298" height="2.3" fill="url(#L74)"/><rect x="744" y="186" width="299" height="2.3" fill="url(#L75)"/><rect x="744" y="188" width="302" height="2.3" fill="url(#L76)"/><rect x="744" y="190" width="305" height="2.3" fill="url(#L77)"/><rect x="745" y="192" width="307" height="2.3" fill="url(#L78)"/><rect x="745" y="194" width="310" height="2.3" fill="url(#L79)"/><rect x="745" y="196" width="313" height="2.3" fill="url(#L80)"/><rect x="746" y="198" width="314" height="2.3" fill="url(#L81)"/><rect x="746" y="200" width="317" height="2.3" fill="url(#L82)"/><rect x="746" y="202" width="320" height="2.3" fill="url(#L83)"/><rect x="747" y="204" width="322" height="2.3" fill="url(#L84)"/><rect x="747" y="206" width="325" height="2.3" fill="url(#L85)"/><rect x="748" y="208" width="326" height="2.3" fill="url(#L86)"/><rect x="748" y="210" width="329" height="2.3" fill="url(#L87)"/><rect x="749" y="212" width="331" height="2.3" fill="url(#L88)"/><rect x="749" y="214" width="334" height="2.3" fill="url(#L89)"/><rect x="750" y="216" width="336" height="2.3" fill="url(#L90)"/><rect x="751" y="218" width="337" height="2.3" fill="url(#L91)"/><rect x="751" y="220" width="340" height="2.3" fill="url(#L92)"/><rect x="752" y="222" width="342" height="2.3" fill="url(#L93)"/><rect x="752" y="224" width="345" height="2.3" fill="url(#L94)"/><rect x="753" y="226" width="347" height="2.3" fill="url(#L95)"/><rect x="753" y="228" width="350" height="2.3" fill="url(#L96)"/><rect x="754" y="230" width="351" height="2.3" fill="url(#L97)"/><rect x="754" y="232" width="354" height="2.3" fill="url(#L98)"/><rect x="755" y="234" width="356" height="2.3" fill="url(#L99)"/><rect x="756" y="236" width="358" height="2.3" fill="url(#L100)"/><rect x="756" y="238" width="361" height="2.3" fill="url(#L101)"/><rect x="757" y="240" width="362" height="2.3" fill="url(#L102)"/><rect x="757" y="242" width="365" height="2.3" fill="url(#L103)"/><rect x="758" y="244" width="367" height="2.3" fill="url(#L104)"/><rect x="759" y="246" width="369" height="2.3" fill="url(#L105)"/><rect x="759" y="248" width="372" height="2.3" fill="url(#L106)"/><rect x="760" y="250" width="373" height="2.3" fill="url(#L107)"/><rect x="761" y="252" width="375" height="2.3" fill="url(#L108)"/><rect x="761" y="254" width="374" height="2.3" fill="url(#L109)"/><rect x="762" y="256" width="367" height="2.3" fill="url(#L110)"/><rect x="763" y="258" width="360" height="2.3" fill="url(#L111)"/><rect x="763" y="260" width="354" height="2.3" fill="url(#L112)"/><rect x="764" y="262" width="347" height="2.3" fill="url(#L113)"/><rect x="765" y="264" width="340" height="2.3" fill="url(#L114)"/><rect x="765" y="266" width="334" height="2.3" fill="url(#L115)"/><rect x="766" y="268" width="328" height="2.3" fill="url(#L116)"/><rect x="767" y="270" width="321" height="2.3" fill="url(#L117)"/><rect x="768" y="272" width="314" height="2.3" fill="url(#L118)"/><rect x="768" y="274" width="308" height="2.3" fill="url(#L119)"/><rect x="769" y="276" width="301" height="2.3" fill="url(#L120)"/><rect x="770" y="278" width="294" height="2.3" fill="url(#L121)"/><rect x="771" y="280" width="287" height="2.3" fill="url(#L122)"/><rect x="772" y="282" width="280" height="2.3" fill="url(#L123)"/><rect x="773" y="284" width="274" height="2.3" fill="url(#L124)"/><rect x="774" y="286" width="267" height="2.3" fill="url(#L125)"/><rect x="774" y="288" width="261" height="2.3" fill="url(#L126)"/><rect x="775" y="290" width="254" height="2.3" fill="url(#L127)"/><rect x="776" y="292" width="247" height="2.3" fill="url(#L128)"/><rect x="777" y="294" width="240" height="2.3" fill="url(#L129)"/><rect x="778" y="296" width="233" height="2.3" fill="url(#L130)"/><rect x="779" y="298" width="226" height="2.3" fill="url(#L131)"/><rect x="780" y="300" width="219" height="2.3" fill="url(#L132)"/><rect x="781" y="302" width="212" height="2.3" fill="url(#L133)"/><rect x="782" y="304" width="206" height="2.3" fill="url(#L134)"/><rect x="783" y="306" width="199" height="2.3" fill="url(#L135)"/><rect x="784" y="308" width="192" height="2.3" fill="url(#L136)"/><rect x="785" y="310" width="185" height="2.3" fill="url(#L137)"/><rect x="787" y="312" width="177" height="2.3" fill="url(#L138)"/><rect x="788" y="314" width="170" height="2.3" fill="url(#L139)"/><rect x="789" y="316" width="163" height="2.3" fill="url(#L140)"/><rect x="790" y="318" width="156" height="2.3" fill="url(#L141)"/><rect x="791" y="320" width="149" height="2.3" fill="url(#L142)"/><rect x="792" y="322" width="142" height="2.3" fill="url(#L143)"/><rect x="793" y="324" width="135" height="2.3" fill="url(#L144)"/><rect x="795" y="326" width="127" height="2.3" fill="url(#L145)"/><rect x="796" y="328" width="120" height="2.3" fill="url(#L146)"/><rect x="797" y="330" width="113" height="2.3" fill="url(#L147)"/><rect x="799" y="332" width="104" height="2.3" fill="url(#L148)"/><rect x="800" y="334" width="97" height="2.3" fill="url(#L149)"/><rect x="802" y="336" width="89" height="2.3" fill="url(#L150)"/><rect x="804" y="338" width="81" height="2.3" fill="url(#L151)"/><rect x="806" y="340" width="73" height="2.3" fill="url(#L152)"/><rect x="808" y="342" width="64" height="2.3" fill="url(#L153)"/><rect x="810" y="344" width="56" height="2.3" fill="url(#L154)"/><rect x="812" y="346" width="48" height="2.3" fill="url(#L155)"/><rect x="815" y="348" width="38" height="2.3" fill="url(#L156)"/><rect x="818" y="350" width="29" height="2.3" fill="url(#L157)"/><rect x="822" y="352" width="18" height="2.3" fill="url(#L158)"/><rect x="827" y="354" width="6" height="1.3" fill="url(#L159)"/></g>
<g clip-path="url(#ct)" shape-rendering="crispEdges"><rect x="897" y="126" width="7" height="2.3" fill="url(#T0)"/><rect x="896" y="128" width="12" height="2.3" fill="url(#T1)"/><rect x="895" y="130" width="16" height="2.3" fill="url(#T2)"/><rect x="894" y="132" width="21" height="2.3" fill="url(#T3)"/><rect x="894" y="134" width="24" height="2.3" fill="url(#T4)"/><rect x="893" y="136" width="29" height="2.3" fill="url(#T5)"/><rect x="892" y="138" width="33" height="2.3" fill="url(#T6)"/><rect x="891" y="140" width="38" height="2.3" fill="url(#T7)"/><rect x="891" y="142" width="42" height="2.3" fill="url(#T8)"/><rect x="890" y="144" width="46" height="2.3" fill="url(#T9)"/><rect x="889" y="146" width="51" height="2.3" fill="url(#T10)"/><rect x="888" y="148" width="55" height="2.3" fill="url(#T11)"/><rect x="887" y="150" width="60" height="2.3" fill="url(#T12)"/><rect x="887" y="152" width="63" height="2.3" fill="url(#T13)"/><rect x="886" y="154" width="68" height="2.3" fill="url(#T14)"/><rect x="885" y="156" width="73" height="2.3" fill="url(#T15)"/><rect x="884" y="158" width="77" height="2.3" fill="url(#T16)"/><rect x="883" y="160" width="82" height="2.3" fill="url(#T17)"/><rect x="883" y="162" width="85" height="2.3" fill="url(#T18)"/><rect x="882" y="164" width="90" height="2.3" fill="url(#T19)"/><rect x="881" y="166" width="95" height="2.3" fill="url(#T20)"/><rect x="880" y="168" width="99" height="2.3" fill="url(#T21)"/><rect x="879" y="170" width="104" height="2.3" fill="url(#T22)"/><rect x="879" y="172" width="107" height="2.3" fill="url(#T23)"/><rect x="878" y="174" width="112" height="2.3" fill="url(#T24)"/><rect x="877" y="176" width="116" height="2.3" fill="url(#T25)"/><rect x="876" y="178" width="121" height="2.3" fill="url(#T26)"/><rect x="876" y="180" width="125" height="2.3" fill="url(#T27)"/><rect x="875" y="182" width="129" height="2.3" fill="url(#T28)"/><rect x="874" y="184" width="134" height="2.3" fill="url(#T29)"/><rect x="873" y="186" width="138" height="2.3" fill="url(#T30)"/><rect x="872" y="188" width="143" height="2.3" fill="url(#T31)"/><rect x="872" y="190" width="146" height="2.3" fill="url(#T32)"/><rect x="871" y="192" width="151" height="2.3" fill="url(#T33)"/><rect x="870" y="194" width="156" height="2.3" fill="url(#T34)"/><rect x="869" y="196" width="160" height="2.3" fill="url(#T35)"/><rect x="868" y="198" width="165" height="2.3" fill="url(#T36)"/><rect x="868" y="200" width="168" height="2.3" fill="url(#T37)"/><rect x="867" y="202" width="173" height="2.3" fill="url(#T38)"/><rect x="866" y="204" width="177" height="2.3" fill="url(#T39)"/><rect x="865" y="206" width="182" height="2.3" fill="url(#T40)"/><rect x="865" y="208" width="186" height="2.3" fill="url(#T41)"/><rect x="864" y="210" width="190" height="2.3" fill="url(#T42)"/><rect x="863" y="212" width="195" height="2.3" fill="url(#T43)"/><rect x="862" y="214" width="199" height="2.3" fill="url(#T44)"/><rect x="861" y="216" width="204" height="2.3" fill="url(#T45)"/><rect x="861" y="218" width="208" height="2.3" fill="url(#T46)"/><rect x="860" y="220" width="212" height="2.3" fill="url(#T47)"/><rect x="859" y="222" width="217" height="2.3" fill="url(#T48)"/><rect x="858" y="224" width="221" height="2.3" fill="url(#T49)"/><rect x="857" y="226" width="226" height="2.3" fill="url(#T50)"/><rect x="857" y="228" width="228" height="2.3" fill="url(#T51)"/><rect x="856" y="230" width="226" height="2.3" fill="url(#T52)"/><rect x="855" y="232" width="222" height="2.3" fill="url(#T53)"/><rect x="854" y="234" width="218" height="2.3" fill="url(#T54)"/><rect x="853" y="236" width="213" height="2.3" fill="url(#T55)"/><rect x="853" y="238" width="208" height="2.3" fill="url(#T56)"/><rect x="852" y="240" width="204" height="2.3" fill="url(#T57)"/><rect x="851" y="242" width="200" height="2.3" fill="url(#T58)"/><rect x="850" y="244" width="196" height="2.3" fill="url(#T59)"/><rect x="850" y="246" width="191" height="2.3" fill="url(#T60)"/><rect x="849" y="248" width="187" height="2.3" fill="url(#T61)"/><rect x="848" y="250" width="182" height="2.3" fill="url(#T62)"/><rect x="847" y="252" width="178" height="2.3" fill="url(#T63)"/><rect x="846" y="254" width="174" height="2.3" fill="url(#T64)"/><rect x="846" y="256" width="169" height="2.3" fill="url(#T65)"/><rect x="845" y="258" width="165" height="2.3" fill="url(#T66)"/><rect x="844" y="260" width="161" height="2.3" fill="url(#T67)"/><rect x="843" y="262" width="156" height="2.3" fill="url(#T68)"/><rect x="842" y="264" width="152" height="2.3" fill="url(#T69)"/><rect x="842" y="266" width="147" height="2.3" fill="url(#T70)"/><rect x="841" y="268" width="143" height="2.3" fill="url(#T71)"/><rect x="840" y="270" width="139" height="2.3" fill="url(#T72)"/><rect x="839" y="272" width="135" height="2.3" fill="url(#T73)"/><rect x="838" y="274" width="131" height="2.3" fill="url(#T74)"/><rect x="838" y="276" width="125" height="2.3" fill="url(#T75)"/><rect x="837" y="278" width="121" height="2.3" fill="url(#T76)"/><rect x="836" y="280" width="117" height="2.3" fill="url(#T77)"/><rect x="835" y="282" width="113" height="2.3" fill="url(#T78)"/><rect x="835" y="284" width="108" height="2.3" fill="url(#T79)"/><rect x="834" y="286" width="104" height="2.3" fill="url(#T80)"/><rect x="833" y="288" width="99" height="2.3" fill="url(#T81)"/><rect x="832" y="290" width="95" height="2.3" fill="url(#T82)"/><rect x="831" y="292" width="91" height="2.3" fill="url(#T83)"/><rect x="831" y="294" width="86" height="2.3" fill="url(#T84)"/><rect x="830" y="296" width="82" height="2.3" fill="url(#T85)"/><rect x="829" y="298" width="78" height="2.3" fill="url(#T86)"/><rect x="828" y="300" width="73" height="2.3" fill="url(#T87)"/><rect x="827" y="302" width="69" height="2.3" fill="url(#T88)"/><rect x="827" y="304" width="64" height="2.3" fill="url(#T89)"/><rect x="826" y="306" width="60" height="2.3" fill="url(#T90)"/><rect x="825" y="308" width="56" height="2.3" fill="url(#T91)"/><rect x="824" y="310" width="52" height="2.3" fill="url(#T92)"/><rect x="823" y="312" width="48" height="2.3" fill="url(#T93)"/><rect x="823" y="314" width="42" height="2.3" fill="url(#T94)"/><rect x="822" y="316" width="38" height="2.3" fill="url(#T95)"/><rect x="821" y="318" width="34" height="2.3" fill="url(#T96)"/><rect x="820" y="320" width="30" height="2.3" fill="url(#T97)"/><rect x="820" y="322" width="25" height="2.3" fill="url(#T98)"/><rect x="819" y="324" width="21" height="2.3" fill="url(#T99)"/><rect x="818" y="326" width="16" height="2.3" fill="url(#T100)"/><rect x="817" y="328" width="12" height="2.3" fill="url(#T101)"/><rect x="816" y="330" width="8" height="2.3" fill="url(#T102)"/></g>
<defs><linearGradient id="I0" gradientUnits="userSpaceOnUse" x1="1055" x2="1188" y1="0" y2="0"><stop offset="0" stop-color="#88ffcf"/><stop offset="0.797" stop-color="#feffca"/><stop offset="1" stop-color="#ffe2b1"/></linearGradient><linearGradient id="I1" gradientUnits="userSpaceOnUse" x1="1055" x2="1188" y1="0" y2="0"><stop offset="0" stop-color="#89ffd1"/><stop offset="0.782" stop-color="#feffcc"/><stop offset="1" stop-color="#ffe0b2"/></linearGradient><linearGradient id="I2" gradientUnits="userSpaceOnUse" x1="1055" x2="1188" y1="0" y2="0"><stop offset="0" stop-color="#8bffd3"/><stop offset="0.774" stop-color="#ffffce"/><stop offset="1" stop-color="#ffdeb2"/></linearGradient><linearGradient id="I3" gradientUnits="userSpaceOnUse" x1="1055" x2="1188" y1="0" y2="0"><stop offset="0" stop-color="#8cffd5"/><stop offset="0.759" stop-color="#ffffd0"/><stop offset="1" stop-color="#ffdcb2"/></linearGradient><linearGradient id="I4" gradientUnits="userSpaceOnUse" x1="1055" x2="1188" y1="0" y2="0"><stop offset="0" stop-color="#8dffd7"/><stop offset="0.744" stop-color="#feffd2"/><stop offset="1" stop-color="#ffdab3"/></linearGradient><linearGradient id="I5" gradientUnits="userSpaceOnUse" x1="1055" x2="1188" y1="0" y2="0"><stop offset="0" stop-color="#8fffd9"/><stop offset="0.737" stop-color="#ffffd4"/><stop offset="1" stop-color="#ffd9b3"/></linearGradient><linearGradient id="I6" gradientUnits="userSpaceOnUse" x1="1055" x2="1188" y1="0" y2="0"><stop offset="0" stop-color="#90ffdb"/><stop offset="0.722" stop-color="#ffffd7"/><stop offset="1" stop-color="#ffd7b4"/></linearGradient><linearGradient id="I7" gradientUnits="userSpaceOnUse" x1="1055" x2="1188" y1="0" y2="0"><stop offset="0" stop-color="#92ffdd"/><stop offset="0.707" stop-color="#feffd9"/><stop offset="1" stop-color="#ffd5b4"/></linearGradient><linearGradient id="I8" gradientUnits="userSpaceOnUse" x1="1055" x2="1188" y1="0" y2="0"><stop offset="0" stop-color="#93ffde"/><stop offset="0.699" stop-color="#ffffdb"/><stop offset="1" stop-color="#ffd3b4"/></linearGradient><linearGradient id="I9" gradientUnits="userSpaceOnUse" x1="1055" x2="1188" y1="0" y2="0"><stop offset="0" stop-color="#94ffe0"/><stop offset="0.684" stop-color="#ffffdd"/><stop offset="1" stop-color="#ffd2b5"/></linearGradient><linearGradient id="I10" gradientUnits="userSpaceOnUse" x1="1055" x2="1188" y1="0" y2="0"><stop offset="0" stop-color="#96ffe2"/><stop offset="0.669" stop-color="#ffffe0"/><stop offset="1" stop-color="#ffd0b5"/></linearGradient><linearGradient id="I11" gradientUnits="userSpaceOnUse" x1="1055" x2="1188" y1="0" y2="0"><stop offset="0" stop-color="#97ffe4"/><stop offset="0.662" stop-color="#ffffe1"/><stop offset="1" stop-color="#ffceb5"/></linearGradient><linearGradient id="I12" gradientUnits="userSpaceOnUse" x1="1055" x2="1188" y1="0" y2="0"><stop offset="0" stop-color="#99ffe6"/><stop offset="0.647" stop-color="#ffffe4"/><stop offset="1" stop-color="#ffcdb6"/></linearGradient><linearGradient id="I13" gradientUnits="userSpaceOnUse" x1="1055" x2="1188" y1="0" y2="0"><stop offset="0" stop-color="#9affe8"/><stop offset="0.632" stop-color="#ffffe6"/><stop offset="1" stop-color="#ffcbb6"/></linearGradient><linearGradient id="I14" gradientUnits="userSpaceOnUse" x1="1055" x2="1188" y1="0" y2="0"><stop offset="0" stop-color="#9cffea"/><stop offset="0.617" stop-color="#feffe9"/><stop offset="1" stop-color="#ffc9b6"/></linearGradient><linearGradient id="I15" gradientUnits="userSpaceOnUse" x1="1055" x2="1188" y1="0" y2="0"><stop offset="0" stop-color="#9effed"/><stop offset="0.609" stop-color="#ffffeb"/><stop offset="1" stop-color="#ffc7b7"/></linearGradient><linearGradient id="I16" gradientUnits="userSpaceOnUse" x1="1055" x2="1188" y1="0" y2="0"><stop offset="0" stop-color="#9fffef"/><stop offset="0.594" stop-color="#ffffed"/><stop offset="1" stop-color="#ffc6b7"/></linearGradient><linearGradient id="I17" gradientUnits="userSpaceOnUse" x1="1055" x2="1188" y1="0" y2="0"><stop offset="0" stop-color="#a1fff1"/><stop offset="0.579" stop-color="#fffff0"/><stop offset="1" stop-color="#ffc4b8"/></linearGradient><linearGradient id="I18" gradientUnits="userSpaceOnUse" x1="1055" x2="1188" y1="0" y2="0"><stop offset="0" stop-color="#a2fff3"/><stop offset="0.571" stop-color="#fffff2"/><stop offset="0.774" stop-color="#ffdfd3"/><stop offset="1" stop-color="#ffc2b8"/></linearGradient><linearGradient id="I19" gradientUnits="userSpaceOnUse" x1="1055" x2="1188" y1="0" y2="0"><stop offset="0" stop-color="#a4fff5"/><stop offset="0.556" stop-color="#fffff4"/><stop offset="0.767" stop-color="#ffded4"/><stop offset="1" stop-color="#ffc1b8"/></linearGradient><linearGradient id="I20" gradientUnits="userSpaceOnUse" x1="1055" x2="1188" y1="0" y2="0"><stop offset="0" stop-color="#a6fff7"/><stop offset="0.541" stop-color="#fffff7"/><stop offset="0.759" stop-color="#ffddd6"/><stop offset="1" stop-color="#ffbfb9"/></linearGradient><linearGradient id="I21" gradientUnits="userSpaceOnUse" x1="1055" x2="1188" y1="0" y2="0"><stop offset="0" stop-color="#a7fff9"/><stop offset="0.534" stop-color="#fffef9"/><stop offset="0.752" stop-color="#ffdcd7"/><stop offset="1" stop-color="#ffbdb9"/></linearGradient><linearGradient id="I22" gradientUnits="userSpaceOnUse" x1="1055" x2="1188" y1="0" y2="0"><stop offset="0" stop-color="#a9fffc"/><stop offset="0.519" stop-color="#fffffb"/><stop offset="0.744" stop-color="#ffdbd8"/><stop offset="1" stop-color="#ffbcb9"/></linearGradient><linearGradient id="I23" gradientUnits="userSpaceOnUse" x1="1055" x2="1188" y1="0" y2="0"><stop offset="0" stop-color="#abfffe"/><stop offset="0.504" stop-color="#fffffe"/><stop offset="0.737" stop-color="#ffdbda"/><stop offset="1" stop-color="#ffbaba"/></linearGradient><linearGradient id="I24" gradientUnits="userSpaceOnUse" x1="1055" x2="1188" y1="0" y2="0"><stop offset="0" stop-color="#abfeff"/><stop offset="0.504" stop-color="#fffdfe"/><stop offset="0.737" stop-color="#ffd9da"/><stop offset="1" stop-color="#ffb9ba"/></linearGradient><linearGradient id="I25" gradientUnits="userSpaceOnUse" x1="1055" x2="1188" y1="0" y2="0"><stop offset="0" stop-color="#acfcff"/><stop offset="0.504" stop-color="#fffbff"/><stop offset="0.737" stop-color="#ffd7da"/><stop offset="1" stop-color="#ffb7ba"/></linearGradient><linearGradient id="I26" gradientUnits="userSpaceOnUse" x1="1055" x2="1188" y1="0" y2="0"><stop offset="0" stop-color="#acf9ff"/><stop offset="0.504" stop-color="#fff8ff"/><stop offset="0.737" stop-color="#ffd5db"/><stop offset="1" stop-color="#ffb5bb"/></linearGradient><linearGradient id="I27" gradientUnits="userSpaceOnUse" x1="1055" x2="1188" y1="0" y2="0"><stop offset="0" stop-color="#acf7ff"/><stop offset="0.504" stop-color="#fff6ff"/><stop offset="0.737" stop-color="#ffd3db"/><stop offset="1" stop-color="#ffb4bb"/></linearGradient><linearGradient id="I28" gradientUnits="userSpaceOnUse" x1="1055" x2="1188" y1="0" y2="0"><stop offset="0" stop-color="#acf5ff"/><stop offset="0.504" stop-color="#fff4ff"/><stop offset="0.737" stop-color="#ffd1db"/><stop offset="1" stop-color="#ffb2bb"/></linearGradient><linearGradient id="I29" gradientUnits="userSpaceOnUse" x1="1055" x2="1188" y1="0" y2="0"><stop offset="0" stop-color="#acf3ff"/><stop offset="0.504" stop-color="#fff1ff"/><stop offset="0.737" stop-color="#ffcfdb"/><stop offset="1" stop-color="#ffb1bc"/></linearGradient><linearGradient id="I30" gradientUnits="userSpaceOnUse" x1="1055" x2="1188" y1="0" y2="0"><stop offset="0" stop-color="#acf0ff"/><stop offset="0.504" stop-color="#ffefff"/><stop offset="0.744" stop-color="#ffccdb"/><stop offset="1" stop-color="#ffafbc"/></linearGradient><linearGradient id="I31" gradientUnits="userSpaceOnUse" x1="1055" x2="1188" y1="0" y2="0"><stop offset="0" stop-color="#adeeff"/><stop offset="0.504" stop-color="#feedff"/><stop offset="0.744" stop-color="#ffcbdb"/><stop offset="1" stop-color="#ffadbc"/></linearGradient><linearGradient id="I32" gradientUnits="userSpaceOnUse" x1="1055" x2="1188" y1="0" y2="0"><stop offset="0" stop-color="#adecff"/><stop offset="0.511" stop-color="#ffeafe"/><stop offset="0.744" stop-color="#ffc9db"/><stop offset="1" stop-color="#ffacbc"/></linearGradient><linearGradient id="I33" gradientUnits="userSpaceOnUse" x1="1055" x2="1188" y1="0" y2="0"><stop offset="0" stop-color="#adeaff"/><stop offset="0.511" stop-color="#ffe8ff"/><stop offset="0.744" stop-color="#ffc7db"/><stop offset="1" stop-color="#ffaabd"/></linearGradient><linearGradient id="I34" gradientUnits="userSpaceOnUse" x1="1055" x2="1188" y1="0" y2="0"><stop offset="0" stop-color="#ade8ff"/><stop offset="0.511" stop-color="#ffe6ff"/><stop offset="0.744" stop-color="#ffc5dc"/><stop offset="1" stop-color="#ffa9bd"/></linearGradient><linearGradient id="I35" gradientUnits="userSpaceOnUse" x1="1055" x2="1188" y1="0" y2="0"><stop offset="0" stop-color="#ade6ff"/><stop offset="0.511" stop-color="#ffe4ff"/><stop offset="0.744" stop-color="#ffc3dc"/><stop offset="1" stop-color="#ffa7bd"/></linearGradient><linearGradient id="I36" gradientUnits="userSpaceOnUse" x1="1055" x2="1188" y1="0" y2="0"><stop offset="0" stop-color="#ade4ff"/><stop offset="0.511" stop-color="#ffe1ff"/><stop offset="0.744" stop-color="#ffc2dc"/><stop offset="1" stop-color="#ffa6be"/></linearGradient><linearGradient id="I37" gradientUnits="userSpaceOnUse" x1="1055" x2="1188" y1="0" y2="0"><stop offset="0" stop-color="#aee2ff"/><stop offset="0.511" stop-color="#ffdfff"/><stop offset="0.744" stop-color="#ffc0dc"/><stop offset="1" stop-color="#ffa4be"/></linearGradient><linearGradient id="I38" gradientUnits="userSpaceOnUse" x1="1055" x2="1188" y1="0" y2="0"><stop offset="0" stop-color="#aee0ff"/><stop offset="0.511" stop-color="#ffddff"/><stop offset="0.752" stop-color="#ffbddc"/><stop offset="1" stop-color="#ffa3be"/></linearGradient><linearGradient id="I39" gradientUnits="userSpaceOnUse" x1="1055" x2="1188" y1="0" y2="0"><stop offset="0" stop-color="#aeddff"/><stop offset="0.519" stop-color="#ffdafe"/><stop offset="0.744" stop-color="#ffbcdd"/><stop offset="1" stop-color="#ffa1bf"/></linearGradient><linearGradient id="I40" gradientUnits="userSpaceOnUse" x1="1055" x2="1188" y1="0" y2="0"><stop offset="0" stop-color="#aedbff"/><stop offset="0.519" stop-color="#ffd8ff"/><stop offset="0.744" stop-color="#ffbadd"/><stop offset="1" stop-color="#ffa0bf"/></linearGradient><linearGradient id="I41" gradientUnits="userSpaceOnUse" x1="1055" x2="1188" y1="0" y2="0"><stop offset="0" stop-color="#aed9ff"/><stop offset="0.519" stop-color="#ffd6ff"/><stop offset="0.744" stop-color="#ffb9dd"/><stop offset="1" stop-color="#ff9ebf"/></linearGradient><linearGradient id="I42" gradientUnits="userSpaceOnUse" x1="1055" x2="1188" y1="0" y2="0"><stop offset="0" stop-color="#aed7ff"/><stop offset="0.519" stop-color="#ffd4ff"/><stop offset="0.744" stop-color="#ffb7de"/><stop offset="1" stop-color="#ff9dc0"/></linearGradient><linearGradient id="I43" gradientUnits="userSpaceOnUse" x1="1055" x2="1188" y1="0" y2="0"><stop offset="0" stop-color="#aed5ff"/><stop offset="0.519" stop-color="#ffd2ff"/><stop offset="0.744" stop-color="#ffb5de"/><stop offset="1" stop-color="#ff9bc0"/></linearGradient><linearGradient id="I44" gradientUnits="userSpaceOnUse" x1="1055" x2="1188" y1="0" y2="0"><stop offset="0" stop-color="#afd3ff"/><stop offset="0.519" stop-color="#ffd0ff"/><stop offset="0.752" stop-color="#ffb3dd"/><stop offset="1" stop-color="#ff9ac0"/></linearGradient><linearGradient id="I45" gradientUnits="userSpaceOnUse" x1="1055" x2="1188" y1="0" y2="0"><stop offset="0" stop-color="#afd1ff"/><stop offset="0.519" stop-color="#ffceff"/><stop offset="0.752" stop-color="#ffb1dd"/><stop offset="1" stop-color="#ff98c0"/></linearGradient><linearGradient id="I46" gradientUnits="userSpaceOnUse" x1="1055" x2="1188" y1="0" y2="0"><stop offset="0" stop-color="#afcfff"/><stop offset="0.519" stop-color="#feccff"/><stop offset="0.752" stop-color="#ffafde"/><stop offset="1" stop-color="#ff97c1"/></linearGradient><linearGradient id="I47" gradientUnits="userSpaceOnUse" x1="1055" x2="1188" y1="0" y2="0"><stop offset="0" stop-color="#afceff"/><stop offset="0.526" stop-color="#ffc9fe"/><stop offset="0.752" stop-color="#ffaede"/><stop offset="1" stop-color="#ff95c1"/></linearGradient><clipPath id="ci"><rect x="1055.4" y="38.8" width="132.0" height="95.60000000000001"/></clipPath></defs><g clip-path="url(#ci)" shape-rendering="crispEdges"><rect x="1055" y="38.8" width="133" height="2.3" fill="url(#I0)"/><rect x="1055" y="40.8" width="133" height="2.3" fill="url(#I1)"/><rect x="1055" y="42.8" width="133" height="2.3" fill="url(#I2)"/><rect x="1055" y="44.8" width="133" height="2.3" fill="url(#I3)"/><rect x="1055" y="46.8" width="133" height="2.3" fill="url(#I4)"/><rect x="1055" y="48.8" width="133" height="2.3" fill="url(#I5)"/><rect x="1055" y="50.8" width="133" height="2.3" fill="url(#I6)"/><rect x="1055" y="52.8" width="133" height="2.3" fill="url(#I7)"/><rect x="1055" y="54.8" width="133" height="2.3" fill="url(#I8)"/><rect x="1055" y="56.8" width="133" height="2.3" fill="url(#I9)"/><rect x="1055" y="58.8" width="133" height="2.3" fill="url(#I10)"/><rect x="1055" y="60.8" width="133" height="2.3" fill="url(#I11)"/><rect x="1055" y="62.8" width="133" height="2.3" fill="url(#I12)"/><rect x="1055" y="64.8" width="133" height="2.3" fill="url(#I13)"/><rect x="1055" y="66.8" width="133" height="2.3" fill="url(#I14)"/><rect x="1055" y="68.8" width="133" height="2.3" fill="url(#I15)"/><rect x="1055" y="70.8" width="133" height="2.3" fill="url(#I16)"/><rect x="1055" y="72.8" width="133" height="2.3" fill="url(#I17)"/><rect x="1055" y="74.8" width="133" height="2.3" fill="url(#I18)"/><rect x="1055" y="76.8" width="133" height="2.3" fill="url(#I19)"/><rect x="1055" y="78.8" width="133" height="2.3" fill="url(#I20)"/><rect x="1055" y="80.8" width="133" height="2.3" fill="url(#I21)"/><rect x="1055" y="82.8" width="133" height="2.3" fill="url(#I22)"/><rect x="1055" y="84.8" width="133" height="2.3" fill="url(#I23)"/><rect x="1055" y="86.8" width="133" height="2.3" fill="url(#I24)"/><rect x="1055" y="88.8" width="133" height="2.3" fill="url(#I25)"/><rect x="1055" y="90.8" width="133" height="2.3" fill="url(#I26)"/><rect x="1055" y="92.8" width="133" height="2.3" fill="url(#I27)"/><rect x="1055" y="94.8" width="133" height="2.3" fill="url(#I28)"/><rect x="1055" y="96.8" width="133" height="2.3" fill="url(#I29)"/><rect x="1055" y="98.8" width="133" height="2.3" fill="url(#I30)"/><rect x="1055" y="100.8" width="133" height="2.3" fill="url(#I31)"/><rect x="1055" y="102.8" width="133" height="2.3" fill="url(#I32)"/><rect x="1055" y="104.8" width="133" height="2.3" fill="url(#I33)"/><rect x="1055" y="106.8" width="133" height="2.3" fill="url(#I34)"/><rect x="1055" y="108.8" width="133" height="2.3" fill="url(#I35)"/><rect x="1055" y="110.8" width="133" height="2.3" fill="url(#I36)"/><rect x="1055" y="112.8" width="133" height="2.3" fill="url(#I37)"/><rect x="1055" y="114.8" width="133" height="2.3" fill="url(#I38)"/><rect x="1055" y="116.8" width="133" height="2.3" fill="url(#I39)"/><rect x="1055" y="118.8" width="133" height="2.3" fill="url(#I40)"/><rect x="1055" y="120.8" width="133" height="2.3" fill="url(#I41)"/><rect x="1055" y="122.8" width="133" height="2.3" fill="url(#I42)"/><rect x="1055" y="124.8" width="133" height="2.3" fill="url(#I43)"/><rect x="1055" y="126.8" width="133" height="2.3" fill="url(#I44)"/><rect x="1055" y="128.8" width="133" height="2.3" fill="url(#I45)"/><rect x="1055" y="130.8" width="133" height="2.3" fill="url(#I46)"/><rect x="1055" y="132.8" width="133" height="1.9" fill="url(#I47)"/></g>
<rect x="1055.4" y="38.8" width="132.0" height="95.6" fill="none" stroke="#8a8a8a" stroke-width="1.2"/>
<rect x="1116.6" y="81.4" width="9.2" height="9.0" fill="#fff" stroke="#111" stroke-width="1.2"/>
<circle cx="1116.8" cy="81.6" r="3.0" fill="#6e6e6e" stroke="#2c2c2c" stroke-width="1"/>
<circle cx="1115.4" cy="82.9" r="3.1" fill="#808080" stroke="#2c2c2c" stroke-width="1"/>
<circle cx="1113.9" cy="84.3" r="3.2" fill="#8e8e8e" stroke="#2c2c2c" stroke-width="1.1"/>
<rect x="897.1" y="163.2" width="9.6" height="9.6" fill="#fff" fill-opacity="0.16" stroke="#fff" stroke-opacity="0.78" stroke-width="1.1"/>
<rect x="935.0" y="162.1" width="9.6" height="9.6" fill="#fff" fill-opacity="0.16" stroke="#fff" stroke-opacity="0.78" stroke-width="1.1"/>
<rect x="974.5" y="169.0" width="9.6" height="9.6" fill="#fff" fill-opacity="0.16" stroke="#fff" stroke-opacity="0.78" stroke-width="1.1"/>
<rect x="987.7" y="181.4" width="9.6" height="9.6" fill="#fff" fill-opacity="0.16" stroke="#fff" stroke-opacity="0.78" stroke-width="1.1"/>
<rect x="1008.7" y="195.1" width="9.6" height="9.6" fill="#fff" fill-opacity="0.16" stroke="#fff" stroke-opacity="0.78" stroke-width="1.1"/>
<rect x="915.7" y="186.8" width="9.6" height="9.6" fill="#fff" fill-opacity="0.16" stroke="#fff" stroke-opacity="0.78" stroke-width="1.1"/>
<rect x="935.7" y="214.2" width="9.6" height="9.6" fill="#fff" fill-opacity="0.16" stroke="#fff" stroke-opacity="0.78" stroke-width="1.1"/>
<rect x="948.7" y="211.4" width="9.6" height="9.6" fill="#fff" fill-opacity="0.16" stroke="#fff" stroke-opacity="0.78" stroke-width="1.1"/>
<rect x="981.6" y="230.2" width="9.6" height="9.6" fill="#fff" fill-opacity="0.16" stroke="#fff" stroke-opacity="0.78" stroke-width="1.1"/>
<rect x="1023.3" y="228.7" width="9.6" height="9.6" fill="#fff" fill-opacity="0.16" stroke="#fff" stroke-opacity="0.78" stroke-width="1.1"/>
<rect x="873.7" y="212.1" width="9.6" height="9.6" fill="#fff" fill-opacity="0.16" stroke="#fff" stroke-opacity="0.78" stroke-width="1.1"/>
<rect x="844.2" y="247.2" width="9.6" height="9.6" fill="#fff" fill-opacity="0.16" stroke="#fff" stroke-opacity="0.78" stroke-width="1.1"/>
<rect x="866.6" y="248.1" width="9.6" height="9.6" fill="#fff" fill-opacity="0.16" stroke="#fff" stroke-opacity="0.78" stroke-width="1.1"/>
<rect x="876.8" y="253.9" width="9.6" height="9.6" fill="#fff" fill-opacity="0.16" stroke="#fff" stroke-opacity="0.78" stroke-width="1.1"/>
<rect x="888.1" y="265.5" width="9.6" height="9.6" fill="#fff" fill-opacity="0.16" stroke="#fff" stroke-opacity="0.78" stroke-width="1.1"/>
<rect x="849.2" y="277.2" width="9.6" height="9.6" fill="#fff" fill-opacity="0.16" stroke="#fff" stroke-opacity="0.78" stroke-width="1.1"/>
<rect x="835.1" y="295.8" width="9.6" height="9.6" fill="#fff" fill-opacity="0.16" stroke="#fff" stroke-opacity="0.78" stroke-width="1.1"/>
<rect x="934.2" y="256.5" width="9.6" height="9.6" fill="#fff" fill-opacity="0.16" stroke="#fff" stroke-opacity="0.78" stroke-width="1.1"/>
<circle cx="902.5" cy="166.9" r="2.85" fill="#5a7d52" stroke="#101010" stroke-opacity="0.9" stroke-width="1"/>
<circle cx="939.8" cy="164.8" r="2.85" fill="#8b9a52" stroke="#101010" stroke-opacity="0.9" stroke-width="1"/>
<circle cx="976.3" cy="171.7" r="2.85" fill="#c9a23e" stroke="#101010" stroke-opacity="0.9" stroke-width="1"/>
<circle cx="990.8" cy="184.5" r="2.85" fill="#c9964e" stroke="#101010" stroke-opacity="0.9" stroke-width="1"/>
<circle cx="1012.2" cy="197.3" r="2.85" fill="#b87a42" stroke="#101010" stroke-opacity="0.9" stroke-width="1"/>
<circle cx="920.1" cy="190.1" r="2.85" fill="#4c6242" stroke="#101010" stroke-opacity="0.9" stroke-width="1"/>
<circle cx="938.0" cy="218.2" r="2.85" fill="#a88a7a" stroke="#101010" stroke-opacity="0.9" stroke-width="1"/>
<circle cx="953.9" cy="215.2" r="2.85" fill="#6c5244" stroke="#101010" stroke-opacity="0.9" stroke-width="1"/>
<circle cx="985.1" cy="235.4" r="2.85" fill="#a25260" stroke="#101010" stroke-opacity="0.9" stroke-width="1"/>
<circle cx="1029.8" cy="233.3" r="2.85" fill="#923442" stroke="#101010" stroke-opacity="0.9" stroke-width="1"/>
<circle cx="879.4" cy="217.1" r="2.85" fill="#62a292" stroke="#101010" stroke-opacity="0.9" stroke-width="1"/>
<circle cx="848.6" cy="251.4" r="2.85" fill="#2f7a92" stroke="#101010" stroke-opacity="0.9" stroke-width="1"/>
<circle cx="870.3" cy="253.3" r="2.85" fill="#526a8a" stroke="#101010" stroke-opacity="0.9" stroke-width="1"/>
<circle cx="879.4" cy="253.8" r="2.85" fill="#050505" stroke="#101010" stroke-opacity="0.9" stroke-width="1"/>
<circle cx="881.1" cy="257.7" r="2.85" fill="#7272a2" stroke="#101010" stroke-opacity="0.9" stroke-width="1"/>
<circle cx="890.0" cy="271.8" r="2.85" fill="#523a6a" stroke="#101010" stroke-opacity="0.9" stroke-width="1"/>
<circle cx="852.1" cy="281.9" r="2.85" fill="#425292" stroke="#101010" stroke-opacity="0.9" stroke-width="1"/>
<circle cx="838.1" cy="301.5" r="2.85" fill="#2a3282" stroke="#101010" stroke-opacity="0.9" stroke-width="1"/>
<circle cx="935.8" cy="261.1" r="2.85" fill="#a2528a" stroke="#101010" stroke-opacity="0.9" stroke-width="1"/>
<rect x="900.6" y="224.0" width="9.8" height="9.8" fill="#b0b0b0" fill-opacity="0.55" stroke="#000" stroke-width="1.4"/>
<circle cx="904.6" cy="228.9" r="2.85" fill="#a6a6a6" stroke="#2a2a2a" stroke-width="1"/>
<path d="M736.5 355.5 V34.0 H1192.6 V355.5" fill="none" stroke="#848484" stroke-width="1"/>
<path d="M736.5 34.0 V355.5 H1192.6" fill="none" stroke="#b4b4b4" stroke-width="1.2"/>
<rect x="735.9" y="355.5" width="1.2" height="3.6" fill="#b4b4b4"/>
<text x="736.5" y="370.3" font-size="10.8" fill="#d0d0d0" text-anchor="middle" textLength="6.2" lengthAdjust="spacingAndGlyphs">0</text>
<rect x="732.9" y="354.9" width="3.6" height="1.2" fill="#b4b4b4"/>
<text x="732.5" y="359.4" font-size="10.8" fill="#d0d0d0" text-anchor="end" textLength="6.2" lengthAdjust="spacingAndGlyphs">0</text>
<rect x="790.0" y="355.5" width="1.2" height="3.6" fill="#b4b4b4"/>
<text x="790.6" y="370.3" font-size="10.8" fill="#d0d0d0" text-anchor="middle" textLength="15.2" lengthAdjust="spacingAndGlyphs">0.1</text>
<rect x="732.9" y="316.8" width="3.6" height="1.2" fill="#b4b4b4"/>
<text x="732.5" y="321.3" font-size="10.8" fill="#d0d0d0" text-anchor="end" textLength="15.2" lengthAdjust="spacingAndGlyphs">0.1</text>
<rect x="844.1" y="355.5" width="1.2" height="3.6" fill="#b4b4b4"/>
<text x="844.7" y="370.3" font-size="10.8" fill="#d0d0d0" text-anchor="middle" textLength="15.2" lengthAdjust="spacingAndGlyphs">0.2</text>
<rect x="732.9" y="278.7" width="3.6" height="1.2" fill="#b4b4b4"/>
<text x="732.5" y="283.2" font-size="10.8" fill="#d0d0d0" text-anchor="end" textLength="15.2" lengthAdjust="spacingAndGlyphs">0.2</text>
<rect x="898.2" y="355.5" width="1.2" height="3.6" fill="#b4b4b4"/>
<text x="898.8" y="370.3" font-size="10.8" fill="#d0d0d0" text-anchor="middle" textLength="15.2" lengthAdjust="spacingAndGlyphs">0.3</text>
<rect x="732.9" y="240.6" width="3.6" height="1.2" fill="#b4b4b4"/>
<text x="732.5" y="245.1" font-size="10.8" fill="#d0d0d0" text-anchor="end" textLength="15.2" lengthAdjust="spacingAndGlyphs">0.3</text>
<rect x="952.3" y="355.5" width="1.2" height="3.6" fill="#b4b4b4"/>
<text x="952.9" y="370.3" font-size="10.8" fill="#d0d0d0" text-anchor="middle" textLength="15.2" lengthAdjust="spacingAndGlyphs">0.4</text>
<rect x="732.9" y="202.5" width="3.6" height="1.2" fill="#b4b4b4"/>
<text x="732.5" y="207.0" font-size="10.8" fill="#d0d0d0" text-anchor="end" textLength="15.2" lengthAdjust="spacingAndGlyphs">0.4</text>
<rect x="1006.4" y="355.5" width="1.2" height="3.6" fill="#b4b4b4"/>
<text x="1007.0" y="370.3" font-size="10.8" fill="#d0d0d0" text-anchor="middle" textLength="15.2" lengthAdjust="spacingAndGlyphs">0.5</text>
<rect x="732.9" y="164.4" width="3.6" height="1.2" fill="#b4b4b4"/>
<text x="732.5" y="168.9" font-size="10.8" fill="#d0d0d0" text-anchor="end" textLength="15.2" lengthAdjust="spacingAndGlyphs">0.5</text>
<rect x="1060.5" y="355.5" width="1.2" height="3.6" fill="#b4b4b4"/>
<text x="1061.1" y="370.3" font-size="10.8" fill="#d0d0d0" text-anchor="middle" textLength="15.2" lengthAdjust="spacingAndGlyphs">0.6</text>
<rect x="732.9" y="126.3" width="3.6" height="1.2" fill="#b4b4b4"/>
<text x="732.5" y="130.8" font-size="10.8" fill="#d0d0d0" text-anchor="end" textLength="15.2" lengthAdjust="spacingAndGlyphs">0.6</text>
<rect x="1114.6" y="355.5" width="1.2" height="3.6" fill="#b4b4b4"/>
<text x="1115.2" y="370.3" font-size="10.8" fill="#d0d0d0" text-anchor="middle" textLength="15.2" lengthAdjust="spacingAndGlyphs">0.7</text>
<rect x="732.9" y="88.2" width="3.6" height="1.2" fill="#b4b4b4"/>
<text x="732.5" y="92.7" font-size="10.8" fill="#d0d0d0" text-anchor="end" textLength="15.2" lengthAdjust="spacingAndGlyphs">0.7</text>
<rect x="1168.7" y="355.5" width="1.2" height="3.6" fill="#b4b4b4"/>
<text x="1169.3" y="370.3" font-size="10.8" fill="#d0d0d0" text-anchor="middle" textLength="15.2" lengthAdjust="spacingAndGlyphs">0.8</text>
<rect x="732.9" y="50.1" width="3.6" height="1.2" fill="#b4b4b4"/>
<text x="732.5" y="54.6" font-size="10.8" fill="#d0d0d0" text-anchor="end" textLength="15.2" lengthAdjust="spacingAndGlyphs">0.8</text>
<text x="955.0" y="31.0" font-size="10" fill="#cfcfcf" text-anchor="middle" textLength="54.3" lengthAdjust="spacingAndGlyphs">CIE 1931 xy</text>
<rect x="994" y="330" width="195.6" height="17.6" fill="#333333"/>
<text x="1007.6" y="344.4" font-size="14.5" fill="#f0f0f0" textLength="168.5" lengthAdjust="spacingAndGlyphs">RGB Triplet: 235, 235, 235</text>
<defs><linearGradient id="th" x1="0" x2="0" y1="0" y2="1"><stop offset="0" stop-color="#313131"/><stop offset="0.48" stop-color="#2b2b2b"/><stop offset="0.52" stop-color="#1a1a1a"/><stop offset="1" stop-color="#101010"/></linearGradient><linearGradient id="ts" x1="0" x2="1" y1="0" y2="0"><stop offset="0" stop-color="#242424"/><stop offset="1" stop-color="#343434"/></linearGradient></defs>
<rect x="232.8" y="389.6" width="967.2" height="18.3" fill="url(#th)"/>
<rect x="232.8" y="389.6" width="11.4" height="18.3" fill="#000"/>
<clipPath id="tc"><rect x="232.5" y="389" width="967.5" height="145"/></clipPath><g clip-path="url(#tc)">
<rect x="232.8" y="407.90" width="967.2" height="16.6" fill="#3d3d3d"/>
<rect x="232.8" y="424.33" width="967.2" height="16.6" fill="#707070"/>
<rect x="232.8" y="440.76" width="967.2" height="16.6" fill="#3d3d3d"/>
<rect x="232.8" y="457.19" width="967.2" height="16.6" fill="#707070"/>
<rect x="232.8" y="473.62" width="967.2" height="16.6" fill="#3d3d3d"/>
<rect x="232.8" y="490.05" width="967.2" height="16.6" fill="#707070"/>
<rect x="232.8" y="506.48" width="967.2" height="16.6" fill="#3d3d3d"/>
<rect x="232.8" y="407.9" width="11.2" height="115.2" fill="url(#ts)"/>
<text x="352.6" y="402.6" font-size="11.6" fill="#f2f2f2" textLength="33.4" lengthAdjust="spacingAndGlyphs">White</text>
<text x="421.7" y="402.6" font-size="11.6" fill="#f2f2f2" textLength="43.3" lengthAdjust="spacingAndGlyphs">Gray 80</text>
<text x="482.6" y="402.6" font-size="11.6" fill="#f2f2f2" textLength="43.3" lengthAdjust="spacingAndGlyphs">Gray 65</text>
<text x="544.1" y="402.6" font-size="11.6" fill="#f2f2f2" textLength="43.3" lengthAdjust="spacingAndGlyphs">Gray 50</text>
<text x="605.4" y="402.6" font-size="11.6" fill="#f2f2f2" textLength="43.2" lengthAdjust="spacingAndGlyphs">Gray 35</text>
<text x="666.7" y="402.6" font-size="11.6" fill="#f2f2f2" textLength="29.3" lengthAdjust="spacingAndGlyphs">Black</text>
<text x="719.6" y="402.6" font-size="11.6" fill="#f2f2f2" textLength="52.1" lengthAdjust="spacingAndGlyphs">Dark Skin</text>
<text x="780.4" y="402.6" font-size="11.6" fill="#f2f2f2" textLength="53.8" lengthAdjust="spacingAndGlyphs">Light Skin</text>
<text x="842.0" y="402.6" font-size="11.6" fill="#f2f2f2" textLength="46.3" lengthAdjust="spacingAndGlyphs">Blue Sky</text>
<text x="903.3" y="402.6" font-size="11.6" fill="#f2f2f2" textLength="39.6" lengthAdjust="spacingAndGlyphs">Foliage</text>
<text x="964.6" y="402.6" font-size="11.6" fill="#f2f2f2" textLength="65.8" lengthAdjust="spacingAndGlyphs">Blue Flower</text>
<text x="1039.2" y="402.6" font-size="11.6" fill="#f2f2f2" textLength="71.3" lengthAdjust="spacingAndGlyphs">Bluish Green</text>
<text x="1118.3" y="402.6" font-size="11.6" fill="#f2f2f2" textLength="40.8" lengthAdjust="spacingAndGlyphs">Orange</text>
<text x="1179.6" y="402.6" font-size="11.6" fill="#f2f2f2" textLength="78" lengthAdjust="spacingAndGlyphs">Purplish Blue</text>
<text x="247.8" y="420.0" font-size="11.6" fill="#f2f2f2" textLength="50.5" lengthAdjust="spacingAndGlyphs">x: CIE31</text>
<text transform="translate(352.6,420.0) scale(1.235,1)" font-size="11.6" fill="#f2f2f2">0.3100</text>
<text transform="translate(421.7,420.0) scale(1.235,1)" font-size="11.6" fill="#f2f2f2">0.3111</text>
<text transform="translate(482.6,420.0) scale(1.235,1)" font-size="11.6" fill="#f2f2f2">0.3109</text>
<text transform="translate(544.1,420.0) scale(1.235,1)" font-size="11.6" fill="#f2f2f2">0.3107</text>
<text transform="translate(605.4,420.0) scale(1.235,1)" font-size="11.6" fill="#f2f2f2">0.3103</text>
<text transform="translate(666.7,420.0) scale(1.235,1)" font-size="11.6" fill="#f2f2f2">0.2647</text>
<text transform="translate(719.6,420.0) scale(1.235,1)" font-size="11.6" fill="#f2f2f2">0.4005</text>
<text transform="translate(780.4,420.0) scale(1.235,1)" font-size="11.6" fill="#f2f2f2">0.3730</text>
<text transform="translate(842.0,420.0) scale(1.235,1)" font-size="11.6" fill="#f2f2f2">0.2486</text>
<text transform="translate(903.3,420.0) scale(1.235,1)" font-size="11.6" fill="#f2f2f2">0.3398</text>
<text transform="translate(964.6,420.0) scale(1.235,1)" font-size="11.6" fill="#f2f2f2">0.2677</text>
<text transform="translate(1039.2,420.0) scale(1.235,1)" font-size="11.6" fill="#f2f2f2">0.2634</text>
<text transform="translate(1118.3,420.0) scale(1.235,1)" font-size="11.6" fill="#f2f2f2">0.5101</text>
<text transform="translate(1179.6,420.0) scale(1.235,1)" font-size="11.6" fill="#f2f2f2">0.2171</text>
<text x="247.8" y="436.4" font-size="11.6" fill="#f2f2f2" textLength="50.5" lengthAdjust="spacingAndGlyphs">y: CIE31</text>
<text transform="translate(352.6,436.4) scale(1.235,1)" font-size="11.6" fill="#f2f2f2">0.3294</text>
<text transform="translate(421.7,436.4) scale(1.235,1)" font-size="11.6" fill="#f2f2f2">0.3309</text>
<text transform="translate(482.6,436.4) scale(1.235,1)" font-size="11.6" fill="#f2f2f2">0.3305</text>
<text transform="translate(544.1,436.4) scale(1.235,1)" font-size="11.6" fill="#f2f2f2">0.3303</text>
<text transform="translate(605.4,436.4) scale(1.235,1)" font-size="11.6" fill="#f2f2f2">0.3298</text>
<text transform="translate(666.7,436.4) scale(1.235,1)" font-size="11.6" fill="#f2f2f2">0.2646</text>
<text transform="translate(719.6,436.4) scale(1.235,1)" font-size="11.6" fill="#f2f2f2">0.3653</text>
<text transform="translate(780.4,436.4) scale(1.235,1)" font-size="11.6" fill="#f2f2f2">0.3586</text>
<text transform="translate(842.0,436.4) scale(1.235,1)" font-size="11.6" fill="#f2f2f2">0.2668</text>
<text transform="translate(903.3,436.4) scale(1.235,1)" font-size="11.6" fill="#f2f2f2">0.4321</text>
<text transform="translate(964.6,436.4) scale(1.235,1)" font-size="11.6" fill="#f2f2f2">0.2557</text>
<text transform="translate(1039.2,436.4) scale(1.235,1)" font-size="11.6" fill="#f2f2f2">0.3602</text>
<text transform="translate(1118.3,436.4) scale(1.235,1)" font-size="11.6" fill="#f2f2f2">0.4128</text>
<text transform="translate(1179.6,436.4) scale(1.235,1)" font-size="11.6" fill="#f2f2f2">0.1937</text>
<text transform="translate(247.8,452.9) scale(1.235,1)" font-size="11.6" fill="#f2f2f2">Y</text>
<text transform="translate(352.6,452.9) scale(1.235,1)" font-size="11.6" fill="#f2f2f2">108.1275</text>
<text transform="translate(421.7,452.9) scale(1.235,1)" font-size="11.6" fill="#f2f2f2">85.1141</text>
<text transform="translate(482.6,452.9) scale(1.235,1)" font-size="11.6" fill="#f2f2f2">69.8932</text>
<text transform="translate(544.1,452.9) scale(1.235,1)" font-size="11.6" fill="#f2f2f2">54.1746</text>
<text transform="translate(605.4,452.9) scale(1.235,1)" font-size="11.6" fill="#f2f2f2">38.2012</text>
<text transform="translate(666.7,452.9) scale(1.235,1)" font-size="11.6" fill="#f2f2f2">0.0616</text>
<text transform="translate(719.6,452.9) scale(1.235,1)" font-size="11.6" fill="#f2f2f2">10.6986</text>
<text transform="translate(780.4,452.9) scale(1.235,1)" font-size="11.6" fill="#f2f2f2">38.4089</text>
<text transform="translate(842.0,452.9) scale(1.235,1)" font-size="11.6" fill="#f2f2f2">20.9439</text>
<text transform="translate(903.3,452.9) scale(1.235,1)" font-size="11.6" fill="#f2f2f2">14.2968</text>
<text transform="translate(964.6,452.9) scale(1.235,1)" font-size="11.6" fill="#f2f2f2">25.9922</text>
<text transform="translate(1039.2,452.9) scale(1.235,1)" font-size="11.6" fill="#f2f2f2">46.0431</text>
<text transform="translate(1118.3,452.9) scale(1.235,1)" font-size="11.6" fill="#f2f2f2">30.1091</text>
<text transform="translate(1179.6,452.9) scale(1.235,1)" font-size="11.6" fill="#f2f2f2">12.7531</text>
<text x="247.8" y="469.3" font-size="11.6" fill="#f2f2f2" textLength="93.3" lengthAdjust="spacingAndGlyphs">Target x:CIE31</text>
<text transform="translate(352.6,469.3) scale(1.235,1)" font-size="11.6" fill="#f2f2f2">0.3127</text>
<text transform="translate(421.7,469.3) scale(1.235,1)" font-size="11.6" fill="#f2f2f2">0.3127</text>
<text transform="translate(482.6,469.3) scale(1.235,1)" font-size="11.6" fill="#f2f2f2">0.3127</text>
<text transform="translate(544.1,469.3) scale(1.235,1)" font-size="11.6" fill="#f2f2f2">0.3127</text>
<text transform="translate(605.4,469.3) scale(1.235,1)" font-size="11.6" fill="#f2f2f2">0.3127</text>
<text transform="translate(666.7,469.3) scale(1.235,1)" font-size="11.6" fill="#f2f2f2">0.3127</text>
<text transform="translate(719.6,469.3) scale(1.235,1)" font-size="11.6" fill="#f2f2f2">0.4005</text>
<text transform="translate(780.4,469.3) scale(1.235,1)" font-size="11.6" fill="#f2f2f2">0.3782</text>
<text transform="translate(842.0,469.3) scale(1.235,1)" font-size="11.6" fill="#f2f2f2">0.2500</text>
<text transform="translate(903.3,469.3) scale(1.235,1)" font-size="11.6" fill="#f2f2f2">0.3400</text>
<text transform="translate(964.6,469.3) scale(1.235,1)" font-size="11.6" fill="#f2f2f2">0.2687</text>
<text transform="translate(1039.2,469.3) scale(1.235,1)" font-size="11.6" fill="#f2f2f2">0.2620</text>
<text transform="translate(1118.3,469.3) scale(1.235,1)" font-size="11.6" fill="#f2f2f2">0.5120</text>
<text transform="translate(1179.6,469.3) scale(1.235,1)" font-size="11.6" fill="#f2f2f2">0.2161</text>
<text x="247.8" y="485.7" font-size="11.6" fill="#f2f2f2" textLength="93.3" lengthAdjust="spacingAndGlyphs">Target y:CIE31</text>
<text transform="translate(352.6,485.7) scale(1.235,1)" font-size="11.6" fill="#f2f2f2">0.3290</text>
<text transform="translate(421.7,485.7) scale(1.235,1)" font-size="11.6" fill="#f2f2f2">0.3290</text>
<text transform="translate(482.6,485.7) scale(1.235,1)" font-size="11.6" fill="#f2f2f2">0.3290</text>
<text transform="translate(544.1,485.7) scale(1.235,1)" font-size="11.6" fill="#f2f2f2">0.3290</text>
<text transform="translate(605.4,485.7) scale(1.235,1)" font-size="11.6" fill="#f2f2f2">0.3290</text>
<text transform="translate(666.7,485.7) scale(1.235,1)" font-size="11.6" fill="#f2f2f2">0.3290</text>
<text transform="translate(719.6,485.7) scale(1.235,1)" font-size="11.6" fill="#f2f2f2">0.3623</text>
<text transform="translate(780.4,485.7) scale(1.235,1)" font-size="11.6" fill="#f2f2f2">0.3560</text>
<text transform="translate(842.0,485.7) scale(1.235,1)" font-size="11.6" fill="#f2f2f2">0.2661</text>
<text transform="translate(903.3,485.7) scale(1.235,1)" font-size="11.6" fill="#f2f2f2">0.4261</text>
<text transform="translate(964.6,485.7) scale(1.235,1)" font-size="11.6" fill="#f2f2f2">0.2530</text>
<text transform="translate(1039.2,485.7) scale(1.235,1)" font-size="11.6" fill="#f2f2f2">0.3597</text>
<text transform="translate(1118.3,485.7) scale(1.235,1)" font-size="11.6" fill="#f2f2f2">0.4066</text>
<text transform="translate(1179.6,485.7) scale(1.235,1)" font-size="11.6" fill="#f2f2f2">0.1906</text>
<text x="247.8" y="502.1" font-size="11.6" fill="#f2f2f2" textLength="54.2" lengthAdjust="spacingAndGlyphs">Target Y</text>
<text transform="translate(352.6,502.1) scale(1.235,1)" font-size="11.6" fill="#f2f2f2">108.1275</text>
<text transform="translate(421.7,502.1) scale(1.235,1)" font-size="11.6" fill="#f2f2f2">85.0564</text>
<text transform="translate(482.6,502.1) scale(1.235,1)" font-size="11.6" fill="#f2f2f2">69.4016</text>
<text transform="translate(544.1,502.1) scale(1.235,1)" font-size="11.6" fill="#f2f2f2">53.3163</text>
<text transform="translate(605.4,502.1) scale(1.235,1)" font-size="11.6" fill="#f2f2f2">37.1948</text>
<text transform="translate(666.7,502.1) scale(1.235,1)" font-size="11.6" fill="#f2f2f2">0.0616</text>
<text transform="translate(719.6,502.1) scale(1.235,1)" font-size="11.6" fill="#f2f2f2">10.8922</text>
<text transform="translate(780.4,502.1) scale(1.235,1)" font-size="11.6" fill="#f2f2f2">37.7526</text>
<text transform="translate(842.0,502.1) scale(1.235,1)" font-size="11.6" fill="#f2f2f2">20.3564</text>
<text transform="translate(903.3,502.1) scale(1.235,1)" font-size="11.6" fill="#f2f2f2">14.2131</text>
<text transform="translate(964.6,502.1) scale(1.235,1)" font-size="11.6" fill="#f2f2f2">25.3117</text>
<text transform="translate(1039.2,502.1) scale(1.235,1)" font-size="11.6" fill="#f2f2f2">45.1724</text>
<text transform="translate(1118.3,502.1) scale(1.235,1)" font-size="11.6" fill="#f2f2f2">30.6060</text>
<text transform="translate(1179.6,502.1) scale(1.235,1)" font-size="11.6" fill="#f2f2f2">12.6352</text>
<text x="247.8" y="518.6" font-size="11.6" fill="#f2f2f2" textLength="53.9" lengthAdjust="spacingAndGlyphs">ΔE 2000</text>
<text transform="translate(352.6,518.6) scale(1.235,1)" font-size="11.6" fill="#f2f2f2">2.3672</text>
<text transform="translate(421.7,518.6) scale(1.235,1)" font-size="11.6" fill="#f2f2f2">2.3969</text>
<text transform="translate(482.6,518.6) scale(1.235,1)" font-size="11.6" fill="#f2f2f2">2.1728</text>
<text transform="translate(544.1,518.6) scale(1.235,1)" font-size="11.6" fill="#f2f2f2">2.0224</text>
<text transform="translate(605.4,518.6) scale(1.235,1)" font-size="11.6" fill="#f2f2f2">1.8266</text>
<text transform="translate(666.7,518.6) scale(1.235,1)" font-size="11.6" fill="#f2f2f2">0.5815</text>
<text transform="translate(719.6,518.6) scale(1.235,1)" font-size="11.6" fill="#f2f2f2">0.9230</text>
<text transform="translate(780.4,518.6) scale(1.235,1)" font-size="11.6" fill="#f2f2f2">2.2661</text>
<text transform="translate(842.0,518.6) scale(1.235,1)" font-size="11.6" fill="#f2f2f2">0.9926</text>
<text transform="translate(903.3,518.6) scale(1.235,1)" font-size="11.6" fill="#f2f2f2">0.8037</text>
<text transform="translate(964.6,518.6) scale(1.235,1)" font-size="11.6" fill="#f2f2f2">1.3190</text>
<text transform="translate(1039.2,518.6) scale(1.235,1)" font-size="11.6" fill="#f2f2f2">0.4967</text>
<text transform="translate(1118.3,518.6) scale(1.235,1)" font-size="11.6" fill="#f2f2f2">1.8008</text>
<text transform="translate(1179.6,518.6) scale(1.235,1)" font-size="11.6" fill="#f2f2f2">0.5003</text>
</g>
<rect x="244.20000000000002" y="523.0" width="955.8000000000001" height="10.4" fill="#6b6b6b"/>
<rect x="260" y="523.8" width="523" height="8.8" rx="4" fill="#4a4a4a"/>
<rect x="244.6" y="523.6" width="11.2" height="9.2" fill="#969696"/><path d="M252.6 525.2 L248 528.2 L252.6 531.2Z" fill="#2a2a2a"/>
<rect x="1185.2" y="523.6" width="12.3" height="9.2" fill="#8f8f8f"/><path d="M1189.6 525.2 L1194.2 528.2 L1189.6 531.2Z" fill="#2a2a2a"/>
<g>
<defs><linearGradient id="lg" x1="0" x2="0" y1="0" y2="1"><stop offset="0" stop-color="#8784a0"/><stop offset="0.45" stop-color="#3a3a48"/><stop offset="0.7" stop-color="#2e2e36"/><stop offset="1" stop-color="#5a4a3a"/></linearGradient></defs>
<rect x="1011.5" y="495.5" width="24.2" height="23.8" rx="3.4" fill="#fa8a0c"/>
<path d="M1021.8 496.4 C1023 499.6 1024.8 501.6 1026.8 503.9 C1028.4 505.8 1029.6 507.4 1029.85 508.9 C1029 512.4 1027 515.6 1024.9 519.2 L1021.0 519.0 C1023 515.4 1024.6 512.2 1025.2 508.9 C1024.6 506.6 1023 504.6 1021.8 502.6 C1020.2 500.6 1018.8 498.8 1018.0 496.6Z" fill="url(#lg)"/>
<path d="M1029.6 496.8 L1032.8 497.2 C1031.8 498.8 1030.8 500.2 1030.0 501.4 C1029.9 500 1029.8 498.4 1029.6 496.8Z" fill="#6f6f78"/>
<text x="1040.8" y="516.3" font-size="25.4" font-weight="200" style="font-family:'DejaVu Sans',sans-serif" fill="#141414" stroke="#141414" stroke-width="0.75" opacity="0.78" textLength="138.0" lengthAdjust="spacingAndGlyphs">Soomal.com</text>
</g>
</svg>
</body></html>
